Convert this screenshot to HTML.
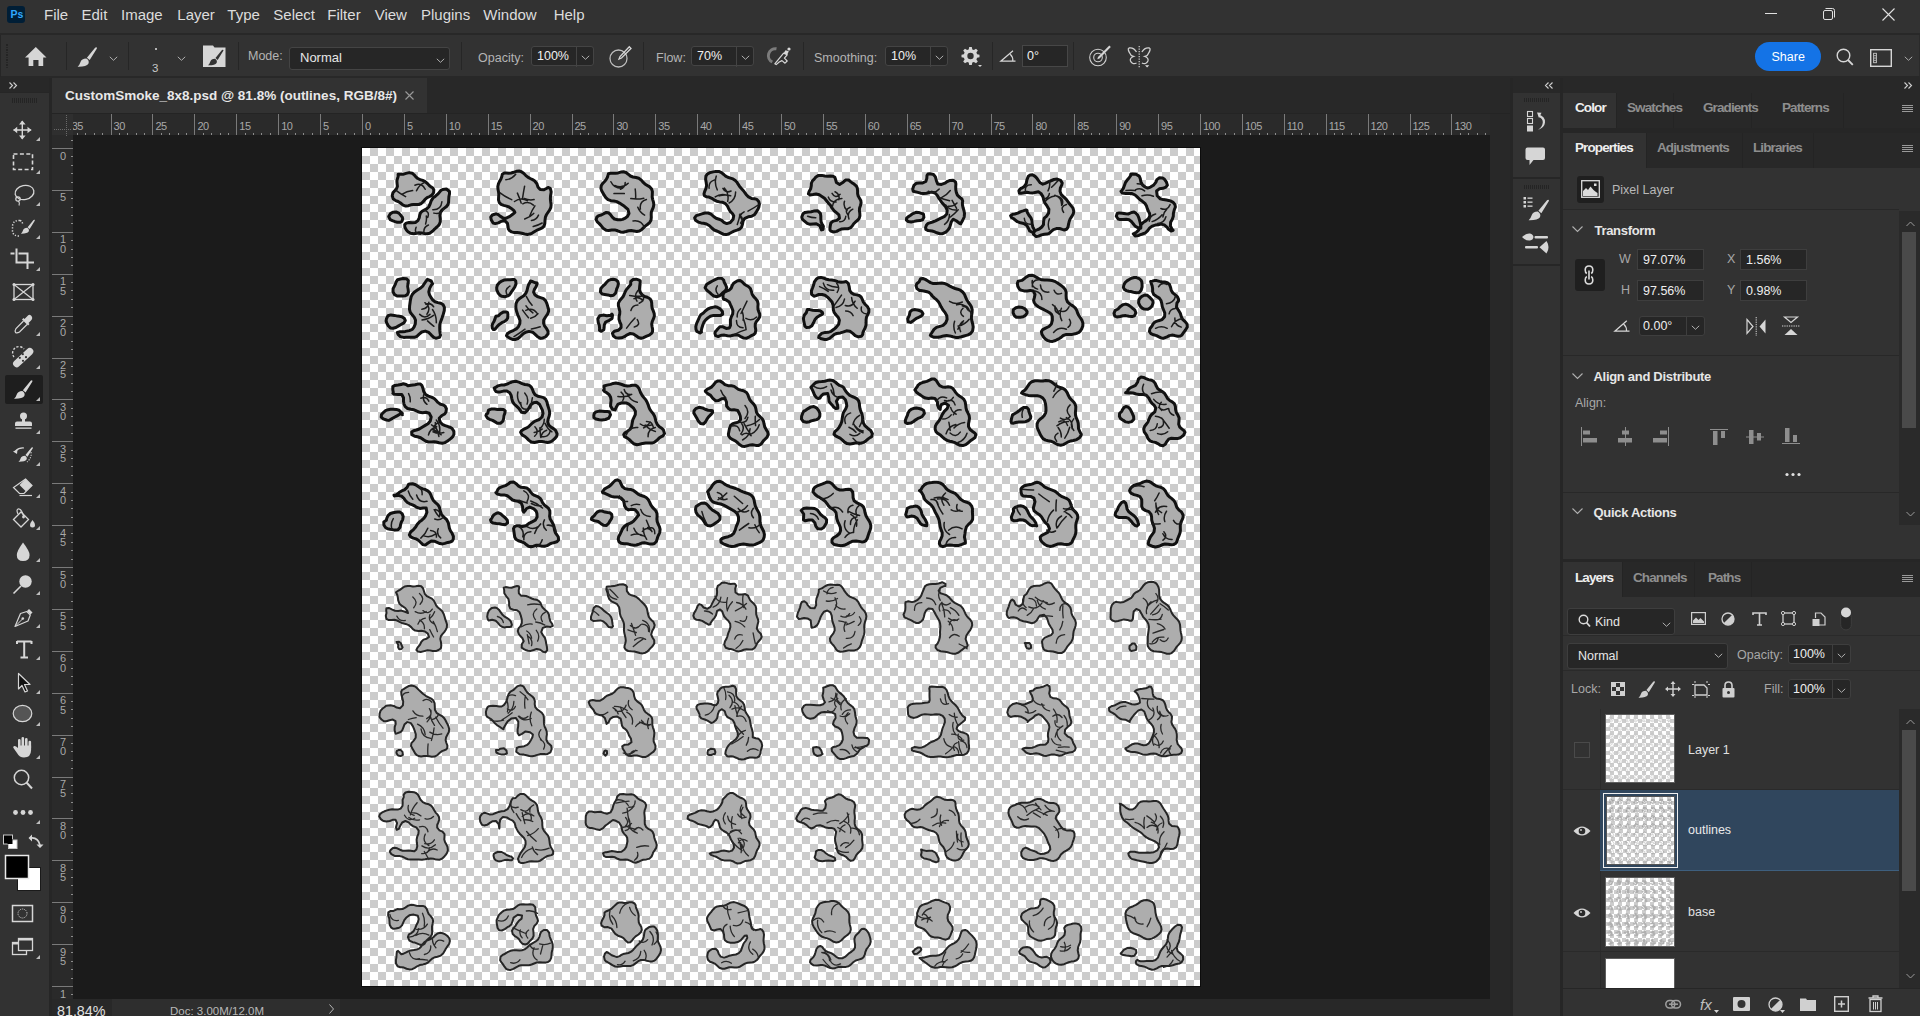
<!DOCTYPE html>
<html><head><meta charset="utf-8">
<style>
*{box-sizing:border-box;margin:0;padding:0}
html,body{width:1920px;height:1016px;overflow:hidden;background:#323232;font-family:"Liberation Sans",sans-serif;color:#d6d6d6}
.a{position:absolute}
.t{position:absolute;white-space:nowrap;line-height:1}
.s{position:absolute;overflow:visible}
.inp{position:absolute;background:#262626;border:1px solid #444444;border-radius:3px}
</style></head><body>
<div class="a" style="left:0px;top:0px;width:1920px;height:33px;background:#323232;"></div>
<div class="a" style="left:7px;top:6px;width:18px;height:17px;background:#001e36;border-radius:3px"></div>
<div class="t" style="left:10.6px;top:9.41px;font-size:10.5px;color:#31a8ff;font-weight:bold;letter-spacing:-0.1px">Ps</div>
<div class="t" style="left:44px;top:6.9px;font-size:15px;color:#dcdcdc;font-weight:normal;">File</div>
<div class="t" style="left:81.5px;top:6.9px;font-size:15px;color:#dcdcdc;font-weight:normal;">Edit</div>
<div class="t" style="left:121px;top:6.9px;font-size:15px;color:#dcdcdc;font-weight:normal;">Image</div>
<div class="t" style="left:177.3px;top:6.9px;font-size:15px;color:#dcdcdc;font-weight:normal;">Layer</div>
<div class="t" style="left:227.3px;top:6.9px;font-size:15px;color:#dcdcdc;font-weight:normal;">Type</div>
<div class="t" style="left:273.3px;top:6.9px;font-size:15px;color:#dcdcdc;font-weight:normal;">Select</div>
<div class="t" style="left:327.3px;top:6.9px;font-size:15px;color:#dcdcdc;font-weight:normal;">Filter</div>
<div class="t" style="left:374.7px;top:6.9px;font-size:15px;color:#dcdcdc;font-weight:normal;">View</div>
<div class="t" style="left:421px;top:6.9px;font-size:15px;color:#dcdcdc;font-weight:normal;">Plugins</div>
<div class="t" style="left:483.3px;top:6.9px;font-size:15px;color:#dcdcdc;font-weight:normal;">Window</div>
<div class="t" style="left:553.7px;top:6.9px;font-size:15px;color:#dcdcdc;font-weight:normal;">Help</div>
<div class="a" style="left:1765px;top:13px;width:12px;height:1px;background:#e0e0e0;"></div>
<svg class="s" style="left:1822px;top:7px" width="14" height="14" viewBox="0 0 14 14"><rect x="1.5" y="3.5" width="9" height="9" rx="1.5" fill="none" stroke="#e0e0e0" stroke-width="1"/><path d="M3.5 1.5H10.5Q12.5 1.5 12.5 3.5V10.5" fill="none" stroke="#e0e0e0" stroke-width="1"/></svg>
<svg class="s" style="left:1882px;top:8px" width="13" height="13" viewBox="0 0 13 13"><path d="M0.5 0.5L12.5 12.5M12.5 0.5L0.5 12.5" stroke="#e0e0e0" stroke-width="1.1"/></svg>
<div class="a" style="left:0px;top:33px;width:1920px;height:2px;background:#282828;"></div>
<div class="a" style="left:0px;top:35px;width:1920px;height:42px;background:#323232;"></div>
<div class="a" style="left:1919px;top:35px;width:1px;height:42px;background:#2a2a2a;"></div>
<div class="a" style="left:0px;top:76px;width:1920px;height:2px;background:#282828;"></div>
<div class="a" style="left:0px;top:35px;width:1px;height:42px;background:#262626;"></div>
<div class="a" style="left:6px;top:44px;width:2px;height:2px;background:#242424;"></div>
<div class="a" style="left:6px;top:46.5px;width:2px;height:1px;background:#262626;"></div>
<div class="a" style="left:6px;top:49px;width:2px;height:2px;background:#242424;"></div>
<div class="a" style="left:6px;top:51.5px;width:2px;height:1px;background:#262626;"></div>
<div class="a" style="left:6px;top:54px;width:2px;height:2px;background:#242424;"></div>
<div class="a" style="left:6px;top:56.5px;width:2px;height:1px;background:#262626;"></div>
<div class="a" style="left:6px;top:59px;width:2px;height:2px;background:#242424;"></div>
<div class="a" style="left:6px;top:61.5px;width:2px;height:1px;background:#262626;"></div>
<div class="a" style="left:6px;top:64px;width:2px;height:2px;background:#242424;"></div>
<div class="a" style="left:6px;top:66.5px;width:2px;height:1px;background:#262626;"></div>
<svg class="s" style="left:25px;top:47px" width="22" height="20" viewBox="0 0 22 20"><path d="M10.8 0L21.5 10.5H18.2V19H13.5V13H8.3V19H3.6V10.5H0Z" fill="#d6d6d6"/></svg>
<div class="a" style="left:66px;top:42px;width:1px;height:28px;background:#262626;"></div>
<svg class="s" style="left:77px;top:47px" width="20" height="20" viewBox="0 0 20 20"><path d="M19.8 0.5Q20.2 1.1 19.6 2L12.7 13.1 9.9 10.7 18.1 0.7Q19.1 -0.1 19.8 0.5Z M9.3 11.5Q12.7 13.5 11.4 16.8Q9.4 19.9 0.6 19.7Q2.6 18 3.4 15.2Q4.6 11.5 9.3 11.5Z" fill="#d6d6d6"/></svg>
<svg class="s" style="left:109px;top:55.5px" width="9" height="6" viewBox="0 0 9 6"><path d="M0.8 0.8L4.5 4.3 8.2 0.8" fill="none" stroke="#b0b0b0" stroke-width="1"/></svg>
<div class="a" style="left:128px;top:42px;width:1px;height:28px;background:#262626;"></div>
<div class="a" style="left:155px;top:48px;width:2px;height:2px;background:#e0e0e0;border-radius:1px"></div>
<div class="t" style="left:152px;top:63.27px;font-size:11.5px;color:#c8c8c8;font-weight:normal;">3</div>
<svg class="s" style="left:177px;top:55.5px" width="9" height="6" viewBox="0 0 9 6"><path d="M0.8 0.8L4.5 4.3 8.2 0.8" fill="none" stroke="#b0b0b0" stroke-width="1"/></svg>
<svg class="s" style="left:203px;top:45px" width="23" height="22" viewBox="0 0 23 22"><path d="M0 0.5H10L11.5 2.5H22.5V22H0Z" fill="#d6d6d6"/><g transform="translate(4.5,4.5) scale(0.8)"><path d="M19.8 0.5Q20.2 1.1 19.6 2L12.7 13.1 9.9 10.7 18.1 0.7Q19.1 -0.1 19.8 0.5Z M9.3 11.5Q12.7 13.5 11.4 16.8Q9.4 19.9 0.6 19.7Q2.6 18 3.4 15.2Q4.6 11.5 9.3 11.5Z" fill="#323232"/></g></svg>
<div class="a" style="left:238px;top:42px;width:1px;height:28px;background:#262626;"></div>
<div class="t" style="left:248px;top:49.72px;font-size:12.5px;color:#b4b4b4;font-weight:normal;">Mode:</div>
<div class="inp" style="left:289px;top:47px;width:161px;height:23px"></div>
<div class="t" style="left:300px;top:51.3px;font-size:13px;color:#e6e6e6;font-weight:normal;">Normal</div>
<svg class="s" style="left:436px;top:57.5px" width="9" height="6" viewBox="0 0 9 6"><path d="M0.8 0.8L4.5 4.3 8.2 0.8" fill="none" stroke="#b0b0b0" stroke-width="1"/></svg>
<div class="a" style="left:461px;top:42px;width:1px;height:28px;background:#262626;"></div>
<div class="t" style="left:478px;top:51.72px;font-size:12.5px;color:#b4b4b4;font-weight:normal;">Opacity:</div>
<div class="inp" style="left:531px;top:46px;width:63px;height:20px"></div>
<div class="a" style="left:576px;top:46px;width:1px;height:21px;background:#444444;"></div>
<div class="t" style="left:537px;top:50.02px;font-size:12.5px;color:#f0f0f0;font-weight:normal;">100%</div>
<svg class="s" style="left:581px;top:54.5px" width="9" height="6" viewBox="0 0 9 6"><path d="M0.8 0.8L4.5 4.3 8.2 0.8" fill="none" stroke="#b0b0b0" stroke-width="1"/></svg>
<svg class="s" style="left:609px;top:46px" width="23" height="22" viewBox="0 0 23 22"><circle cx="9.5" cy="12.5" r="8.5" fill="none" stroke="#bdbdbd" stroke-width="1.3"/><circle cx="9.5" cy="12.5" r="7" fill="#3a3a3a"/><path d="M20.3 0.8L22 2.5 12.5 12 10 13 11 10.5Z" fill="none" stroke="#d6d6d6" stroke-width="1.3"/></svg>
<div class="a" style="left:643px;top:42px;width:1px;height:28px;background:#262626;"></div>
<div class="t" style="left:656px;top:51.72px;font-size:12.5px;color:#b4b4b4;font-weight:normal;">Flow:</div>
<div class="inp" style="left:691px;top:46px;width:63px;height:20px"></div>
<div class="a" style="left:736px;top:46px;width:1px;height:21px;background:#444444;"></div>
<div class="t" style="left:697px;top:50.02px;font-size:12.5px;color:#f0f0f0;font-weight:normal;">70%</div>
<svg class="s" style="left:741px;top:54.5px" width="9" height="6" viewBox="0 0 9 6"><path d="M0.8 0.8L4.5 4.3 8.2 0.8" fill="none" stroke="#b0b0b0" stroke-width="1"/></svg>
<svg class="s" style="left:764px;top:42px" width="30" height="28" viewBox="0 0 30 28"><path d="M12.5 6.8A7 7 0 0 0 8.3 20" fill="none" stroke="#7c7c7c" stroke-width="3"/><path d="M10.8 21.8L19.6 11.2 23.2 12.8 20.4 16.2 23.2 19 21 21.2 18 18.6 15.2 20 12.2 22.6Z" fill="none" stroke="#d8d8d8" stroke-width="1.2" stroke-linejoin="round"/><path d="M19.6 11.2L21.5 8.2 24.8 9.2 23.2 12.8Z" fill="#d8d8d8"/><circle cx="25" cy="7" r="1.6" fill="#d8d8d8"/></svg>
<div class="a" style="left:803px;top:42px;width:1px;height:28px;background:#262626;"></div>
<div class="t" style="left:814px;top:51.72px;font-size:12.5px;color:#b4b4b4;font-weight:normal;">Smoothing:</div>
<div class="inp" style="left:885px;top:46px;width:63px;height:20px"></div>
<div class="a" style="left:930px;top:46px;width:1px;height:21px;background:#444444;"></div>
<div class="t" style="left:891px;top:50.02px;font-size:12.5px;color:#f0f0f0;font-weight:normal;">10%</div>
<svg class="s" style="left:935px;top:54.5px" width="9" height="6" viewBox="0 0 9 6"><path d="M0.8 0.8L4.5 4.3 8.2 0.8" fill="none" stroke="#b0b0b0" stroke-width="1"/></svg>
<svg class="s" style="left:962px;top:47px" width="20" height="20" viewBox="0 0 20 20"><path d="M7.2 0H9.8L10.3 2.4 11.9 3.1 14 1.7 15.8 3.5 14.4 5.6 15.1 7.2 17.5 7.7V10.3L15.1 10.8 14.4 12.4 15.8 14.5 14 16.3 11.9 14.9 10.3 15.6 9.8 18H7.2L6.7 15.6 5.1 14.9 3 16.3 1.2 14.5 2.6 12.4 1.9 10.8-0.5 10.3V7.7L1.9 7.2 2.6 5.6 1.2 3.5 3 1.7 5.1 3.1 6.7 2.4Z" fill="#d6d6d6"/><circle cx="8.5" cy="9" r="3.2" fill="#323232"/><path d="M16 18L20 18 18 20Z" fill="#d6d6d6"/></svg>
<div class="a" style="left:992px;top:42px;width:1px;height:28px;background:#262626;"></div>
<svg class="s" style="left:1000px;top:50px" width="17" height="12" viewBox="0 0 17 12"><path d="M15.5 11.2H0.8L13 0.8M10.2 4.2Q13.2 7 12.8 11" fill="none" stroke="#d6d6d6" stroke-width="1.2"/></svg>
<div class="inp" style="left:1022px;top:45px;width:46px;height:22px;border-radius:0;border-color:#474747"></div>
<div class="t" style="left:1027px;top:50.02px;font-size:12.5px;color:#f0f0f0;font-weight:normal;">0&deg;</div>
<div class="a" style="left:1073px;top:42px;width:1px;height:28px;background:#262626;"></div>
<svg class="s" style="left:1089px;top:45px" width="22" height="22" viewBox="0 0 22 22"><circle cx="9" cy="12.5" r="8.3" fill="none" stroke="#d0d0d0" stroke-width="1.1"/><circle cx="9" cy="12.5" r="4.3" fill="none" stroke="#d0d0d0" stroke-width="1.1"/><path d="M20.3 0.6L21.8 2.1 10.5 13.4 8.3 14.3 9 12Z" fill="#d6d6d6"/></svg>
<svg class="s" style="left:1124px;top:42px" width="30" height="30" viewBox="0 0 30 30"><path d="M12.5 10C11 7.5 8 5.5 5 6C3.5 6.5 4.5 9 6 11.5C6.5 13 7 14 9.5 14.5C7 15.5 6 17.5 6.5 19C7.5 21.5 10 22.5 12.5 21" fill="none" stroke="#d0d0d0" stroke-width="1.3"/><g transform="translate(30.4,0) scale(-1,1)"><path d="M12.5 10C11 7.5 8 5.5 5 6C3.5 6.5 4.5 9 6 11.5C6.5 13 7 14 9.5 14.5C7 15.5 6 17.5 6.5 19C7.5 21.5 10 22.5 12.5 21" fill="none" stroke="#d0d0d0" stroke-width="1.3"/></g><path d="M15.2 4V26" stroke="#d0d0d0" stroke-width="1.2" stroke-dasharray="1.2 1.3"/><path d="M21 23.3H25.2L23.1 25.6Z" fill="#e0e0e0"/></svg>
<div class="a" style="left:1755px;top:42px;width:66px;height:29px;background:#1473e6;border-radius:14.5px"></div>
<div class="t" style="left:1771.5px;top:50.72px;font-size:12.5px;color:#ffffff;font-weight:normal;">Share</div>
<svg class="s" style="left:1836px;top:48px" width="18" height="19" viewBox="0 0 18 19"><circle cx="7.5" cy="7.5" r="6.3" fill="none" stroke="#d6d6d6" stroke-width="1.4"/><path d="M12 12L16.8 16.8" stroke="#d6d6d6" stroke-width="1.8"/></svg>
<svg class="s" style="left:1870px;top:49px" width="22" height="18" viewBox="0 0 22 18"><rect x="0.7" y="0.7" width="20.6" height="16.6" fill="none" stroke="#d6d6d6" stroke-width="1.4"/><rect x="3.6" y="4.3" width="2.8" height="9.4" fill="none" stroke="#c8c8c8" stroke-width="0.9"/><rect x="4.3" y="6" width="1.4" height="1.3" fill="#c8c8c8"/><rect x="4.3" y="8.4" width="1.4" height="1.3" fill="#c8c8c8"/><rect x="4.3" y="10.8" width="1.4" height="1.3" fill="#c8c8c8"/></svg>
<svg class="s" style="left:1904px;top:55.5px" width="9" height="6" viewBox="0 0 9 6"><path d="M0.8 0.8L4.5 4.3 8.2 0.8" fill="none" stroke="#a8a8a8" stroke-width="1"/></svg>
<div class="a" style="left:0px;top:78px;width:49px;height:15px;background:#282828;"></div>
<svg class="s" style="left:9px;top:82px" width="9" height="7" viewBox="0 0 9 7"><path d="M0.5 0.5L3.5 3.5 0.5 6.5M4.5 0.5L7.5 3.5 4.5 6.5" fill="none" stroke="#cfcfcf" stroke-width="1.1"/></svg>
<div class="a" style="left:49px;top:78px;width:3px;height:938px;background:#262626;"></div>
<div class="a" style="left:0px;top:93px;width:49px;height:923px;background:#323232;"></div>
<div class="a" style="left:0px;top:92px;width:49px;height:1px;background:#262626;"></div>
<div class="a" style="left:52px;top:78px;width:1458px;height:35px;background:#282828;"></div>
<div class="a" style="left:52px;top:78px;width:375px;height:35px;background:#323232;"></div>
<div class="t" style="left:64.9px;top:88.87px;font-size:13.5px;color:#e8e8e8;font-weight:bold;">CustomSmoke_8x8.psd @ 81.8% (outlines, RGB/8#)</div>
<svg class="s" style="left:405px;top:91px" width="9" height="9" viewBox="0 0 9 9"><path d="M0.5 0.5L8.5 8.5M8.5 0.5L0.5 8.5" stroke="#9a9a9a" stroke-width="1.1"/></svg>
<div class="a" style="left:52px;top:113px;width:1458px;height:1px;background:#242424;"></div>
<div class="a" style="left:52px;top:114px;width:21px;height:21px;background:#2f2f2f;"></div>
<div class="a" style="left:73px;top:114px;width:1417px;height:21px;background:#2a2a2a;"></div>
<div class="a" style="left:52px;top:135px;width:21px;height:864px;background:#2a2a2a;"></div>
<div class="a" style="left:73px;top:135px;width:1417px;height:864px;background:#1b1b1b;"></div>
<div class="a" style="left:1490px;top:114px;width:20px;height:885px;background:#282828;"></div>
<div class="a" style="left:54px;top:129px;width:1px;height:1px;background:#6a6a6a;"></div>
<div class="a" style="left:56px;top:129px;width:1px;height:1px;background:#6a6a6a;"></div>
<div class="a" style="left:58px;top:129px;width:1px;height:1px;background:#6a6a6a;"></div>
<div class="a" style="left:60px;top:129px;width:1px;height:1px;background:#6a6a6a;"></div>
<div class="a" style="left:62px;top:129px;width:1px;height:1px;background:#6a6a6a;"></div>
<div class="a" style="left:64px;top:129px;width:1px;height:1px;background:#6a6a6a;"></div>
<div class="a" style="left:66px;top:129px;width:1px;height:1px;background:#6a6a6a;"></div>
<div class="a" style="left:68px;top:129px;width:1px;height:1px;background:#6a6a6a;"></div>
<div class="a" style="left:70px;top:129px;width:1px;height:1px;background:#6a6a6a;"></div>
<div class="a" style="left:66px;top:115px;width:1px;height:1px;background:#6a6a6a;"></div>
<div class="a" style="left:66px;top:117px;width:1px;height:1px;background:#6a6a6a;"></div>
<div class="a" style="left:66px;top:119px;width:1px;height:1px;background:#6a6a6a;"></div>
<div class="a" style="left:66px;top:121px;width:1px;height:1px;background:#6a6a6a;"></div>
<div class="a" style="left:66px;top:123px;width:1px;height:1px;background:#6a6a6a;"></div>
<div class="a" style="left:66px;top:125px;width:1px;height:1px;background:#6a6a6a;"></div>
<div class="a" style="left:66px;top:127px;width:1px;height:1px;background:#6a6a6a;"></div>
<div class="a" style="left:66px;top:129px;width:1px;height:1px;background:#6a6a6a;"></div>
<div class="a" style="left:66px;top:131px;width:1px;height:1px;background:#6a6a6a;"></div>
<div class="a" style="left:66px;top:133px;width:1px;height:1px;background:#6a6a6a;"></div>
<div class="a" style="left:66px;top:135px;width:1px;height:1px;background:#6a6a6a;"></div>
<div class="a" style="left:77px;top:133px;width:1px;height:2px;background:#8c8c8c"></div><div class="a" style="left:85px;top:133px;width:1px;height:2px;background:#8c8c8c"></div><div class="a" style="left:94px;top:133px;width:1px;height:2px;background:#8c8c8c"></div><div class="a" style="left:102px;top:133px;width:1px;height:2px;background:#8c8c8c"></div><div class="a" style="left:111px;top:114px;width:1px;height:21px;background:#7a7a7a"></div><div class="a" style="left:119px;top:133px;width:1px;height:2px;background:#8c8c8c"></div><div class="a" style="left:127px;top:133px;width:1px;height:2px;background:#8c8c8c"></div><div class="a" style="left:136px;top:133px;width:1px;height:2px;background:#8c8c8c"></div><div class="a" style="left:144px;top:133px;width:1px;height:2px;background:#8c8c8c"></div><div class="a" style="left:152px;top:114px;width:1px;height:21px;background:#7a7a7a"></div><div class="a" style="left:161px;top:133px;width:1px;height:2px;background:#8c8c8c"></div><div class="a" style="left:169px;top:133px;width:1px;height:2px;background:#8c8c8c"></div><div class="a" style="left:178px;top:133px;width:1px;height:2px;background:#8c8c8c"></div><div class="a" style="left:186px;top:133px;width:1px;height:2px;background:#8c8c8c"></div><div class="a" style="left:194px;top:114px;width:1px;height:21px;background:#7a7a7a"></div><div class="a" style="left:203px;top:133px;width:1px;height:2px;background:#8c8c8c"></div><div class="a" style="left:211px;top:133px;width:1px;height:2px;background:#8c8c8c"></div><div class="a" style="left:220px;top:133px;width:1px;height:2px;background:#8c8c8c"></div><div class="a" style="left:228px;top:133px;width:1px;height:2px;background:#8c8c8c"></div><div class="a" style="left:236px;top:114px;width:1px;height:21px;background:#7a7a7a"></div><div class="a" style="left:245px;top:133px;width:1px;height:2px;background:#8c8c8c"></div><div class="a" style="left:253px;top:133px;width:1px;height:2px;background:#8c8c8c"></div><div class="a" style="left:261px;top:133px;width:1px;height:2px;background:#8c8c8c"></div><div class="a" style="left:270px;top:133px;width:1px;height:2px;background:#8c8c8c"></div><div class="a" style="left:278px;top:114px;width:1px;height:21px;background:#7a7a7a"></div><div class="a" style="left:287px;top:133px;width:1px;height:2px;background:#8c8c8c"></div><div class="a" style="left:295px;top:133px;width:1px;height:2px;background:#8c8c8c"></div><div class="a" style="left:303px;top:133px;width:1px;height:2px;background:#8c8c8c"></div><div class="a" style="left:312px;top:133px;width:1px;height:2px;background:#8c8c8c"></div><div class="a" style="left:320px;top:114px;width:1px;height:21px;background:#7a7a7a"></div><div class="a" style="left:328px;top:133px;width:1px;height:2px;background:#8c8c8c"></div><div class="a" style="left:337px;top:133px;width:1px;height:2px;background:#8c8c8c"></div><div class="a" style="left:345px;top:133px;width:1px;height:2px;background:#8c8c8c"></div><div class="a" style="left:354px;top:133px;width:1px;height:2px;background:#8c8c8c"></div><div class="a" style="left:362px;top:114px;width:1px;height:21px;background:#7a7a7a"></div><div class="a" style="left:370px;top:133px;width:1px;height:2px;background:#8c8c8c"></div><div class="a" style="left:379px;top:133px;width:1px;height:2px;background:#8c8c8c"></div><div class="a" style="left:387px;top:133px;width:1px;height:2px;background:#8c8c8c"></div><div class="a" style="left:396px;top:133px;width:1px;height:2px;background:#8c8c8c"></div><div class="a" style="left:404px;top:114px;width:1px;height:21px;background:#7a7a7a"></div><div class="a" style="left:412px;top:133px;width:1px;height:2px;background:#8c8c8c"></div><div class="a" style="left:421px;top:133px;width:1px;height:2px;background:#8c8c8c"></div><div class="a" style="left:429px;top:133px;width:1px;height:2px;background:#8c8c8c"></div><div class="a" style="left:437px;top:133px;width:1px;height:2px;background:#8c8c8c"></div><div class="a" style="left:446px;top:114px;width:1px;height:21px;background:#7a7a7a"></div><div class="a" style="left:454px;top:133px;width:1px;height:2px;background:#8c8c8c"></div><div class="a" style="left:463px;top:133px;width:1px;height:2px;background:#8c8c8c"></div><div class="a" style="left:471px;top:133px;width:1px;height:2px;background:#8c8c8c"></div><div class="a" style="left:479px;top:133px;width:1px;height:2px;background:#8c8c8c"></div><div class="a" style="left:488px;top:114px;width:1px;height:21px;background:#7a7a7a"></div><div class="a" style="left:496px;top:133px;width:1px;height:2px;background:#8c8c8c"></div><div class="a" style="left:504px;top:133px;width:1px;height:2px;background:#8c8c8c"></div><div class="a" style="left:513px;top:133px;width:1px;height:2px;background:#8c8c8c"></div><div class="a" style="left:521px;top:133px;width:1px;height:2px;background:#8c8c8c"></div><div class="a" style="left:530px;top:114px;width:1px;height:21px;background:#7a7a7a"></div><div class="a" style="left:538px;top:133px;width:1px;height:2px;background:#8c8c8c"></div><div class="a" style="left:546px;top:133px;width:1px;height:2px;background:#8c8c8c"></div><div class="a" style="left:555px;top:133px;width:1px;height:2px;background:#8c8c8c"></div><div class="a" style="left:563px;top:133px;width:1px;height:2px;background:#8c8c8c"></div><div class="a" style="left:572px;top:114px;width:1px;height:21px;background:#7a7a7a"></div><div class="a" style="left:580px;top:133px;width:1px;height:2px;background:#8c8c8c"></div><div class="a" style="left:588px;top:133px;width:1px;height:2px;background:#8c8c8c"></div><div class="a" style="left:597px;top:133px;width:1px;height:2px;background:#8c8c8c"></div><div class="a" style="left:605px;top:133px;width:1px;height:2px;background:#8c8c8c"></div><div class="a" style="left:613px;top:114px;width:1px;height:21px;background:#7a7a7a"></div><div class="a" style="left:622px;top:133px;width:1px;height:2px;background:#8c8c8c"></div><div class="a" style="left:630px;top:133px;width:1px;height:2px;background:#8c8c8c"></div><div class="a" style="left:639px;top:133px;width:1px;height:2px;background:#8c8c8c"></div><div class="a" style="left:647px;top:133px;width:1px;height:2px;background:#8c8c8c"></div><div class="a" style="left:655px;top:114px;width:1px;height:21px;background:#7a7a7a"></div><div class="a" style="left:664px;top:133px;width:1px;height:2px;background:#8c8c8c"></div><div class="a" style="left:672px;top:133px;width:1px;height:2px;background:#8c8c8c"></div><div class="a" style="left:680px;top:133px;width:1px;height:2px;background:#8c8c8c"></div><div class="a" style="left:689px;top:133px;width:1px;height:2px;background:#8c8c8c"></div><div class="a" style="left:697px;top:114px;width:1px;height:21px;background:#7a7a7a"></div><div class="a" style="left:706px;top:133px;width:1px;height:2px;background:#8c8c8c"></div><div class="a" style="left:714px;top:133px;width:1px;height:2px;background:#8c8c8c"></div><div class="a" style="left:722px;top:133px;width:1px;height:2px;background:#8c8c8c"></div><div class="a" style="left:731px;top:133px;width:1px;height:2px;background:#8c8c8c"></div><div class="a" style="left:739px;top:114px;width:1px;height:21px;background:#7a7a7a"></div><div class="a" style="left:747px;top:133px;width:1px;height:2px;background:#8c8c8c"></div><div class="a" style="left:756px;top:133px;width:1px;height:2px;background:#8c8c8c"></div><div class="a" style="left:764px;top:133px;width:1px;height:2px;background:#8c8c8c"></div><div class="a" style="left:773px;top:133px;width:1px;height:2px;background:#8c8c8c"></div><div class="a" style="left:781px;top:114px;width:1px;height:21px;background:#7a7a7a"></div><div class="a" style="left:789px;top:133px;width:1px;height:2px;background:#8c8c8c"></div><div class="a" style="left:798px;top:133px;width:1px;height:2px;background:#8c8c8c"></div><div class="a" style="left:806px;top:133px;width:1px;height:2px;background:#8c8c8c"></div><div class="a" style="left:815px;top:133px;width:1px;height:2px;background:#8c8c8c"></div><div class="a" style="left:823px;top:114px;width:1px;height:21px;background:#7a7a7a"></div><div class="a" style="left:831px;top:133px;width:1px;height:2px;background:#8c8c8c"></div><div class="a" style="left:840px;top:133px;width:1px;height:2px;background:#8c8c8c"></div><div class="a" style="left:848px;top:133px;width:1px;height:2px;background:#8c8c8c"></div><div class="a" style="left:856px;top:133px;width:1px;height:2px;background:#8c8c8c"></div><div class="a" style="left:865px;top:114px;width:1px;height:21px;background:#7a7a7a"></div><div class="a" style="left:873px;top:133px;width:1px;height:2px;background:#8c8c8c"></div><div class="a" style="left:882px;top:133px;width:1px;height:2px;background:#8c8c8c"></div><div class="a" style="left:890px;top:133px;width:1px;height:2px;background:#8c8c8c"></div><div class="a" style="left:898px;top:133px;width:1px;height:2px;background:#8c8c8c"></div><div class="a" style="left:907px;top:114px;width:1px;height:21px;background:#7a7a7a"></div><div class="a" style="left:915px;top:133px;width:1px;height:2px;background:#8c8c8c"></div><div class="a" style="left:923px;top:133px;width:1px;height:2px;background:#8c8c8c"></div><div class="a" style="left:932px;top:133px;width:1px;height:2px;background:#8c8c8c"></div><div class="a" style="left:940px;top:133px;width:1px;height:2px;background:#8c8c8c"></div><div class="a" style="left:949px;top:114px;width:1px;height:21px;background:#7a7a7a"></div><div class="a" style="left:957px;top:133px;width:1px;height:2px;background:#8c8c8c"></div><div class="a" style="left:965px;top:133px;width:1px;height:2px;background:#8c8c8c"></div><div class="a" style="left:974px;top:133px;width:1px;height:2px;background:#8c8c8c"></div><div class="a" style="left:982px;top:133px;width:1px;height:2px;background:#8c8c8c"></div><div class="a" style="left:991px;top:114px;width:1px;height:21px;background:#7a7a7a"></div><div class="a" style="left:999px;top:133px;width:1px;height:2px;background:#8c8c8c"></div><div class="a" style="left:1007px;top:133px;width:1px;height:2px;background:#8c8c8c"></div><div class="a" style="left:1016px;top:133px;width:1px;height:2px;background:#8c8c8c"></div><div class="a" style="left:1024px;top:133px;width:1px;height:2px;background:#8c8c8c"></div><div class="a" style="left:1032px;top:114px;width:1px;height:21px;background:#7a7a7a"></div><div class="a" style="left:1041px;top:133px;width:1px;height:2px;background:#8c8c8c"></div><div class="a" style="left:1049px;top:133px;width:1px;height:2px;background:#8c8c8c"></div><div class="a" style="left:1058px;top:133px;width:1px;height:2px;background:#8c8c8c"></div><div class="a" style="left:1066px;top:133px;width:1px;height:2px;background:#8c8c8c"></div><div class="a" style="left:1074px;top:114px;width:1px;height:21px;background:#7a7a7a"></div><div class="a" style="left:1083px;top:133px;width:1px;height:2px;background:#8c8c8c"></div><div class="a" style="left:1091px;top:133px;width:1px;height:2px;background:#8c8c8c"></div><div class="a" style="left:1099px;top:133px;width:1px;height:2px;background:#8c8c8c"></div><div class="a" style="left:1108px;top:133px;width:1px;height:2px;background:#8c8c8c"></div><div class="a" style="left:1116px;top:114px;width:1px;height:21px;background:#7a7a7a"></div><div class="a" style="left:1125px;top:133px;width:1px;height:2px;background:#8c8c8c"></div><div class="a" style="left:1133px;top:133px;width:1px;height:2px;background:#8c8c8c"></div><div class="a" style="left:1141px;top:133px;width:1px;height:2px;background:#8c8c8c"></div><div class="a" style="left:1150px;top:133px;width:1px;height:2px;background:#8c8c8c"></div><div class="a" style="left:1158px;top:114px;width:1px;height:21px;background:#7a7a7a"></div><div class="a" style="left:1166px;top:133px;width:1px;height:2px;background:#8c8c8c"></div><div class="a" style="left:1175px;top:133px;width:1px;height:2px;background:#8c8c8c"></div><div class="a" style="left:1183px;top:133px;width:1px;height:2px;background:#8c8c8c"></div><div class="a" style="left:1192px;top:133px;width:1px;height:2px;background:#8c8c8c"></div><div class="a" style="left:1200px;top:114px;width:1px;height:21px;background:#7a7a7a"></div><div class="a" style="left:1208px;top:133px;width:1px;height:2px;background:#8c8c8c"></div><div class="a" style="left:1217px;top:133px;width:1px;height:2px;background:#8c8c8c"></div><div class="a" style="left:1225px;top:133px;width:1px;height:2px;background:#8c8c8c"></div><div class="a" style="left:1234px;top:133px;width:1px;height:2px;background:#8c8c8c"></div><div class="a" style="left:1242px;top:114px;width:1px;height:21px;background:#7a7a7a"></div><div class="a" style="left:1250px;top:133px;width:1px;height:2px;background:#8c8c8c"></div><div class="a" style="left:1259px;top:133px;width:1px;height:2px;background:#8c8c8c"></div><div class="a" style="left:1267px;top:133px;width:1px;height:2px;background:#8c8c8c"></div><div class="a" style="left:1275px;top:133px;width:1px;height:2px;background:#8c8c8c"></div><div class="a" style="left:1284px;top:114px;width:1px;height:21px;background:#7a7a7a"></div><div class="a" style="left:1292px;top:133px;width:1px;height:2px;background:#8c8c8c"></div><div class="a" style="left:1301px;top:133px;width:1px;height:2px;background:#8c8c8c"></div><div class="a" style="left:1309px;top:133px;width:1px;height:2px;background:#8c8c8c"></div><div class="a" style="left:1317px;top:133px;width:1px;height:2px;background:#8c8c8c"></div><div class="a" style="left:1326px;top:114px;width:1px;height:21px;background:#7a7a7a"></div><div class="a" style="left:1334px;top:133px;width:1px;height:2px;background:#8c8c8c"></div><div class="a" style="left:1342px;top:133px;width:1px;height:2px;background:#8c8c8c"></div><div class="a" style="left:1351px;top:133px;width:1px;height:2px;background:#8c8c8c"></div><div class="a" style="left:1359px;top:133px;width:1px;height:2px;background:#8c8c8c"></div><div class="a" style="left:1368px;top:114px;width:1px;height:21px;background:#7a7a7a"></div><div class="a" style="left:1376px;top:133px;width:1px;height:2px;background:#8c8c8c"></div><div class="a" style="left:1384px;top:133px;width:1px;height:2px;background:#8c8c8c"></div><div class="a" style="left:1393px;top:133px;width:1px;height:2px;background:#8c8c8c"></div><div class="a" style="left:1401px;top:133px;width:1px;height:2px;background:#8c8c8c"></div><div class="a" style="left:1410px;top:114px;width:1px;height:21px;background:#7a7a7a"></div><div class="a" style="left:1418px;top:133px;width:1px;height:2px;background:#8c8c8c"></div><div class="a" style="left:1426px;top:133px;width:1px;height:2px;background:#8c8c8c"></div><div class="a" style="left:1435px;top:133px;width:1px;height:2px;background:#8c8c8c"></div><div class="a" style="left:1443px;top:133px;width:1px;height:2px;background:#8c8c8c"></div><div class="a" style="left:1451px;top:114px;width:1px;height:21px;background:#7a7a7a"></div><div class="a" style="left:1460px;top:133px;width:1px;height:2px;background:#8c8c8c"></div><div class="a" style="left:1468px;top:133px;width:1px;height:2px;background:#8c8c8c"></div><div class="a" style="left:1477px;top:133px;width:1px;height:2px;background:#8c8c8c"></div><div class="a" style="left:1485px;top:133px;width:1px;height:2px;background:#8c8c8c"></div>
<div class="a" style="left:73px;top:114px;width:1417px;height:21px;overflow:hidden">
<div class="t" style="left:-1.3px;top:121px;font-size:11px;color:#a8a8a8;top:6.9px;letter-spacing:-0.5px">35</div>
<div class="t" style="left:40.6px;top:121px;font-size:11px;color:#a8a8a8;top:6.9px;letter-spacing:-0.5px">30</div>
<div class="t" style="left:82.5px;top:121px;font-size:11px;color:#a8a8a8;top:6.9px;letter-spacing:-0.5px">25</div>
<div class="t" style="left:124.4px;top:121px;font-size:11px;color:#a8a8a8;top:6.9px;letter-spacing:-0.5px">20</div>
<div class="t" style="left:166.3px;top:121px;font-size:11px;color:#a8a8a8;top:6.9px;letter-spacing:-0.5px">15</div>
<div class="t" style="left:208.2px;top:121px;font-size:11px;color:#a8a8a8;top:6.9px;letter-spacing:-0.5px">10</div>
<div class="t" style="left:250.1px;top:121px;font-size:11px;color:#a8a8a8;top:6.9px;letter-spacing:-0.5px">5</div>
<div class="t" style="left:292.0px;top:121px;font-size:11px;color:#a8a8a8;top:6.9px;letter-spacing:-0.5px">0</div>
<div class="t" style="left:333.9px;top:121px;font-size:11px;color:#a8a8a8;top:6.9px;letter-spacing:-0.5px">5</div>
<div class="t" style="left:375.8px;top:121px;font-size:11px;color:#a8a8a8;top:6.9px;letter-spacing:-0.5px">10</div>
<div class="t" style="left:417.7px;top:121px;font-size:11px;color:#a8a8a8;top:6.9px;letter-spacing:-0.5px">15</div>
<div class="t" style="left:459.6px;top:121px;font-size:11px;color:#a8a8a8;top:6.9px;letter-spacing:-0.5px">20</div>
<div class="t" style="left:501.5px;top:121px;font-size:11px;color:#a8a8a8;top:6.9px;letter-spacing:-0.5px">25</div>
<div class="t" style="left:543.4px;top:121px;font-size:11px;color:#a8a8a8;top:6.9px;letter-spacing:-0.5px">30</div>
<div class="t" style="left:585.3px;top:121px;font-size:11px;color:#a8a8a8;top:6.9px;letter-spacing:-0.5px">35</div>
<div class="t" style="left:627.2px;top:121px;font-size:11px;color:#a8a8a8;top:6.9px;letter-spacing:-0.5px">40</div>
<div class="t" style="left:669.1px;top:121px;font-size:11px;color:#a8a8a8;top:6.9px;letter-spacing:-0.5px">45</div>
<div class="t" style="left:711.0px;top:121px;font-size:11px;color:#a8a8a8;top:6.9px;letter-spacing:-0.5px">50</div>
<div class="t" style="left:752.9px;top:121px;font-size:11px;color:#a8a8a8;top:6.9px;letter-spacing:-0.5px">55</div>
<div class="t" style="left:794.8px;top:121px;font-size:11px;color:#a8a8a8;top:6.9px;letter-spacing:-0.5px">60</div>
<div class="t" style="left:836.7px;top:121px;font-size:11px;color:#a8a8a8;top:6.9px;letter-spacing:-0.5px">65</div>
<div class="t" style="left:878.6px;top:121px;font-size:11px;color:#a8a8a8;top:6.9px;letter-spacing:-0.5px">70</div>
<div class="t" style="left:920.5px;top:121px;font-size:11px;color:#a8a8a8;top:6.9px;letter-spacing:-0.5px">75</div>
<div class="t" style="left:962.4px;top:121px;font-size:11px;color:#a8a8a8;top:6.9px;letter-spacing:-0.5px">80</div>
<div class="t" style="left:1004.3px;top:121px;font-size:11px;color:#a8a8a8;top:6.9px;letter-spacing:-0.5px">85</div>
<div class="t" style="left:1046.2px;top:121px;font-size:11px;color:#a8a8a8;top:6.9px;letter-spacing:-0.5px">90</div>
<div class="t" style="left:1088.1px;top:121px;font-size:11px;color:#a8a8a8;top:6.9px;letter-spacing:-0.5px">95</div>
<div class="t" style="left:1130.0px;top:121px;font-size:11px;color:#a8a8a8;top:6.9px;letter-spacing:-0.5px">100</div>
<div class="t" style="left:1171.9px;top:121px;font-size:11px;color:#a8a8a8;top:6.9px;letter-spacing:-0.5px">105</div>
<div class="t" style="left:1213.8px;top:121px;font-size:11px;color:#a8a8a8;top:6.9px;letter-spacing:-0.5px">110</div>
<div class="t" style="left:1255.7px;top:121px;font-size:11px;color:#a8a8a8;top:6.9px;letter-spacing:-0.5px">115</div>
<div class="t" style="left:1297.6px;top:121px;font-size:11px;color:#a8a8a8;top:6.9px;letter-spacing:-0.5px">120</div>
<div class="t" style="left:1339.5px;top:121px;font-size:11px;color:#a8a8a8;top:6.9px;letter-spacing:-0.5px">125</div>
<div class="t" style="left:1381.4px;top:121px;font-size:11px;color:#a8a8a8;top:6.9px;letter-spacing:-0.5px">130</div>
<div class="t" style="left:1423.3px;top:121px;font-size:11px;color:#a8a8a8;top:6.9px;letter-spacing:-0.5px">135</div>
</div>
<div class="a" style="left:71px;top:140px;width:2px;height:1px;background:#8c8c8c"></div><div class="a" style="left:52px;top:148px;width:21px;height:1px;background:#7a7a7a"></div><div class="a" style="left:71px;top:156px;width:2px;height:1px;background:#8c8c8c"></div><div class="a" style="left:71px;top:165px;width:2px;height:1px;background:#8c8c8c"></div><div class="a" style="left:71px;top:173px;width:2px;height:1px;background:#8c8c8c"></div><div class="a" style="left:71px;top:182px;width:2px;height:1px;background:#8c8c8c"></div><div class="a" style="left:52px;top:190px;width:21px;height:1px;background:#7a7a7a"></div><div class="a" style="left:71px;top:198px;width:2px;height:1px;background:#8c8c8c"></div><div class="a" style="left:71px;top:207px;width:2px;height:1px;background:#8c8c8c"></div><div class="a" style="left:71px;top:215px;width:2px;height:1px;background:#8c8c8c"></div><div class="a" style="left:71px;top:223px;width:2px;height:1px;background:#8c8c8c"></div><div class="a" style="left:52px;top:232px;width:21px;height:1px;background:#7a7a7a"></div><div class="a" style="left:71px;top:240px;width:2px;height:1px;background:#8c8c8c"></div><div class="a" style="left:71px;top:249px;width:2px;height:1px;background:#8c8c8c"></div><div class="a" style="left:71px;top:257px;width:2px;height:1px;background:#8c8c8c"></div><div class="a" style="left:71px;top:265px;width:2px;height:1px;background:#8c8c8c"></div><div class="a" style="left:52px;top:274px;width:21px;height:1px;background:#7a7a7a"></div><div class="a" style="left:71px;top:282px;width:2px;height:1px;background:#8c8c8c"></div><div class="a" style="left:71px;top:290px;width:2px;height:1px;background:#8c8c8c"></div><div class="a" style="left:71px;top:299px;width:2px;height:1px;background:#8c8c8c"></div><div class="a" style="left:71px;top:307px;width:2px;height:1px;background:#8c8c8c"></div><div class="a" style="left:52px;top:316px;width:21px;height:1px;background:#7a7a7a"></div><div class="a" style="left:71px;top:324px;width:2px;height:1px;background:#8c8c8c"></div><div class="a" style="left:71px;top:332px;width:2px;height:1px;background:#8c8c8c"></div><div class="a" style="left:71px;top:341px;width:2px;height:1px;background:#8c8c8c"></div><div class="a" style="left:71px;top:349px;width:2px;height:1px;background:#8c8c8c"></div><div class="a" style="left:52px;top:358px;width:21px;height:1px;background:#7a7a7a"></div><div class="a" style="left:71px;top:366px;width:2px;height:1px;background:#8c8c8c"></div><div class="a" style="left:71px;top:374px;width:2px;height:1px;background:#8c8c8c"></div><div class="a" style="left:71px;top:383px;width:2px;height:1px;background:#8c8c8c"></div><div class="a" style="left:71px;top:391px;width:2px;height:1px;background:#8c8c8c"></div><div class="a" style="left:52px;top:399px;width:21px;height:1px;background:#7a7a7a"></div><div class="a" style="left:71px;top:408px;width:2px;height:1px;background:#8c8c8c"></div><div class="a" style="left:71px;top:416px;width:2px;height:1px;background:#8c8c8c"></div><div class="a" style="left:71px;top:425px;width:2px;height:1px;background:#8c8c8c"></div><div class="a" style="left:71px;top:433px;width:2px;height:1px;background:#8c8c8c"></div><div class="a" style="left:52px;top:441px;width:21px;height:1px;background:#7a7a7a"></div><div class="a" style="left:71px;top:450px;width:2px;height:1px;background:#8c8c8c"></div><div class="a" style="left:71px;top:458px;width:2px;height:1px;background:#8c8c8c"></div><div class="a" style="left:71px;top:466px;width:2px;height:1px;background:#8c8c8c"></div><div class="a" style="left:71px;top:475px;width:2px;height:1px;background:#8c8c8c"></div><div class="a" style="left:52px;top:483px;width:21px;height:1px;background:#7a7a7a"></div><div class="a" style="left:71px;top:492px;width:2px;height:1px;background:#8c8c8c"></div><div class="a" style="left:71px;top:500px;width:2px;height:1px;background:#8c8c8c"></div><div class="a" style="left:71px;top:508px;width:2px;height:1px;background:#8c8c8c"></div><div class="a" style="left:71px;top:517px;width:2px;height:1px;background:#8c8c8c"></div><div class="a" style="left:52px;top:525px;width:21px;height:1px;background:#7a7a7a"></div><div class="a" style="left:71px;top:533px;width:2px;height:1px;background:#8c8c8c"></div><div class="a" style="left:71px;top:542px;width:2px;height:1px;background:#8c8c8c"></div><div class="a" style="left:71px;top:550px;width:2px;height:1px;background:#8c8c8c"></div><div class="a" style="left:71px;top:559px;width:2px;height:1px;background:#8c8c8c"></div><div class="a" style="left:52px;top:567px;width:21px;height:1px;background:#7a7a7a"></div><div class="a" style="left:71px;top:575px;width:2px;height:1px;background:#8c8c8c"></div><div class="a" style="left:71px;top:584px;width:2px;height:1px;background:#8c8c8c"></div><div class="a" style="left:71px;top:592px;width:2px;height:1px;background:#8c8c8c"></div><div class="a" style="left:71px;top:601px;width:2px;height:1px;background:#8c8c8c"></div><div class="a" style="left:52px;top:609px;width:21px;height:1px;background:#7a7a7a"></div><div class="a" style="left:71px;top:617px;width:2px;height:1px;background:#8c8c8c"></div><div class="a" style="left:71px;top:626px;width:2px;height:1px;background:#8c8c8c"></div><div class="a" style="left:71px;top:634px;width:2px;height:1px;background:#8c8c8c"></div><div class="a" style="left:71px;top:642px;width:2px;height:1px;background:#8c8c8c"></div><div class="a" style="left:52px;top:651px;width:21px;height:1px;background:#7a7a7a"></div><div class="a" style="left:71px;top:659px;width:2px;height:1px;background:#8c8c8c"></div><div class="a" style="left:71px;top:668px;width:2px;height:1px;background:#8c8c8c"></div><div class="a" style="left:71px;top:676px;width:2px;height:1px;background:#8c8c8c"></div><div class="a" style="left:71px;top:684px;width:2px;height:1px;background:#8c8c8c"></div><div class="a" style="left:52px;top:693px;width:21px;height:1px;background:#7a7a7a"></div><div class="a" style="left:71px;top:701px;width:2px;height:1px;background:#8c8c8c"></div><div class="a" style="left:71px;top:709px;width:2px;height:1px;background:#8c8c8c"></div><div class="a" style="left:71px;top:718px;width:2px;height:1px;background:#8c8c8c"></div><div class="a" style="left:71px;top:726px;width:2px;height:1px;background:#8c8c8c"></div><div class="a" style="left:52px;top:735px;width:21px;height:1px;background:#7a7a7a"></div><div class="a" style="left:71px;top:743px;width:2px;height:1px;background:#8c8c8c"></div><div class="a" style="left:71px;top:751px;width:2px;height:1px;background:#8c8c8c"></div><div class="a" style="left:71px;top:760px;width:2px;height:1px;background:#8c8c8c"></div><div class="a" style="left:71px;top:768px;width:2px;height:1px;background:#8c8c8c"></div><div class="a" style="left:52px;top:777px;width:21px;height:1px;background:#7a7a7a"></div><div class="a" style="left:71px;top:785px;width:2px;height:1px;background:#8c8c8c"></div><div class="a" style="left:71px;top:793px;width:2px;height:1px;background:#8c8c8c"></div><div class="a" style="left:71px;top:802px;width:2px;height:1px;background:#8c8c8c"></div><div class="a" style="left:71px;top:810px;width:2px;height:1px;background:#8c8c8c"></div><div class="a" style="left:52px;top:818px;width:21px;height:1px;background:#7a7a7a"></div><div class="a" style="left:71px;top:827px;width:2px;height:1px;background:#8c8c8c"></div><div class="a" style="left:71px;top:835px;width:2px;height:1px;background:#8c8c8c"></div><div class="a" style="left:71px;top:844px;width:2px;height:1px;background:#8c8c8c"></div><div class="a" style="left:71px;top:852px;width:2px;height:1px;background:#8c8c8c"></div><div class="a" style="left:52px;top:860px;width:21px;height:1px;background:#7a7a7a"></div><div class="a" style="left:71px;top:869px;width:2px;height:1px;background:#8c8c8c"></div><div class="a" style="left:71px;top:877px;width:2px;height:1px;background:#8c8c8c"></div><div class="a" style="left:71px;top:885px;width:2px;height:1px;background:#8c8c8c"></div><div class="a" style="left:71px;top:894px;width:2px;height:1px;background:#8c8c8c"></div><div class="a" style="left:52px;top:902px;width:21px;height:1px;background:#7a7a7a"></div><div class="a" style="left:71px;top:911px;width:2px;height:1px;background:#8c8c8c"></div><div class="a" style="left:71px;top:919px;width:2px;height:1px;background:#8c8c8c"></div><div class="a" style="left:71px;top:927px;width:2px;height:1px;background:#8c8c8c"></div><div class="a" style="left:71px;top:936px;width:2px;height:1px;background:#8c8c8c"></div><div class="a" style="left:52px;top:944px;width:21px;height:1px;background:#7a7a7a"></div><div class="a" style="left:71px;top:952px;width:2px;height:1px;background:#8c8c8c"></div><div class="a" style="left:71px;top:961px;width:2px;height:1px;background:#8c8c8c"></div><div class="a" style="left:71px;top:969px;width:2px;height:1px;background:#8c8c8c"></div><div class="a" style="left:71px;top:978px;width:2px;height:1px;background:#8c8c8c"></div><div class="a" style="left:52px;top:986px;width:21px;height:1px;background:#7a7a7a"></div><div class="a" style="left:71px;top:994px;width:2px;height:1px;background:#8c8c8c"></div>
<div class="a" style="left:52px;top:135px;width:21px;height:864px;overflow:hidden">
<div class="t" style="left:8px;top:15.5px;font-size:11px;color:#a8a8a8">0</div>
<div class="t" style="left:8px;top:57.4px;font-size:11px;color:#a8a8a8">5</div>
<div class="t" style="left:8px;top:99.3px;font-size:11px;color:#a8a8a8">1</div>
<div class="t" style="left:8px;top:108.6px;font-size:11px;color:#a8a8a8">0</div>
<div class="t" style="left:8px;top:141.2px;font-size:11px;color:#a8a8a8">1</div>
<div class="t" style="left:8px;top:150.5px;font-size:11px;color:#a8a8a8">5</div>
<div class="t" style="left:8px;top:183.1px;font-size:11px;color:#a8a8a8">2</div>
<div class="t" style="left:8px;top:192.4px;font-size:11px;color:#a8a8a8">0</div>
<div class="t" style="left:8px;top:225.0px;font-size:11px;color:#a8a8a8">2</div>
<div class="t" style="left:8px;top:234.3px;font-size:11px;color:#a8a8a8">5</div>
<div class="t" style="left:8px;top:266.9px;font-size:11px;color:#a8a8a8">3</div>
<div class="t" style="left:8px;top:276.2px;font-size:11px;color:#a8a8a8">0</div>
<div class="t" style="left:8px;top:308.8px;font-size:11px;color:#a8a8a8">3</div>
<div class="t" style="left:8px;top:318.1px;font-size:11px;color:#a8a8a8">5</div>
<div class="t" style="left:8px;top:350.7px;font-size:11px;color:#a8a8a8">4</div>
<div class="t" style="left:8px;top:360.0px;font-size:11px;color:#a8a8a8">0</div>
<div class="t" style="left:8px;top:392.6px;font-size:11px;color:#a8a8a8">4</div>
<div class="t" style="left:8px;top:401.9px;font-size:11px;color:#a8a8a8">5</div>
<div class="t" style="left:8px;top:434.5px;font-size:11px;color:#a8a8a8">5</div>
<div class="t" style="left:8px;top:443.8px;font-size:11px;color:#a8a8a8">0</div>
<div class="t" style="left:8px;top:476.4px;font-size:11px;color:#a8a8a8">5</div>
<div class="t" style="left:8px;top:485.7px;font-size:11px;color:#a8a8a8">5</div>
<div class="t" style="left:8px;top:518.3px;font-size:11px;color:#a8a8a8">6</div>
<div class="t" style="left:8px;top:527.6px;font-size:11px;color:#a8a8a8">0</div>
<div class="t" style="left:8px;top:560.2px;font-size:11px;color:#a8a8a8">6</div>
<div class="t" style="left:8px;top:569.5px;font-size:11px;color:#a8a8a8">5</div>
<div class="t" style="left:8px;top:602.1px;font-size:11px;color:#a8a8a8">7</div>
<div class="t" style="left:8px;top:611.4px;font-size:11px;color:#a8a8a8">0</div>
<div class="t" style="left:8px;top:644.0px;font-size:11px;color:#a8a8a8">7</div>
<div class="t" style="left:8px;top:653.3px;font-size:11px;color:#a8a8a8">5</div>
<div class="t" style="left:8px;top:685.9px;font-size:11px;color:#a8a8a8">8</div>
<div class="t" style="left:8px;top:695.2px;font-size:11px;color:#a8a8a8">0</div>
<div class="t" style="left:8px;top:727.8px;font-size:11px;color:#a8a8a8">8</div>
<div class="t" style="left:8px;top:737.1px;font-size:11px;color:#a8a8a8">5</div>
<div class="t" style="left:8px;top:769.7px;font-size:11px;color:#a8a8a8">9</div>
<div class="t" style="left:8px;top:779.0px;font-size:11px;color:#a8a8a8">0</div>
<div class="t" style="left:8px;top:811.6px;font-size:11px;color:#a8a8a8">9</div>
<div class="t" style="left:8px;top:820.9px;font-size:11px;color:#a8a8a8">5</div>
<div class="t" style="left:8px;top:853.5px;font-size:11px;color:#a8a8a8">1</div>
<div class="t" style="left:8px;top:862.8px;font-size:11px;color:#a8a8a8">0</div>
<div class="t" style="left:8px;top:872.1px;font-size:11px;color:#a8a8a8">0</div>
</div>
<div class="a" style="left:52px;top:999px;width:1458px;height:17px;background:#282828;"></div>
<div class="a" style="left:112px;top:999px;width:228px;height:17px;background:#2e2e2e;"></div>
<div class="t" style="left:57px;top:1004.4px;font-size:14.3px;color:#e0e0e0;font-weight:normal;">81.84%</div>
<div class="t" style="left:170px;top:1005.57px;font-size:11.5px;color:#b8b8b8;font-weight:normal;">Doc: 3.00M/12.0M</div>
<svg class="s" style="left:329px;top:1004px" width="5" height="10" viewBox="0 0 5 10"><path d="M0.5 0.5L4.5 5 0.5 9.5" fill="none" stroke="#b8b8b8" stroke-width="1"/></svg>
<div class="a" style="left:1510px;top:78px;width:3px;height:938px;background:#262626;"></div>
<div class="a" style="left:1513px;top:78px;width:47px;height:15px;background:#282828;"></div>
<svg class="s" style="left:1545px;top:82px" width="9" height="7" viewBox="0 0 9 7"><path d="M3.5 0.5L0.5 3.5 3.5 6.5M7.5 0.5L4.5 3.5 7.5 6.5" fill="none" stroke="#cfcfcf" stroke-width="1.1"/></svg>
<div class="a" style="left:1560px;top:78px;width:3px;height:938px;background:#262626;"></div>
<div class="a" style="left:1563px;top:78px;width:357px;height:15px;background:#282828;"></div>
<svg class="s" style="left:1904px;top:82px" width="9" height="7" viewBox="0 0 9 7"><path d="M0.5 0.5L3.5 3.5 0.5 6.5M4.5 0.5L7.5 3.5 4.5 6.5" fill="none" stroke="#cfcfcf" stroke-width="1.1"/></svg>
<div class="a" style="left:12px;top:98px;width:1px;height:5px;background:#242424;"></div>
<div class="a" style="left:14px;top:98px;width:1px;height:5px;background:#242424;"></div>
<div class="a" style="left:16px;top:98px;width:1px;height:5px;background:#242424;"></div>
<div class="a" style="left:18px;top:98px;width:1px;height:5px;background:#242424;"></div>
<div class="a" style="left:20px;top:98px;width:1px;height:5px;background:#242424;"></div>
<div class="a" style="left:22px;top:98px;width:1px;height:5px;background:#242424;"></div>
<div class="a" style="left:24px;top:98px;width:1px;height:5px;background:#242424;"></div>
<div class="a" style="left:26px;top:98px;width:1px;height:5px;background:#242424;"></div>
<div class="a" style="left:28px;top:98px;width:1px;height:5px;background:#242424;"></div>
<div class="a" style="left:30px;top:98px;width:1px;height:5px;background:#242424;"></div>
<div class="a" style="left:32px;top:98px;width:1px;height:5px;background:#242424;"></div>
<div class="a" style="left:34px;top:98px;width:1px;height:5px;background:#242424;"></div>
<div class="a" style="left:36px;top:98px;width:1px;height:5px;background:#242424;"></div>
<div class="a" style="left:5px;top:375px;width:38px;height:29px;background:#1e1e1e;border-radius:2px"></div>
<svg class="s" style="left:0;top:0" width="49" height="1016" viewBox="0 0 49 1016"><path d="M22.3 121V139M13.5 130H31.2" stroke="#d6d6d6" stroke-width="1.4"/><path d="M22.3 120.6L19 124.5H25.6ZM22.3 139.4L19 135.5H25.6ZM13.3 130L17.2 126.7V133.3ZM31.4 130L27.5 126.7V133.3Z" fill="#d6d6d6"/><path d="M40 137V141H36Z" fill="#bdbdbd"/><rect x="13.5" y="154" width="19" height="15.5" fill="none" stroke="#d6d6d6" stroke-width="1.6" stroke-dasharray="4 2.4"/><path d="M40 170V174H36Z" fill="#bdbdbd"/><ellipse cx="24.5" cy="192.5" rx="9.5" ry="7" transform="rotate(-12 24.5 192.5)" fill="none" stroke="#d6d6d6" stroke-width="1.3"/><circle cx="18" cy="199" r="2.2" fill="none" stroke="#d6d6d6" stroke-width="1.2"/><path d="M18.5 201C20 203 19.5 204.5 19 205.5" fill="none" stroke="#d6d6d6" stroke-width="1.2"/><path d="M40 202V206H36Z" fill="#bdbdbd"/><path d="M20 220.5Q13 220 12.5 226V231Q13 236 19 236" fill="none" stroke="#d6d6d6" stroke-width="1.5" stroke-dasharray="1.3 1.6"/><path d="M20 220.5Q22.5 221 22.5 224" fill="none" stroke="#d6d6d6" stroke-width="1.5" stroke-dasharray="1.3 1.6"/><g transform="translate(20.5,219.5) scale(0.72)"><path d="M19.8 0.5Q20.2 1.1 19.6 2L12.7 13.1 9.9 10.7 18.1 0.7Q19.1 -0.1 19.8 0.5Z M9.3 11.5Q12.7 13.5 11.4 16.8Q9.4 19.9 0.6 19.7Q2.6 18 3.4 15.2Q4.6 11.5 9.3 11.5Z" fill="#d6d6d6"/></g><path d="M40 235V239H36Z" fill="#bdbdbd"/><path d="M16.5 248.5V262.5H30.5M10.5 253.5H14.5M18.5 253.5H27.5V269M30 262.5H34" fill="none" stroke="#d6d6d6" stroke-width="2"/><path d="M40 267V271H36Z" fill="#bdbdbd"/><rect x="14" y="284.5" width="19" height="15" fill="none" stroke="#d6d6d6" stroke-width="1.3"/><path d="M14 284.5L33 299.5M33 284.5L14 299.5" stroke="#d6d6d6" stroke-width="1.2"/><circle cx="14" cy="284.5" r="1.5" fill="#d6d6d6"/><circle cx="33" cy="284.5" r="1.5" fill="#d6d6d6"/><circle cx="14" cy="299.5" r="1.5" fill="#d6d6d6"/><circle cx="33" cy="299.5" r="1.5" fill="#d6d6d6"/><path d="M31 315.5Q33.5 318 31 320.5L28.5 323 29.5 324 28 325.5 22 319.5 23.5 318 24.5 319 27 316.5Q29 313.5 31 315.5Z" fill="#d6d6d6"/><path d="M23.5 321L16 328.5Q14.5 331 15.5 332.5Q17 333.5 19.5 332L27 324.5" fill="none" stroke="#d6d6d6" stroke-width="1.2"/><path d="M40 332V336H36Z" fill="#bdbdbd"/><path d="M14 357A5.8 5.8 0 1 1 24 349" fill="none" stroke="#d6d6d6" stroke-width="1.4" stroke-dasharray="2.2 1.6"/><rect x="10.7" y="354" width="25" height="7.2" rx="3.6" transform="rotate(-43 23.2 357.6)" fill="#d6d6d6"/><circle cx="22.8" cy="354.2" r="1.1" fill="#323232"/><circle cx="26" cy="357.2" r="1.1" fill="#323232"/><circle cx="19.8" cy="357.8" r="1.1" fill="#323232"/><circle cx="23" cy="360.8" r="1.1" fill="#323232"/><path d="M40 365V369H36Z" fill="#bdbdbd"/><g transform="translate(13.5,380) scale(0.95)"><path d="M19.8 0.5Q20.2 1.1 19.6 2L12.7 13.1 9.9 10.7 18.1 0.7Q19.1 -0.1 19.8 0.5Z M9.3 11.5Q12.7 13.5 11.4 16.8Q9.4 19.9 0.6 19.7Q2.6 18 3.4 15.2Q4.6 11.5 9.3 11.5Z" fill="#d6d6d6"/></g><path d="M40 397V401H36Z" fill="#bdbdbd"/><circle cx="23.5" cy="416" r="3.5" fill="#d6d6d6"/><path d="M22 418.5H25V421.5H30Q32 421.5 32 423.5V426H15V423.5Q15 421.5 17 421.5H22Z" fill="#d6d6d6"/><rect x="15.5" y="427.5" width="16" height="1.3" fill="#d6d6d6"/><path d="M40 430V434H36Z" fill="#bdbdbd"/><g transform="translate(18,447) scale(0.75)"><path d="M19.8 0.5Q20.2 1.1 19.6 2L12.7 13.1 9.9 10.7 18.1 0.7Q19.1 -0.1 19.8 0.5Z M9.3 11.5Q12.7 13.5 11.4 16.8Q9.4 19.9 0.6 19.7Q2.6 18 3.4 15.2Q4.6 11.5 9.3 11.5Z" fill="#d6d6d6"/></g><path d="M15.5 451Q19 447.5 24 448" fill="none" stroke="#d6d6d6" stroke-width="1.2"/><path d="M13 451.5L17.5 449.5 17 454Z" fill="#d6d6d6"/><path d="M31 452Q32 458 27 462" fill="none" stroke="#d6d6d6" stroke-width="1.1" stroke-dasharray="1.3 1.3"/><path d="M40 462V466H36Z" fill="#bdbdbd"/><path d="M25.5 479L32 485.5 24 493.5H19.5L13.5 487.5Z" fill="none" stroke="#d6d6d6" stroke-width="1.2"/><path d="M25.5 479L32 485.5 26 491.5 19.5 485Z" fill="#d6d6d6"/><path d="M19.5 495.5H32" stroke="#d6d6d6" stroke-width="1.2"/><path d="M40 494V498H36Z" fill="#bdbdbd"/><path d="M13.5 519.5L21 512 28.5 519.5 21 527Z" fill="none" stroke="#d6d6d6" stroke-width="1.3"/><path d="M18 514Q16 510 18 509Q20.5 508.5 22.5 513L24 517" fill="none" stroke="#d6d6d6" stroke-width="1.2"/><circle cx="23.5" cy="517" r="1.4" fill="#d6d6d6"/><path d="M32.5 520Q35 523 35 525Q35 527.5 32.5 527.5Q30 527.5 30 525Q30 523 32.5 520Z" fill="#d6d6d6"/><path d="M40 526V530H36Z" fill="#bdbdbd"/><path d="M23 542.5Q29.6 551 29.6 555Q29.6 561 23 561Q16.8 561 16.8 555Q16.8 551 23 542.5Z" fill="#d6d6d6"/><path d="M40 558V562H36Z" fill="#bdbdbd"/><circle cx="25.5" cy="581.5" r="6.2" fill="#d6d6d6"/><path d="M21 586L13.5 593.5" stroke="#d6d6d6" stroke-width="1.6"/><path d="M40 591V595H36Z" fill="#bdbdbd"/><path d="M29 609L32.5 612.5 30.5 614.5 27 611Z" fill="#d6d6d6"/><path d="M26.8 611.5L30.3 615 28 621 15 626.5 20.5 613.5Z" fill="none" stroke="#d6d6d6" stroke-width="1.2" stroke-linejoin="round"/><path d="M15.5 626L22.5 619" stroke="#d6d6d6" stroke-width="1"/><circle cx="22.8" cy="618.5" r="1.3" fill="#d6d6d6"/><path d="M40 624V628H36Z" fill="#bdbdbd"/><path d="M17 641V644M31.5 641V644M17 641.5H31.5M24.2 641.5V657.5M20.5 657.5H28" fill="none" stroke="#d6d6d6" stroke-width="2"/><path d="M40 656V660H36Z" fill="#bdbdbd"/><path d="M18.5 673.5V689L22 685.5 25 692 27.5 691 24.5 684.5H30Z" fill="#111" stroke="#d6d6d6" stroke-width="1.2" stroke-linejoin="round"/><path d="M40 690V694H36Z" fill="#bdbdbd"/><ellipse cx="22.5" cy="713.5" rx="9.3" ry="8.2" fill="#555" stroke="#d6d6d6" stroke-width="1.2"/><path d="M40 722V726H36Z" fill="#bdbdbd"/><path d="M19.3 748V740.2M22.8 747V738.2M26.3 747V739.2M29.8 748V742" stroke="#d6d6d6" stroke-width="2.6" stroke-linecap="round"/><path d="M18 745.5H31.1V750Q31 757.5 24 757.5Q19.5 757.5 17 753L13.3 747.8Q12.7 746.2 14.3 745.9Q15.8 745.7 18 748Z" fill="#d6d6d6"/><path d="M40 755V759H36Z" fill="#bdbdbd"/><circle cx="21.5" cy="777.5" r="7.2" fill="none" stroke="#d6d6d6" stroke-width="1.5"/><path d="M26.5 782.5L32 788.5" stroke="#d6d6d6" stroke-width="2"/><circle cx="15.5" cy="812.5" r="2.4" fill="#d6d6d6"/><circle cx="23" cy="812.5" r="2.4" fill="#d6d6d6"/><circle cx="30.5" cy="812.5" r="2.4" fill="#d6d6d6"/><path d="M40 820V824H36Z" fill="#bdbdbd"/><rect x="3.5" y="835" width="9" height="9" fill="#000" stroke="#c8c8c8" stroke-width="1"/><rect x="8.5" y="840" width="8.5" height="8.5" fill="#fff" stroke="#c8c8c8" stroke-width="1"/><rect x="7.5" y="839" width="5" height="5" fill="#000"/><path d="M30.5 838Q38 837 40 845" fill="none" stroke="#d6d6d6" stroke-width="1.6"/><path d="M28.5 838L32 834.5V841.5ZM40 848L36.5 844.5H43.5Z" fill="#d6d6d6"/><rect x="17.5" y="867.5" width="23" height="23" fill="#fff" stroke="#1a1a1a" stroke-width="1"/><rect x="5.5" y="855.5" width="23" height="23" fill="#000" stroke="#e8e8e8" stroke-width="1.5"/><rect x="12.5" y="905.5" width="20" height="16" fill="none" stroke="#d6d6d6" stroke-width="1.5"/><circle cx="22.5" cy="913.5" r="4.5" fill="none" stroke="#d6d6d6" stroke-width="1" stroke-dasharray="1 1"/><rect x="12.5" y="942.5" width="14" height="12" fill="#323232" stroke="#d6d6d6" stroke-width="1.3"/><rect x="18.5" y="938.5" width="14" height="12" fill="#323232" stroke="#d6d6d6" stroke-width="1.3"/><rect x="18.5" y="938.5" width="14" height="2" fill="#d6d6d6"/><rect x="12.5" y="942.5" width="6" height="2" fill="#d6d6d6"/><path d="M40 955V959H36Z" fill="#bdbdbd"/></svg>
<div class="a" style="left:1513px;top:93px;width:47px;height:85px;background:#323232;"></div>
<div class="a" style="left:1513px;top:177px;width:47px;height:2px;background:#262626;"></div>
<div class="a" style="left:1513px;top:179px;width:47px;height:85px;background:#323232;"></div>
<div class="a" style="left:1513px;top:264px;width:47px;height:2px;background:#262626;"></div>
<div class="a" style="left:1524px;top:98px;width:1px;height:4px;background:#242424;"></div>
<div class="a" style="left:1526px;top:98px;width:1px;height:4px;background:#242424;"></div>
<div class="a" style="left:1528px;top:98px;width:1px;height:4px;background:#242424;"></div>
<div class="a" style="left:1530px;top:98px;width:1px;height:4px;background:#242424;"></div>
<div class="a" style="left:1532px;top:98px;width:1px;height:4px;background:#242424;"></div>
<div class="a" style="left:1534px;top:98px;width:1px;height:4px;background:#242424;"></div>
<div class="a" style="left:1536px;top:98px;width:1px;height:4px;background:#242424;"></div>
<div class="a" style="left:1538px;top:98px;width:1px;height:4px;background:#242424;"></div>
<div class="a" style="left:1540px;top:98px;width:1px;height:4px;background:#242424;"></div>
<div class="a" style="left:1542px;top:98px;width:1px;height:4px;background:#242424;"></div>
<div class="a" style="left:1544px;top:98px;width:1px;height:4px;background:#242424;"></div>
<div class="a" style="left:1546px;top:98px;width:1px;height:4px;background:#242424;"></div>
<div class="a" style="left:1548px;top:98px;width:1px;height:4px;background:#242424;"></div>
<div class="a" style="left:1524px;top:185px;width:1px;height:4px;background:#242424;"></div>
<div class="a" style="left:1526px;top:185px;width:1px;height:4px;background:#242424;"></div>
<div class="a" style="left:1528px;top:185px;width:1px;height:4px;background:#242424;"></div>
<div class="a" style="left:1530px;top:185px;width:1px;height:4px;background:#242424;"></div>
<div class="a" style="left:1532px;top:185px;width:1px;height:4px;background:#242424;"></div>
<div class="a" style="left:1534px;top:185px;width:1px;height:4px;background:#242424;"></div>
<div class="a" style="left:1536px;top:185px;width:1px;height:4px;background:#242424;"></div>
<div class="a" style="left:1538px;top:185px;width:1px;height:4px;background:#242424;"></div>
<div class="a" style="left:1540px;top:185px;width:1px;height:4px;background:#242424;"></div>
<div class="a" style="left:1542px;top:185px;width:1px;height:4px;background:#242424;"></div>
<div class="a" style="left:1544px;top:185px;width:1px;height:4px;background:#242424;"></div>
<div class="a" style="left:1546px;top:185px;width:1px;height:4px;background:#242424;"></div>
<div class="a" style="left:1548px;top:185px;width:1px;height:4px;background:#242424;"></div>
<svg class="s" style="left:0;top:0" width="1920" height="1016" viewBox="0 0 1920 1016"><rect x="1527.5" y="111.5" width="5" height="5" fill="none" stroke="#d6d6d6" stroke-width="1.1"/><rect x="1527.5" y="118.5" width="5" height="5" fill="none" stroke="#d6d6d6" stroke-width="1.1"/><rect x="1527" y="125.5" width="6" height="6" fill="#d6d6d6"/><path d="M1538.5 114.5Q1545.5 116.5 1545 122.5Q1544.5 127.5 1538 130Q1542.5 126.5 1542.8 122.5Q1543 118.5 1539 117Z" fill="#d6d6d6"/><path d="M1537 112.5L1541.5 112.8 1539 118Z" fill="#d6d6d6"/><path d="M1527.5 147.5H1543Q1545 147.5 1545 149.5V158Q1545 160 1543 160H1533.5L1529.5 165V160H1527.5Q1525.5 160 1525.5 158V149.5Q1525.5 147.5 1527.5 147.5Z" fill="#d6d6d6"/><rect x="1523.5" y="197" width="2.5" height="2.5" fill="#d6d6d6"/><rect x="1523.5" y="201" width="2.5" height="2.5" fill="#d6d6d6"/><rect x="1523.5" y="205" width="2.5" height="2.5" fill="#d6d6d6"/><rect x="1527.5" y="197.5" width="5" height="1.3" fill="#d6d6d6"/><rect x="1527.5" y="201.5" width="5" height="1.3" fill="#d6d6d6"/><rect x="1527.5" y="205.5" width="5" height="1.3" fill="#d6d6d6"/><g transform="translate(1528,199.5) scale(1.05)"><path d="M19.8 0.5Q20.2 1.1 19.6 2L12.7 13.1 9.9 10.7 18.1 0.7Q19.1 -0.1 19.8 0.5Z M9.3 11.5Q12.7 13.5 11.4 16.8Q9.4 19.9 0.6 19.7Q2.6 18 3.4 15.2Q4.6 11.5 9.3 11.5Z" fill="#d6d6d6"/></g><path d="M1522 237Q1526 233 1530 233.5Q1533 234 1533.5 237Q1533 240 1530 240.5Q1526 241 1522 237Z" fill="#d6d6d6"/><rect x="1534.5" y="236" width="13.5" height="2.5" rx="1" fill="#d6d6d6"/><rect x="1525" y="246" width="13" height="2.5" rx="1" fill="#d6d6d6"/><path d="M1539.5 247.3L1546.5 241Q1548.5 244 1548.5 247.3Q1548.5 250.5 1546.5 253.5Z" fill="#d6d6d6"/></svg>
<div class="a" style="left:1563px;top:93px;width:357px;height:35px;background:#282828;"></div>
<div class="a" style="left:1563px;top:93px;width:53px;height:35px;background:#323232;"></div>
<div class="a" style="left:1616px;top:93px;width:1px;height:35px;background:#242424;"></div>
<div class="a" style="left:1673px;top:93px;width:1px;height:35px;background:#242424;"></div>
<div class="a" style="left:1751px;top:93px;width:1px;height:35px;background:#242424;"></div>
<div class="a" style="left:1843px;top:93px;width:1px;height:35px;background:#242424;"></div>
<div class="t" style="left:1575px;top:101.37px;font-size:13.5px;color:#eeeeee;font-weight:bold;letter-spacing:-0.9px">Color</div>
<div class="t" style="left:1627px;top:101.37px;font-size:13.5px;color:#8e8e8e;font-weight:bold;letter-spacing:-0.9px">Swatches</div>
<div class="t" style="left:1703px;top:101.37px;font-size:13.5px;color:#8e8e8e;font-weight:bold;letter-spacing:-0.9px">Gradients</div>
<div class="t" style="left:1782px;top:101.37px;font-size:13.5px;color:#8e8e8e;font-weight:bold;letter-spacing:-0.9px">Patterns</div>
<div class="a" style="left:1902px;top:105px;width:11px;height:1px;background:#9a9a9a;"></div>
<div class="a" style="left:1902px;top:107px;width:11px;height:1px;background:#9a9a9a;"></div>
<div class="a" style="left:1902px;top:109px;width:11px;height:1px;background:#9a9a9a;"></div>
<div class="a" style="left:1902px;top:111px;width:11px;height:1px;background:#9a9a9a;"></div>
<div class="a" style="left:1563px;top:128px;width:357px;height:5px;background:#262626;"></div>
<div class="a" style="left:1563px;top:133px;width:357px;height:426px;background:#323232;"></div>
<div class="a" style="left:1563px;top:133px;width:357px;height:35px;background:#282828;"></div>
<div class="a" style="left:1563px;top:133px;width:83px;height:35px;background:#323232;"></div>
<div class="a" style="left:1646px;top:133px;width:1px;height:35px;background:#242424;"></div>
<div class="a" style="left:1742px;top:133px;width:1px;height:35px;background:#242424;"></div>
<div class="a" style="left:1813px;top:133px;width:1px;height:35px;background:#242424;"></div>
<div class="t" style="left:1575px;top:141.37px;font-size:13.5px;color:#eeeeee;font-weight:bold;letter-spacing:-0.9px">Properties</div>
<div class="t" style="left:1657px;top:141.37px;font-size:13.5px;color:#8e8e8e;font-weight:bold;letter-spacing:-0.9px">Adjustments</div>
<div class="t" style="left:1753px;top:141.37px;font-size:13.5px;color:#8e8e8e;font-weight:bold;letter-spacing:-0.9px">Libraries</div>
<div class="a" style="left:1902px;top:145px;width:11px;height:1px;background:#9a9a9a;"></div>
<div class="a" style="left:1902px;top:147px;width:11px;height:1px;background:#9a9a9a;"></div>
<div class="a" style="left:1902px;top:149px;width:11px;height:1px;background:#9a9a9a;"></div>
<div class="a" style="left:1902px;top:151px;width:11px;height:1px;background:#9a9a9a;"></div>
<div class="a" style="left:1577px;top:176px;width:27px;height:27px;background:#1f1f1f;border-radius:3px"></div>
<svg class="s" style="left:1581px;top:180px" width="19" height="19" viewBox="0 0 19 19"><rect x="0.7" y="0.7" width="17.6" height="16.6" fill="none" stroke="#dcdcdc" stroke-width="1.3"/><path d="M2 16V11L5 8 7 10 9.5 6.5 12.5 10 15 12 16.5 13V16Z" fill="#dcdcdc"/><rect x="13" y="3.5" width="2.5" height="2.5" fill="#dcdcdc"/></svg>
<div class="t" style="left:1612px;top:183.92px;font-size:12.5px;color:#b8b8b8;font-weight:normal;">Pixel Layer</div>
<div class="a" style="left:1563px;top:209px;width:336px;height:1px;background:#282828;"></div>
<div class="a" style="left:1899px;top:211px;width:21px;height:314px;background:#2a2a2a;"></div>
<div class="a" style="left:1902px;top:232px;width:14px;height:196px;background:#4a4a4a;"></div>
<svg class="s" style="left:1906px;top:221px" width="9" height="6" viewBox="0 0 9 6"><path d="M0.5 5L4.5 1 8.5 5" fill="none" stroke="#9a9a9a" stroke-width="1"/></svg>
<svg class="s" style="left:1906px;top:511px" width="9" height="6" viewBox="0 0 9 6"><path d="M0.5 1L4.5 5 8.5 1" fill="none" stroke="#9a9a9a" stroke-width="1"/></svg>
<svg class="s" style="left:1572px;top:226px" width="11" height="6" viewBox="0 0 11 6"><path d="M0.5 0.5L5.5 5.5 10.5 0.5" fill="none" stroke="#b0b0b0" stroke-width="1.1"/></svg>
<div class="t" style="left:1594.5px;top:224.3px;font-size:13px;color:#e6e6e6;font-weight:bold;letter-spacing:-0.3px">Transform</div>
<div class="a" style="left:1575px;top:259px;width:30px;height:32px;background:#1f1f1f;border-radius:3px"></div>
<svg class="s" style="left:1584px;top:265px" width="10" height="20" viewBox="0 0 10 20"><path d="M2.8 8.5Q1.2 7.5 1.2 5Q1.2 1 5 1Q8.8 1 8.8 5Q8.8 7.5 7.2 8.5" fill="none" stroke="#dcdcdc" stroke-width="1.6"/><path d="M2.8 11.5Q1.2 12.5 1.2 15Q1.2 19 5 19Q8.8 19 8.8 15Q8.8 12.5 7.2 11.5" fill="none" stroke="#dcdcdc" stroke-width="1.6"/><path d="M5 5.5V14.5" stroke="#dcdcdc" stroke-width="1.6"/></svg>
<div class="t" style="left:1619px;top:252.92px;font-size:12.5px;color:#a8a8a8;font-weight:normal;">W</div>
<div class="t" style="left:1621px;top:283.92px;font-size:12.5px;color:#a8a8a8;font-weight:normal;">H</div>
<div class="t" style="left:1727px;top:252.92px;font-size:12.5px;color:#a8a8a8;font-weight:normal;">X</div>
<div class="t" style="left:1727px;top:283.92px;font-size:12.5px;color:#a8a8a8;font-weight:normal;">Y</div>
<div class="inp" style="left:1637px;top:249px;width:67px;height:21px;border-radius:0;background:#262626;border-color:#3e3e3e"></div>
<div class="t" style="left:1643px;top:253.92px;font-size:12.5px;color:#eeeeee;font-weight:normal;">97.07%</div>
<div class="inp" style="left:1637px;top:280px;width:67px;height:21px;border-radius:0;background:#262626;border-color:#3e3e3e"></div>
<div class="t" style="left:1643px;top:284.92px;font-size:12.5px;color:#eeeeee;font-weight:normal;">97.56%</div>
<div class="inp" style="left:1740px;top:249px;width:67px;height:21px;border-radius:0;background:#262626;border-color:#3e3e3e"></div>
<div class="t" style="left:1746px;top:253.92px;font-size:12.5px;color:#eeeeee;font-weight:normal;">1.56%</div>
<div class="inp" style="left:1740px;top:280px;width:67px;height:21px;border-radius:0;background:#262626;border-color:#3e3e3e"></div>
<div class="t" style="left:1746px;top:284.92px;font-size:12.5px;color:#eeeeee;font-weight:normal;">0.98%</div>
<svg class="s" style="left:1614px;top:320px" width="17" height="12" viewBox="0 0 17 12"><path d="M15.5 11.2H0.8L12.8 0.8M9.8 4.3Q12.8 7 12.5 11" fill="none" stroke="#d6d6d6" stroke-width="1.2"/></svg>
<div class="inp" style="left:1639px;top:316px;width:66px;height:20px;background:#262626;border-color:#3e3e3e"></div>
<div class="a" style="left:1686px;top:316px;width:1px;height:20px;background:#3e3e3e;"></div>
<div class="t" style="left:1643px;top:320.42px;font-size:12.5px;color:#eeeeee;font-weight:normal;">0.00&deg;</div>
<svg class="s" style="left:1691px;top:324.5px" width="9" height="6" viewBox="0 0 9 6"><path d="M0.8 0.8L4.5 4.3 8.2 0.8" fill="none" stroke="#b0b0b0" stroke-width="1"/></svg>
<svg class="s" style="left:1746px;top:317px" width="21" height="19" viewBox="0 0 21 19"><path d="M1 2.5L7 9.5 1 16.5Z" fill="none" stroke="#d6d6d6" stroke-width="1.2"/><path d="M19.5 2.5L13.5 9.5 19.5 16.5Z" fill="#d6d6d6"/><path d="M10.2 0V19" stroke="#d6d6d6" stroke-width="1" stroke-dasharray="1.3 1"/></svg>
<svg class="s" style="left:1782px;top:316px" width="18" height="20" viewBox="0 0 18 20"><path d="M2.5 1H15.5L9 6.5Z" fill="none" stroke="#d6d6d6" stroke-width="1.2"/><path d="M2.5 19H15.5L9 13Z" fill="#d6d6d6"/><path d="M0 10H18" stroke="#d6d6d6" stroke-width="1" stroke-dasharray="1.3 1"/></svg>
<div class="a" style="left:1563px;top:355px;width:336px;height:1px;background:#282828;"></div>
<svg class="s" style="left:1572px;top:373px" width="11" height="6" viewBox="0 0 11 6"><path d="M0.5 0.5L5.5 5.5 10.5 0.5" fill="none" stroke="#b0b0b0" stroke-width="1.1"/></svg>
<div class="t" style="left:1593.5px;top:370.0px;font-size:13px;color:#e6e6e6;font-weight:bold;letter-spacing:-0.3px">Align and Distribute</div>
<div class="t" style="left:1575px;top:396.92px;font-size:12.5px;color:#a8a8a8;font-weight:normal;">Align:</div>
<svg class="s" style="left:0;top:0" width="1920" height="1016" viewBox="0 0 1920 1016"><rect x="1581" y="427" width="1" height="19" fill="#8e8e8e"/><rect x="1583" y="430.5" width="7" height="4" fill="#8e8e8e"/><rect x="1583" y="438" width="14" height="4.5" fill="#8e8e8e"/><rect x="1625" y="427" width="1" height="19" fill="#8e8e8e"/><rect x="1622" y="430.5" width="7" height="4" fill="#8e8e8e"/><rect x="1618" y="438" width="14" height="4.5" fill="#8e8e8e"/><rect x="1668" y="427" width="1" height="19" fill="#8e8e8e"/><rect x="1660" y="430.5" width="7" height="4" fill="#8e8e8e"/><rect x="1653" y="438" width="14" height="4.5" fill="#8e8e8e"/><rect x="1710" y="429" width="18" height="1" fill="#8e8e8e"/><rect x="1713" y="431" width="4.5" height="14" fill="#8e8e8e"/><rect x="1721" y="431" width="4" height="7" fill="#8e8e8e"/><rect x="1746" y="436.5" width="18" height="1" fill="#8e8e8e"/><rect x="1749" y="430" width="4.5" height="14" fill="#8e8e8e"/><rect x="1757" y="433" width="4" height="7.5" fill="#8e8e8e"/><rect x="1782" y="443" width="18" height="1" fill="#8e8e8e"/><rect x="1785" y="428" width="4.5" height="14" fill="#8e8e8e"/><rect x="1793" y="435" width="4" height="7" fill="#8e8e8e"/><circle cx="1787" cy="474.5" r="1.6" fill="#e0e0e0"/><circle cx="1793" cy="474.5" r="1.6" fill="#e0e0e0"/><circle cx="1799" cy="474.5" r="1.6" fill="#e0e0e0"/></svg>
<div class="a" style="left:1563px;top:492px;width:336px;height:1px;background:#282828;"></div>
<svg class="s" style="left:1572px;top:508px" width="11" height="6" viewBox="0 0 11 6"><path d="M0.5 0.5L5.5 5.5 10.5 0.5" fill="none" stroke="#b0b0b0" stroke-width="1.1"/></svg>
<div class="t" style="left:1593.5px;top:505.5px;font-size:13px;color:#e6e6e6;font-weight:bold;letter-spacing:-0.3px">Quick Actions</div>
<div class="a" style="left:1563px;top:559px;width:357px;height:3px;background:#262626;"></div>
<div class="a" style="left:1563px;top:562px;width:357px;height:454px;background:#323232;"></div>
<div class="a" style="left:1563px;top:562px;width:357px;height:35px;background:#282828;"></div>
<div class="a" style="left:1563px;top:562px;width:59px;height:35px;background:#323232;"></div>
<div class="a" style="left:1622px;top:562px;width:1px;height:35px;background:#242424;"></div>
<div class="a" style="left:1694px;top:562px;width:1px;height:35px;background:#242424;"></div>
<div class="a" style="left:1751px;top:562px;width:1px;height:35px;background:#242424;"></div>
<div class="t" style="left:1575px;top:570.57px;font-size:13.5px;color:#eeeeee;font-weight:bold;letter-spacing:-0.9px">Layers</div>
<div class="t" style="left:1633px;top:570.57px;font-size:13.5px;color:#8e8e8e;font-weight:bold;letter-spacing:-0.9px">Channels</div>
<div class="t" style="left:1708px;top:570.57px;font-size:13.5px;color:#8e8e8e;font-weight:bold;letter-spacing:-0.9px">Paths</div>
<div class="a" style="left:1902px;top:575px;width:11px;height:1px;background:#9a9a9a;"></div>
<div class="a" style="left:1902px;top:577px;width:11px;height:1px;background:#9a9a9a;"></div>
<div class="a" style="left:1902px;top:579px;width:11px;height:1px;background:#9a9a9a;"></div>
<div class="a" style="left:1902px;top:581px;width:11px;height:1px;background:#9a9a9a;"></div>
<div class="inp" style="left:1567px;top:608px;width:108px;height:27px;background:#262626;border-color:#3e3e3e"></div>
<svg class="s" style="left:1578px;top:614px" width="13" height="14" viewBox="0 0 13 14"><circle cx="5.5" cy="5.5" r="4.3" fill="none" stroke="#dcdcdc" stroke-width="1.4"/><path d="M8.5 8.5L12 12.5" stroke="#dcdcdc" stroke-width="1.8"/></svg>
<div class="t" style="left:1595px;top:615.92px;font-size:12.5px;color:#e6e6e6;font-weight:normal;">Kind</div>
<svg class="s" style="left:1662px;top:621.5px" width="9" height="6" viewBox="0 0 9 6"><path d="M0.8 0.8L4.5 4.3 8.2 0.8" fill="none" stroke="#b0b0b0" stroke-width="1"/></svg>
<svg class="s" style="left:1691px;top:612px" width="15" height="13" viewBox="0 0 15 13"><rect x="0.6" y="0.6" width="13.8" height="11.8" fill="none" stroke="#d0d0d0" stroke-width="1.2"/><path d="M2 11V8.5L5 5.5 7.5 8 9.5 6 13 9.5V11Z" fill="#d0d0d0"/></svg>
<svg class="s" style="left:1721px;top:612px" width="14" height="14" viewBox="0 0 14 14"><circle cx="7" cy="7" r="6" fill="none" stroke="#d0d0d0" stroke-width="1.3"/><path d="M11.3 2.7A6 6 0 0 1 2.7 11.3Z" fill="#d0d0d0"/></svg>
<svg class="s" style="left:1752px;top:612px" width="15" height="14" viewBox="0 0 15 14"><path d="M1 3V1H14V3M7.5 1V13M5 13H10" fill="none" stroke="#d0d0d0" stroke-width="1.6"/></svg>
<svg class="s" style="left:1781px;top:611px" width="15" height="15" viewBox="0 0 15 15"><rect x="2" y="2" width="11" height="11" fill="none" stroke="#d0d0d0" stroke-width="1.3"/><circle cx="2" cy="2" r="1.6" fill="#323232" stroke="#d0d0d0"/><circle cx="13" cy="2" r="1.6" fill="#323232" stroke="#d0d0d0"/><circle cx="2" cy="13" r="1.6" fill="#323232" stroke="#d0d0d0"/><circle cx="13" cy="13" r="1.6" fill="#323232" stroke="#d0d0d0"/></svg>
<svg class="s" style="left:1812px;top:612px" width="14" height="15" viewBox="0 0 14 15"><path d="M3.5 6V1H9L13 5V13H7" fill="none" stroke="#d0d0d0" stroke-width="1.2"/><rect x="0.5" y="7" width="7" height="7" fill="#d0d0d0"/></svg>
<svg class="s" style="left:1840px;top:607px" width="12" height="24" viewBox="0 0 12 24"><rect x="0.7" y="5" width="10.6" height="18" rx="5.3" fill="#262626" stroke="#3e3e3e"/><circle cx="6" cy="5.5" r="5" fill="#d6d6d6"/></svg>
<div class="a" style="left:1563px;top:635px;width:357px;height:1px;background:#2a2a2a;"></div>
<div class="inp" style="left:1567px;top:643px;width:161px;height:26px;background:#262626;border-color:#3e3e3e"></div>
<div class="t" style="left:1578px;top:649.92px;font-size:12.5px;color:#e6e6e6;font-weight:normal;">Normal</div>
<svg class="s" style="left:1714px;top:652.5px" width="9" height="6" viewBox="0 0 9 6"><path d="M0.8 0.8L4.5 4.3 8.2 0.8" fill="none" stroke="#b0b0b0" stroke-width="1"/></svg>
<div class="t" style="left:1737px;top:649.22px;font-size:12.5px;color:#a8a8a8;font-weight:normal;">Opacity:</div>
<div class="inp" style="left:1788px;top:644px;width:63px;height:20px;background:#262626;border-color:#3e3e3e"></div>
<div class="a" style="left:1832px;top:644px;width:1px;height:20px;background:#3e3e3e;"></div>
<div class="t" style="left:1793px;top:648.22px;font-size:12.5px;color:#eeeeee;font-weight:normal;">100%</div>
<svg class="s" style="left:1837px;top:652.5px" width="9" height="6" viewBox="0 0 9 6"><path d="M0.8 0.8L4.5 4.3 8.2 0.8" fill="none" stroke="#b0b0b0" stroke-width="1"/></svg>
<div class="a" style="left:1563px;top:670px;width:357px;height:1px;background:#2a2a2a;"></div>
<div class="t" style="left:1571px;top:683.42px;font-size:12.5px;color:#a8a8a8;font-weight:normal;">Lock:</div>
<svg class="s" style="left:1611px;top:682px" width="14" height="14" viewBox="0 0 14 14"><rect x="0.5" y="0.5" width="13" height="13" fill="none" stroke="#d0d0d0"/><rect x="1" y="1" width="4" height="4" fill="#d0d0d0"/><rect x="9" y="1" width="4" height="4" fill="#d0d0d0"/><rect x="5" y="5" width="4" height="4" fill="#d0d0d0"/><rect x="1" y="9" width="4" height="4" fill="#d0d0d0"/><rect x="9" y="9" width="4" height="4" fill="#d0d0d0"/></svg>
<svg class="s" style="left:1638px;top:681px" width="17" height="17" viewBox="0 0 17 17"><g transform="scale(0.85)"><path d="M19.8 0.5Q20.2 1.1 19.6 2L12.7 13.1 9.9 10.7 18.1 0.7Q19.1 -0.1 19.8 0.5Z M9.3 11.5Q12.7 13.5 11.4 16.8Q9.4 19.9 0.6 19.7Q2.6 18 3.4 15.2Q4.6 11.5 9.3 11.5Z" fill="#d0d0d0"/></g></svg>
<svg class="s" style="left:1665px;top:681px" width="16" height="16" viewBox="0 0 16 16"><path d="M8 1V15M1 8H15" stroke="#d0d0d0" stroke-width="1.4"/><path d="M8 0L5.5 3H10.5ZM8 16L5.5 13H10.5ZM0 8L3 5.5V10.5ZM16 8L13 5.5V10.5Z" fill="#d0d0d0"/></svg>
<svg class="s" style="left:1692px;top:681px" width="18" height="17" viewBox="0 0 18 17"><path d="M3 4H12L15 7V14H3Z" fill="none" stroke="#d0d0d0" stroke-width="1.3"/><path d="M0 3.5H2M3 0V2M16 14.5H18M15 15V17M0 14.5H2M3 15V17M15 0V2M16 3.5H18" stroke="#d0d0d0"/></svg>
<svg class="s" style="left:1722px;top:681px" width="13" height="17" viewBox="0 0 13 17"><path d="M3 7.5V4.5Q3 1 6.5 1Q10 1 10 4.5V7.5" fill="none" stroke="#d0d0d0" stroke-width="1.6"/><rect x="0.5" y="7" width="12" height="9.5" rx="1" fill="#d0d0d0"/><circle cx="6.5" cy="11.5" r="1.5" fill="#323232"/></svg>
<div class="t" style="left:1764px;top:683.42px;font-size:12.5px;color:#a8a8a8;font-weight:normal;">Fill:</div>
<div class="inp" style="left:1788px;top:679px;width:63px;height:20px;background:#262626;border-color:#3e3e3e"></div>
<div class="a" style="left:1832px;top:679px;width:1px;height:20px;background:#3e3e3e;"></div>
<div class="t" style="left:1793px;top:683.22px;font-size:12.5px;color:#eeeeee;font-weight:normal;">100%</div>
<svg class="s" style="left:1837px;top:687.5px" width="9" height="6" viewBox="0 0 9 6"><path d="M0.8 0.8L4.5 4.3 8.2 0.8" fill="none" stroke="#b0b0b0" stroke-width="1"/></svg>
<div class="a" style="left:1563px;top:709px;width:336px;height:280px;overflow:hidden">
</div>
<div class="a" style="left:1600px;top:709px;width:1px;height:280px;background:#2b2b2b;"></div>
<div class="a" style="left:1574px;top:742px;width:16px;height:16px;background:transparent;border:1px solid #4a4a4a"></div>
<div class="a" style="left:1605px;top:714px;width:70px;height:69px;border:1px solid #5e5e5e;background-color:#fff;background-image:linear-gradient(45deg,#cdcdcd 25%,transparent 25%,transparent 75%,#cdcdcd 75%),linear-gradient(45deg,#cdcdcd 25%,transparent 25%,transparent 75%,#cdcdcd 75%);background-size:8px 8px;background-position:0 0,4px 4px"></div>
<svg class="s" style="left:1606px;top:715px" width="68" height="67" viewBox="0 0 838 838"><use href="#bt" fill="none" stroke="#c4c4c4" stroke-width="8"/><use href="#bn" fill="none" stroke="#c4c4c4" stroke-width="8"/></svg>
<div class="t" style="left:1688px;top:743.92px;font-size:12.5px;color:#e0e0e0;font-weight:normal;">Layer 1</div>
<div class="a" style="left:1563px;top:789px;width:336px;height:1px;background:#2a2a2a;"></div>
<div class="a" style="left:1600px;top:790px;width:299px;height:80px;background:#30465d;"></div>
<div class="a" style="left:1603px;top:793px;width:75px;height:75px;background:#30465d;border:1px solid #f0f0f0"></div>
<div class="a" style="left:1606px;top:796px;width:69px;height:69px;border:1px solid #555555;background-color:#fff;background-image:linear-gradient(45deg,#cdcdcd 25%,transparent 25%,transparent 75%,#cdcdcd 75%),linear-gradient(45deg,#cdcdcd 25%,transparent 25%,transparent 75%,#cdcdcd 75%);background-size:8px 8px;background-position:0 0,4px 4px"></div>
<svg class="s" style="left:1607px;top:797px" width="67" height="67" viewBox="0 0 838 838"><use href="#bt" fill="none" stroke="#8c8c8c" stroke-width="7"/><use href="#bn" fill="none" stroke="#999" stroke-width="6"/><use href="#st" fill="none" stroke="#a0a0a0" stroke-width="5"/></svg>
<svg class="s" style="left:1572.5px;top:824.5px" width="18" height="12" viewBox="0 0 18 12"><path d="M0.5 6Q9 -3 17.5 6Q9 15 0.5 6Z" fill="#d6d6d6"/><circle cx="9" cy="6" r="3.3" fill="#2a2a2a"/><circle cx="8" cy="5" r="0.9" fill="#d6d6d6"/></svg>
<div class="t" style="left:1688px;top:824.42px;font-size:12.5px;color:#eaeaea;font-weight:normal;">outlines</div>
<div class="a" style="left:1600px;top:870px;width:299px;height:1px;background:#3e5f7e;"></div>
<div class="a" style="left:1605px;top:877px;width:70px;height:70px;border:1px solid #5e5e5e;background-color:#fff;background-image:linear-gradient(45deg,#cdcdcd 25%,transparent 25%,transparent 75%,#cdcdcd 75%),linear-gradient(45deg,#cdcdcd 25%,transparent 25%,transparent 75%,#cdcdcd 75%);background-size:8px 8px;background-position:0 0,4px 4px"></div>
<svg class="s" style="left:1606px;top:878px" width="68" height="68" viewBox="0 0 838 838"><use href="#bt" fill="#b0b0b0" stroke="#b0b0b0" stroke-width="6"/><use href="#bn" fill="#b0b0b0" stroke="#b0b0b0" stroke-width="6"/></svg>
<svg class="s" style="left:1572.5px;top:906.5px" width="18" height="12" viewBox="0 0 18 12"><path d="M0.5 6Q9 -3 17.5 6Q9 15 0.5 6Z" fill="#d6d6d6"/><circle cx="9" cy="6" r="3.3" fill="#2a2a2a"/><circle cx="8" cy="5" r="0.9" fill="#d6d6d6"/></svg>
<div class="t" style="left:1688px;top:906.42px;font-size:12.5px;color:#e0e0e0;font-weight:normal;">base</div>
<div class="a" style="left:1563px;top:951px;width:336px;height:1px;background:#2a2a2a;"></div>
<div class="a" style="left:1605px;top:958px;width:70px;height:31px;background:#ffffff;border:1px solid #5e5e5e;border-bottom:none"></div>
<div class="a" style="left:1899px;top:709px;width:21px;height:280px;background:#2a2a2a;"></div>
<div class="a" style="left:1902px;top:730px;width:14px;height:161px;background:#4a4a4a;"></div>
<svg class="s" style="left:1906px;top:719px" width="9" height="6" viewBox="0 0 9 6"><path d="M0.5 5L4.5 1 8.5 5" fill="none" stroke="#9a9a9a" stroke-width="1"/></svg>
<svg class="s" style="left:1906px;top:973px" width="9" height="6" viewBox="0 0 9 6"><path d="M0.5 1L4.5 5 8.5 1" fill="none" stroke="#9a9a9a" stroke-width="1"/></svg>
<div class="a" style="left:1563px;top:989px;width:357px;height:27px;background:#323232;"></div>
<div class="a" style="left:1563px;top:988px;width:357px;height:1px;background:#262626;"></div>
<svg class="s" style="left:1665px;top:999px" width="17" height="11" viewBox="0 0 17 11"><rect x="0.8" y="1.5" width="9" height="7.5" rx="3.7" fill="none" stroke="#a0a0a0" stroke-width="1.5"/><rect x="6.5" y="1.5" width="9" height="7.5" rx="3.7" fill="none" stroke="#a0a0a0" stroke-width="1.5"/><path d="M4 5.2H13" stroke="#a0a0a0" stroke-width="1.5"/></svg>
<div class="t" style="left:1700px;top:997.3px;font-size:15px;color:#c0c0c0;font-weight:normal;"><i>fx</i></div>
<svg class="s" style="left:1714px;top:1010px" width="5" height="3" viewBox="0 0 5 3"><path d="M0 0H5L2.5 3Z" fill="#d6d6d6"/></svg>
<svg class="s" style="left:1733px;top:997px" width="17" height="14" viewBox="0 0 17 14"><rect x="0" y="0" width="17" height="14" rx="1" fill="#d0d0d0"/><circle cx="8.5" cy="7" r="4" fill="#323232"/></svg>
<svg class="s" style="left:1768px;top:997px" width="15" height="15" viewBox="0 0 15 15"><circle cx="7.5" cy="7.5" r="6.5" fill="none" stroke="#d0d0d0" stroke-width="1.3"/><path d="M12.1 2.9A6.5 6.5 0 0 1 2.9 12.1Z" fill="#d0d0d0"/></svg>
<svg class="s" style="left:1780px;top:1010px" width="5" height="3" viewBox="0 0 5 3"><path d="M0 0H5L2.5 3Z" fill="#d6d6d6"/></svg>
<svg class="s" style="left:1800px;top:997px" width="16" height="14" viewBox="0 0 16 14"><path d="M0 1.5H6L7 3H16V14H0Z" fill="#d0d0d0"/></svg>
<svg class="s" style="left:1834px;top:996px" width="15" height="16" viewBox="0 0 15 16"><rect x="0.7" y="0.7" width="13.6" height="14.6" fill="none" stroke="#d0d0d0" stroke-width="1.4"/><path d="M7.5 4.5V11.5M4 8H11" stroke="#d0d0d0" stroke-width="1.5"/></svg>
<svg class="s" style="left:1868px;top:995px" width="15" height="17" viewBox="0 0 15 17"><path d="M0.5 3H14.5M5 3V1H10V3" fill="none" stroke="#d0d0d0" stroke-width="1.3"/><rect x="2" y="4.5" width="11" height="12" fill="none" stroke="#d0d0d0" stroke-width="1.3"/><path d="M5.5 7V14.5M7.5 7V14.5M9.5 7V14.5" stroke="#d0d0d0" stroke-width="1"/></svg>
<div class="a" style="left:361px;top:147px;width:840px;height:840px;background:#0c0c0c;"></div>
<div class="a" style="left:362px;top:148px;width:838px;height:838px;background-color:#fff;background-image:linear-gradient(45deg,#cccccc 25%,transparent 25%,transparent 75%,#cccccc 75%),linear-gradient(45deg,#cccccc 25%,transparent 25%,transparent 75%,#cccccc 75%);background-size:16px 16px;background-position:0 0,8px 8px"></div>
<svg class="s" style="left:362px;top:148px" width="838" height="838" viewBox="0 0 838 838"><defs><path id="bt" d="M36.1 26.3L38.2 26.3L41.0 26.3L44.0 25.4L47.2 24.6L50.2 25.2L52.1 26.8L53.8 28.8L55.8 30.5L58.2 31.6L60.7 32.4L62.8 33.4L65.4 35.5L67.5 37.7L69.3 39.1L70.6 39.8L71.8 41.8L71.6 44.7L70.0 47.0L67.7 48.5L65.1 49.7L62.8 51.7L61.2 53.7L59.3 55.5L56.8 56.5L54.1 56.5L51.5 56.4L49.0 56.8L46.5 57.7L43.8 58.1L41.1 57.1L38.5 55.0L36.1 53.5L33.7 52.6L31.1 50.7L30.2 47.6L30.9 44.8L32.5 43.0L34.4 41.0L35.4 38.4L35.1 35.6L34.9 32.9L35.5 30.5L36.2 28.4ZM80.7 41.5L84.4 41.0L87.5 43.5L87.5 45.9L86.9 48.6L86.7 51.5L86.6 54.4L86.0 56.5L84.5 58.5L82.4 60.1L80.1 61.9L78.4 64.4L77.9 67.5L78.3 70.7L78.3 73.7L77.4 76.3L75.9 78.2L73.8 80.0L72.0 81.7L70.1 83.6L67.7 85.2L65.2 85.8L62.4 85.5L59.6 84.9L57.0 84.8L54.8 85.2L51.7 85.8L48.5 85.3L46.0 83.7L44.6 82.2L42.9 79.4L42.7 76.5L44.2 75.1L47.0 74.5L50.2 74.8L53.4 74.5L55.9 72.6L57.2 69.9L57.7 67.3L58.5 64.9L60.1 63.3L62.3 62.1L64.6 60.9L66.7 59.0L68.1 56.0L69.3 52.6L71.1 49.9L73.4 48.2L76.3 45.6L77.8 43.8L79.0 42.3ZM28.5 65.6L30.8 64.2L34.1 64.0L36.9 65.1L39.2 67.8L40.4 69.4L40.7 71.1L39.8 73.5L38.0 74.3L35.3 74.2L33.1 73.6L30.4 72.6L28.2 71.6L26.7 68.6ZM142.3 24.9L144.2 25.0L146.6 25.2L149.1 25.0L151.7 24.3L154.4 23.3L157.1 23.0L159.4 23.7L161.6 25.3L163.6 27.3L165.8 29.1L168.2 30.5L170.6 31.6L172.5 32.7L174.9 35.7L175.9 38.9L178.2 41.5L182.0 41.8L184.8 40.3L186.1 39.4L188.3 40.3L189.2 43.8L188.9 45.8L188.5 48.2L188.4 51.0L188.7 53.9L189.1 56.8L188.8 59.5L187.6 62.1L185.9 64.5L184.4 66.8L183.4 69.2L183.0 72.4L182.8 75.5L182.0 78.1L180.2 79.9L178.1 80.8L175.7 81.8L173.1 83.2L170.2 85.1L168.0 86.1L165.3 86.4L162.5 86.0L159.8 85.2L157.3 84.7L155.2 84.6L152.3 84.6L149.6 83.9L147.5 82.5L146.3 80.9L146.0 78.5L145.5 75.4L142.7 72.7L139.4 73.2L136.4 74.9L133.3 75.6L131.1 75.1L129.2 71.8L128.7 69.1L130.3 67.0L134.3 65.8L136.3 66.7L138.4 68.4L141.0 69.9L144.2 70.2L147.9 68.4L151.0 66.0L152.9 64.4L152.0 62.7L148.9 60.2L147.1 59.0L144.6 58.1L141.7 57.4L139.1 56.4L137.3 54.7L136.5 51.9L136.6 49.0L136.8 46.3L136.5 43.7L136.0 41.3L135.8 38.5L136.5 35.6L137.7 33.2L138.9 31.1L139.9 28.3L140.3 26.2ZM246.4 25.8L248.5 25.3L250.9 25.3L253.5 25.3L256.1 24.9L258.8 24.1L261.5 23.7L264.0 24.5L266.2 26.2L268.4 28.0L271.0 29.0L274.0 29.5L276.8 30.3L279.1 31.9L280.7 33.8L282.9 35.9L285.3 37.4L287.8 38.9L289.6 41.0L290.4 43.6L290.3 46.4L290.2 49.0L290.7 51.6L291.5 54.1L291.8 56.7L291.3 59.3L290.2 61.9L289.3 64.3L289.2 66.7L289.3 69.4L289.0 72.2L287.6 74.6L285.4 76.5L283.2 78.1L281.1 80.1L279.5 81.7L277.4 83.0L274.8 83.5L271.9 83.0L269.2 82.5L266.6 82.7L264.0 83.5L261.3 84.2L258.4 83.9L255.6 82.8L252.7 81.9L249.7 82.1L246.8 82.5L244.2 82.3L241.1 80.2L238.9 77.4L237.0 75.4L235.3 73.9L234.1 71.5L234.9 69.0L236.9 67.6L239.3 67.0L241.8 65.7L244.3 64.4L246.4 64.7L248.5 66.7L250.3 69.2L252.4 71.0L255.7 71.8L258.6 71.8L260.6 71.4L262.7 70.4L265.4 68.5L267.0 65.5L265.9 61.4L262.4 58.3L260.1 56.8L257.5 55.1L254.8 53.6L251.8 53.0L248.9 52.7L246.0 51.7L243.8 49.6L242.2 47.2L241.1 45.3L239.8 43.1L238.9 40.4L239.3 37.5L240.9 35.2L242.8 33.2L244.3 31.4L245.4 29.3ZM347.6 24.8L349.2 24.4L351.3 23.9L353.9 23.4L356.8 23.4L359.5 24.6L361.8 26.5L363.6 28.1L365.8 29.3L368.4 30.1L371.0 30.9L373.3 32.4L375.0 34.3L376.1 36.2L377.6 38.4L379.4 40.5L381.4 42.7L383.0 44.8L384.3 46.7L386.5 48.9L389.5 50.4L392.4 50.8L394.9 51.4L396.7 53.4L397.4 56.2L396.9 58.9L396.2 60.7L395.3 62.3L394.0 64.5L392.3 66.8L389.7 68.3L386.2 68.8L382.8 70.3L381.1 73.0L380.5 76.0L379.7 78.9L377.8 81.0L375.0 82.1L372.0 83.1L369.3 84.5L366.6 86.0L364.1 86.6L361.3 86.2L358.6 84.8L356.3 83.6L354.7 83.0L352.2 82.0L349.8 80.0L347.5 77.7L344.5 76.0L341.5 75.2L339.1 74.9L336.2 74.1L333.5 72.2L332.6 69.8L334.3 67.6L337.6 66.6L339.8 65.9L342.9 65.0L346.2 65.0L349.0 66.2L351.6 68.5L354.1 70.3L357.0 71.2L359.7 72.4L361.9 74.4L364.7 75.6L368.3 74.5L371.1 71.3L371.7 67.8L370.4 65.5L368.4 63.6L366.8 61.0L365.5 58.1L363.4 55.6L360.3 54.2L357.6 53.9L354.7 53.2L352.0 51.8L349.8 50.3L347.0 49.1L344.3 48.7L342.4 47.6L342.0 45.8L342.7 43.3L343.9 40.6L344.6 37.5L344.2 34.6L343.6 31.3L343.9 28.2L345.5 25.8ZM38.4 131.0L41.1 130.5L44.4 130.7L46.3 132.5L46.1 135.3L45.7 138.5L46.2 141.5L46.4 144.2L45.3 146.6L43.3 147.8L40.7 147.9L37.8 148.0L35.1 148.0L32.6 146.7L31.0 143.8L31.1 140.7L32.3 138.3L33.4 136.1L34.0 134.1L35.5 131.7ZM65.4 131.4L69.2 133.0L70.6 135.8L69.4 137.0L67.6 140.4L66.8 143.9L67.5 146.8L68.9 149.4L70.8 152.0L73.0 153.7L75.9 154.6L78.8 155.3L81.2 156.8L82.4 159.4L82.3 162.5L81.5 165.4L80.9 167.6L80.0 170.1L78.8 173.2L77.8 176.6L77.7 179.7L77.8 182.9L78.2 185.7L78.5 187.1L77.5 189.4L74.1 190.3L71.7 189.4L69.3 187.1L66.8 184.4L63.3 183.1L59.8 184.0L57.2 186.2L54.9 188.3L52.2 189.3L49.4 189.3L46.6 189.2L44.0 189.3L41.7 189.4L38.4 188.6L36.0 186.4L35.4 184.5L37.4 183.8L40.8 183.7L43.4 183.4L47.3 182.6L50.3 181.4L52.0 179.1L53.3 175.9L53.5 172.2L52.3 169.4L50.1 166.8L48.2 164.1L47.5 161.3L47.6 158.0L47.9 155.7L48.2 153.5L48.5 151.6L49.2 148.6L50.7 145.8L52.9 143.7L55.0 142.3L58.2 140.3L60.7 138.2L62.2 135.8L63.8 133.5ZM26.0 167.7L28.8 166.9L32.4 167.4L35.6 168.1L37.4 168.2L39.8 168.7L42.2 170.3L43.3 172.4L41.9 174.9L38.6 176.8L36.6 177.9L33.9 179.5L31.0 180.3L28.4 179.9L26.2 177.7L24.9 175.2L24.4 174.1L24.1 173.1L24.5 170.6ZM139.7 133.1L142.0 132.1L145.2 131.8L148.2 131.7L150.8 131.4L152.4 131.4L153.7 132.9L154.0 135.9L152.8 139.0L151.2 141.4L149.6 143.6L148.7 145.2L147.6 146.7L145.8 147.9L142.9 148.7L139.9 148.3L138.1 147.4L136.1 145.0L134.8 141.9L134.7 139.7L135.4 136.9L137.3 134.7ZM168.5 133.0L171.0 133.8L173.6 134.8L175.0 135.0L175.2 135.6L174.2 138.5L172.4 141.4L171.6 144.2L172.8 146.7L175.3 148.5L178.5 149.6L181.5 150.7L183.5 152.6L184.8 155.4L185.6 158.0L186.1 160.0L186.6 161.4L186.6 163.3L185.5 166.2L183.5 169.0L181.7 172.1L181.6 175.3L182.7 178.2L184.6 180.7L186.0 183.2L186.1 185.7L183.9 188.5L180.9 190.0L178.9 190.4L177.8 190.0L175.3 188.4L172.9 186.2L170.6 184.2L167.0 183.4L163.7 184.2L160.8 186.1L158.6 188.3L156.0 190.5L153.1 191.5L150.6 191.4L148.1 190.3L145.8 189.0L144.5 187.7L145.3 185.8L148.2 183.8L151.7 182.3L154.3 180.9L156.4 178.7L157.8 175.6L158.0 172.5L157.0 169.7L155.7 166.8L154.7 163.8L154.1 161.4L153.8 158.9L154.0 155.8L155.2 152.9L157.3 150.7L159.8 149.1L162.0 147.5L163.8 145.3L165.0 142.6L165.7 139.5L166.6 136.6L168.0 134.4ZM136.5 167.8L138.4 165.7L141.2 164.1L144.2 164.0L145.5 164.4L145.9 166.5L145.7 169.9L144.5 171.9L142.3 173.6L139.8 174.7L137.3 176.4L135.3 178.4L134.2 179.9L132.7 181.4L131.4 181.6L130.3 180.1L130.0 177.3L131.0 175.0L132.0 173.5L132.9 171.1L133.9 168.3ZM251.1 131.2L253.6 131.7L255.8 133.5L256.4 135.6L255.8 138.5L254.6 141.2L254.3 142.8L253.6 145.1L251.5 147.2L248.7 147.7L245.8 146.9L242.8 146.5L240.2 146.1L238.4 143.9L238.8 140.5L241.0 138.0L242.6 136.7L244.4 134.5L246.6 132.3L249.3 131.4ZM268.7 133.5L270.9 131.6L274.2 131.2L277.2 132.2L278.2 132.8L278.2 134.3L277.7 138.2L277.4 142.1L278.5 144.7L280.3 147.0L282.6 148.5L285.3 149.3L287.9 150.7L289.2 152.6L289.7 155.0L289.8 157.7L290.2 160.3L291.3 162.9L292.2 165.5L292.4 168.1L291.5 170.7L290.3 173.3L289.7 176.0L290.1 178.7L290.6 181.3L290.5 183.6L289.8 185.2L287.3 187.2L284.7 188.2L281.5 189.7L279.1 190.2L276.5 189.5L274.1 187.7L271.4 185.9L268.2 185.5L265.2 186.8L262.4 188.7L259.5 189.8L256.9 190.1L255.8 190.1L253.8 189.7L251.4 188.1L250.4 185.3L252.4 183.3L256.2 182.3L259.1 179.6L259.0 176.6L257.9 174.0L257.0 171.2L257.1 168.3L257.7 165.8L257.8 163.4L257.2 160.7L256.4 157.9L256.4 155.2L257.6 152.8L259.3 150.8L261.0 148.8L262.1 146.5L263.1 144.0L264.2 141.9L266.6 139.0L268.7 136.6ZM244.9 167.8L248.6 167.3L249.9 166.1L250.5 167.0L250.1 170.4L247.3 172.3L243.7 174.0L242.3 176.8L242.1 179.8L241.8 181.8L239.4 183.3L237.5 182.3L237.6 180.4L237.3 177.3L236.3 174.8L235.8 170.9L237.7 167.8L241.1 167.1ZM353.6 131.4L356.5 130.2L359.7 130.3L361.6 132.0L362.2 134.2L363.6 136.8L364.7 139.6L364.0 141.8L362.1 143.7L360.3 145.2L359.2 146.4L357.5 147.8L354.7 148.7L351.7 148.0L349.7 146.4L347.5 144.4L344.8 142.3L343.1 139.7L344.8 136.2L348.0 134.4L350.4 133.0ZM375.6 132.7L378.1 132.4L380.3 134.0L382.5 136.3L384.0 137.2L386.3 138.5L388.4 140.5L389.4 143.4L390.2 146.4L391.9 148.9L393.8 150.8L395.5 153.1L396.1 155.8L395.9 158.8L396.0 161.5L396.8 163.8L397.7 165.9L397.8 168.8L396.3 171.3L394.4 173.4L393.3 175.8L393.2 178.6L393.8 182.3L393.2 185.2L391.7 186.6L389.9 187.4L387.5 188.8L384.1 190.3L381.7 190.1L379.3 188.9L376.9 187.4L374.0 186.8L371.0 187.3L368.5 187.9L365.5 187.7L362.4 187.1L359.7 187.2L357.6 187.9L356.2 188.6L353.6 187.7L352.9 185.2L353.3 183.8L354.0 183.1L355.7 181.0L357.9 178.8L361.0 178.8L364.2 180.4L367.4 179.9L368.5 177.5L368.4 174.6L368.4 171.6L369.4 168.6L370.7 165.8L370.9 162.6L369.7 159.5L368.4 156.7L367.3 154.1L363.8 151.7L361.8 151.3L361.2 150.4L360.9 146.9L362.4 144.1L364.6 143.1L367.1 142.2L369.2 140.1L370.2 137.6L371.6 135.2L373.9 133.7ZM341.4 165.0L343.3 163.0L345.9 161.0L349.0 159.7L351.7 159.1L353.2 158.8L355.3 159.3L358.2 160.9L360.4 163.5L360.7 166.1L358.6 167.4L355.2 167.5L351.5 167.4L348.4 168.3L345.8 170.0L343.7 171.8L341.9 174.2L340.8 177.0L339.8 180.3L339.2 183.2L339.5 184.0L338.0 185.0L334.8 183.4L334.0 181.4L333.8 178.6L334.6 175.5L335.8 172.8L336.7 170.8L337.7 168.5L338.8 166.7ZM452.2 31.1L453.9 29.0L456.6 27.4L459.9 27.4L462.8 28.0L465.4 28.2L468.2 27.9L471.0 28.2L472.8 29.3L473.6 31.6L474.4 34.5L477.6 36.5L480.7 34.5L483.5 32.1L486.7 32.0L488.2 33.3L489.9 34.7L492.1 36.1L494.4 38.2L495.3 40.2L495.6 42.8L495.6 45.6L496.2 48.1L497.5 50.3L498.8 52.5L499.1 54.9L498.5 57.4L497.6 59.9L497.4 62.5L497.8 65.2L497.9 67.8L497.2 70.4L495.4 72.5L493.3 74.2L491.7 75.8L490.4 77.8L488.6 79.7L485.8 80.8L482.7 80.8L479.8 80.9L477.6 81.8L474.7 83.4L471.5 84.0L469.0 83.1L468.0 82.2L467.9 81.0L468.2 78.2L468.8 75.0L471.2 73.1L474.8 72.4L477.5 70.3L476.9 66.8L474.4 64.6L472.0 62.7L470.1 60.2L468.4 57.3L466.9 55.7L464.7 53.0L462.5 50.3L460.2 48.7L457.3 46.8L454.1 46.0L451.0 46.5L448.1 46.9L446.4 45.8L447.1 43.4L448.7 40.7L449.3 37.8L449.4 35.2L450.3 33.0ZM441.0 65.7L443.1 64.4L446.2 64.0L449.3 63.7L451.7 63.1L455.5 62.7L458.4 65.4L458.8 67.9L458.8 71.1L459.2 74.2L460.4 76.8L461.4 78.4L461.0 81.5L459.5 81.9L459.0 80.5L457.4 77.5L454.3 75.7L451.1 75.9L448.0 76.3L445.2 75.3L441.9 72.6L440.3 71.2L439.8 69.1ZM565.9 26.1L568.2 25.8L571.5 26.5L573.4 28.9L574.4 32.7L575.7 35.9L579.5 36.4L582.9 35.2L585.2 33.6L588.0 32.4L591.1 32.2L593.5 33.9L593.9 36.0L593.7 38.7L593.8 41.8L594.4 44.7L595.4 47.1L597.7 49.3L599.9 51.0L600.7 53.3L600.4 54.8L600.5 57.2L601.1 59.8L602.0 62.7L602.5 65.5L602.2 69.0L600.6 72.5L599.0 75.2L598.8 75.9L597.5 75.3L594.2 72.8L591.3 71.2L589.3 73.8L588.3 77.3L587.6 79.6L586.2 81.7L583.8 84.2L580.6 85.7L577.8 85.7L574.9 84.8L572.2 83.7L570.1 83.0L566.2 82.6L563.8 81.4L563.6 79.5L564.5 77.0L566.1 75.4L567.8 74.9L570.5 74.0L573.5 72.8L576.0 71.6L578.9 70.2L582.2 68.7L584.8 66.0L585.2 62.2L583.6 58.9L581.4 56.3L579.6 54.2L578.1 52.0L576.6 49.8L575.2 47.3L573.0 45.0L569.7 44.1L567.3 44.6L564.5 45.3L561.4 45.5L558.5 45.2L556.8 44.6L553.2 43.8L551.2 43.2L550.7 41.0L551.9 37.4L554.5 35.2L557.4 34.9L560.7 34.9L563.8 33.5L564.8 30.4L565.0 27.3ZM546.4 68.6L548.2 67.5L550.9 65.6L554.0 64.3L556.6 64.4L560.2 65.6L561.1 65.8L561.5 66.4L561.9 69.4L560.6 71.8L558.1 72.6L555.0 72.7L552.1 73.4L549.2 74.0L546.2 73.5L544.4 72.1L544.6 70.2ZM668.2 26.9L670.5 26.8L673.1 28.4L674.8 30.1L676.0 31.9L678.2 34.8L680.8 36.2L683.2 35.3L686.3 33.9L689.6 32.5L691.9 31.5L695.2 31.1L698.6 32.3L700.2 35.1L699.7 37.2L698.4 39.8L698.0 43.1L699.1 46.4L701.6 48.8L704.1 51.1L706.1 53.8L707.5 55.8L709.2 57.9L711.0 60.1L711.8 63.3L711.3 65.8L709.8 68.4L708.1 71.0L707.1 73.7L706.6 76.2L705.9 79.3L704.5 81.3L702.3 82.0L700.3 81.4L697.6 80.5L694.4 80.6L691.4 81.6L689.0 83.6L687.2 85.3L684.8 86.1L682.3 86.3L679.4 86.9L676.6 88.1L674.2 88.6L671.5 86.4L672.3 83.0L674.3 82.1L677.2 81.0L679.8 79.0L681.5 76.7L681.6 73.2L682.2 70.1L684.4 68.3L686.6 65.2L686.9 61.2L685.0 57.9L683.0 55.1L681.8 51.9L680.9 48.6L678.9 45.4L676.4 43.8L674.2 44.2L671.1 44.9L667.6 44.7L664.8 44.3L661.7 44.7L659.0 45.3L657.5 45.3L656.9 42.8L658.8 40.4L660.0 40.0L662.3 38.4L664.2 35.6L664.9 31.9L666.2 28.5ZM650.8 66.2L652.9 66.0L655.8 65.1L658.8 63.6L661.1 62.9L664.1 61.9L665.0 62.3L665.2 64.2L666.8 67.0L669.1 70.2L670.0 72.7L670.2 75.9L670.8 78.9L672.1 81.2L673.1 82.8L671.1 84.7L667.7 83.0L666.5 80.4L664.8 77.4L661.8 75.5L658.5 74.8L655.4 73.7L653.5 72.2L651.3 70.5L649.4 69.5L648.6 67.7ZM768.7 26.2L770.6 25.9L773.9 26.2L777.2 28.1L778.3 30.7L778.9 34.1L780.6 37.0L783.1 39.0L785.6 40.1L788.5 39.1L791.8 36.9L794.0 34.1L794.9 31.6L797.5 29.7L800.6 30.0L802.5 31.3L804.3 33.8L805.4 37.1L803.9 39.1L800.9 40.3L797.3 40.8L794.6 43.0L795.2 47.8L798.3 50.9L801.3 51.6L804.5 52.1L806.6 52.4L808.4 52.9L811.2 54.3L813.0 56.7L813.4 59.0L812.3 61.8L811.4 65.3L811.3 68.3L810.3 71.3L808.6 74.3L808.4 78.0L810.1 81.1L811.1 82.3L809.1 83.0L806.2 81.1L805.2 79.3L802.3 76.9L798.8 76.1L796.3 76.7L793.3 77.1L790.1 78.1L787.5 80.2L785.7 82.6L783.5 84.8L780.4 86.0L777.8 86.9L776.8 87.4L773.0 87.9L771.3 85.9L772.3 85.4L774.5 84.2L776.6 82.2L777.9 79.5L779.3 76.4L781.5 74.2L784.1 72.6L786.4 70.7L787.8 68.1L787.6 65.5L786.6 63.6L785.4 60.9L784.4 57.8L782.9 55.4L780.4 53.3L777.8 51.5L775.4 49.2L773.1 47.0L770.0 45.5L766.7 45.5L763.9 45.6L760.1 44.9L759.0 43.4L759.9 42.5L761.3 40.4L762.4 37.4L763.4 34.7L765.0 32.3L767.2 29.7L768.7 27.7ZM755.2 65.5L757.2 64.9L760.3 65.2L763.6 65.8L766.5 65.9L769.6 64.5L772.1 64.1L773.7 65.0L775.6 67.0L776.8 69.7L777.6 72.4L778.1 74.5L778.9 78.3L778.8 80.3L776.3 80.1L772.9 77.9L771.4 76.0L769.7 73.8L767.1 71.8L764.2 71.2L761.1 71.4L758.2 71.6L756.1 71.0L754.3 68.2ZM454.2 131.3L456.2 129.8L459.0 129.4L462.0 130.2L464.5 131.3L466.8 131.8L469.8 132.0L473.0 132.6L475.7 133.7L479.1 134.3L482.0 133.9L484.2 133.6L486.3 135.3L487.2 138.7L487.8 142.7L489.6 145.0L492.0 146.4L494.7 146.9L497.2 147.5L499.1 149.0L500.3 151.4L501.4 154.1L503.3 156.5L505.6 158.8L506.9 161.4L506.8 164.1L505.7 166.7L504.5 169.1L504.1 171.7L504.1 174.4L504.0 177.3L503.0 180.2L501.6 182.9L500.8 185.0L500.8 186.3L499.3 188.3L496.2 188.9L493.2 187.7L490.8 185.4L487.9 183.3L484.5 182.8L481.6 183.9L478.4 184.9L474.7 185.5L472.4 186.3L470.0 188.3L467.5 190.4L464.9 191.4L462.6 191.5L458.5 190.5L456.7 189.7L457.1 187.9L459.6 185.4L463.3 184.4L466.1 184.3L469.1 183.3L471.8 181.3L474.0 179.5L476.6 176.4L477.4 172.3L476.3 169.5L474.1 167.0L472.1 164.4L471.3 161.5L471.2 157.7L470.2 154.3L468.3 152.0L465.8 149.4L463.0 147.3L460.1 146.5L456.8 146.5L454.1 147.6L451.9 148.2L449.6 146.3L449.4 142.9L450.6 139.8L451.6 137.0L452.4 133.8ZM445.3 161.6L447.9 161.6L450.7 162.2L453.5 162.5L455.5 162.4L458.1 162.7L460.3 164.2L460.7 165.8L459.7 166.6L457.5 167.7L455.0 169.3L453.0 171.5L451.5 174.8L449.9 177.7L447.6 179.3L444.3 179.4L442.8 178.1L442.5 176.3L441.8 173.4L441.4 170.3L442.2 167.3L444.3 164.7ZM558.6 130.7L560.8 130.5L563.3 131.4L565.9 133.0L568.5 134.6L571.3 135.6L574.2 135.6L577.0 135.3L579.8 135.1L582.4 135.4L584.6 136.3L587.4 137.9L589.9 139.2L593.1 140.5L595.6 141.2L598.3 142.2L600.7 144.0L602.5 146.4L603.6 149.1L604.7 151.7L606.2 154.0L607.9 156.3L609.4 158.8L610.2 161.7L610.1 164.4L609.6 167.4L609.4 170.5L610.0 173.5L610.8 176.4L611.2 179.0L610.6 182.9L608.7 185.4L606.1 186.9L604.3 187.4L602.1 188.0L599.5 188.8L596.6 189.4L593.6 189.4L590.8 188.8L587.7 187.9L584.6 187.5L581.5 187.9L578.7 188.7L576.2 189.3L572.1 189.3L569.2 188.2L568.3 187.3L568.8 186.3L570.3 184.0L572.0 181.4L574.5 179.4L577.9 178.4L581.1 177.4L583.7 174.9L585.1 171.4L584.8 167.7L583.1 164.6L580.8 161.8L579.1 158.8L577.9 156.3L576.4 153.8L574.5 151.7L572.5 150.1L570.3 148.0L568.8 146.0L567.2 144.5L565.0 143.7L561.8 143.0L558.8 142.6L557.5 142.5L554.9 140.6L554.0 137.5L555.0 135.5L557.1 133.8ZM548.0 163.9L550.0 162.1L553.2 161.6L556.5 162.3L557.8 162.7L559.7 163.6L561.0 165.7L560.3 167.1L558.2 168.7L555.6 169.8L553.6 170.9L551.2 172.7L548.6 174.4L546.2 173.9L545.7 170.8L547.4 167.1ZM659.9 132.4L661.8 131.1L664.0 129.2L666.7 127.6L670.0 127.2L672.3 127.9L674.7 129.4L677.1 130.8L679.8 131.8L682.5 132.1L685.0 132.1L688.3 132.2L691.1 132.8L693.4 133.7L695.2 134.7L697.0 136.0L699.1 137.4L701.4 139.3L703.3 141.6L704.2 144.4L704.1 147.5L704.3 150.8L705.5 153.9L708.0 156.2L710.8 157.9L713.2 159.9L714.7 162.3L715.6 165.0L716.8 167.5L718.4 169.8L720.0 172.4L720.9 175.1L720.8 178.0L719.7 180.9L718.2 183.1L716.9 184.3L715.5 185.0L713.1 185.8L710.2 186.4L707.2 186.4L704.4 186.4L701.3 187.5L699.6 188.9L697.7 190.2L696.0 191.2L693.5 192.5L690.6 193.4L687.7 193.2L685.2 192.3L683.6 191.2L681.5 188.9L679.9 186.3L679.4 183.5L680.7 181.6L683.6 180.1L687.0 178.5L689.4 176.0L690.4 172.1L690.3 168.5L689.3 166.1L687.6 164.8L685.0 163.3L682.0 161.7L679.3 160.4L676.7 159.0L674.0 157.1L672.2 154.5L671.6 152.3L672.3 149.9L673.0 146.5L671.3 143.0L668.2 142.4L665.2 142.9L662.0 142.9L659.1 142.1L657.5 141.2L655.8 138.4L655.3 135.5L656.2 133.1ZM653.9 159.7L656.7 159.0L660.4 159.6L662.4 160.5L663.9 161.8L665.1 163.6L665.0 165.1L663.4 167.4L661.1 168.8L658.4 169.2L655.8 169.2L654.3 169.2L652.4 167.7L651.1 164.8L651.3 161.6ZM765.3 132.6L766.8 131.7L769.3 130.3L772.2 129.5L774.6 129.6L777.2 130.7L778.9 132.1L779.7 133.5L780.0 135.4L780.1 138.8L779.2 142.2L777.2 144.4L774.4 144.8L771.4 144.2L768.7 143.5L766.7 143.2L764.4 142.6L762.4 141.4L761.4 139.6L761.8 137.0L763.3 134.3ZM778.4 149.7L779.9 148.3L782.7 147.0L785.4 147.3L787.5 149.1L789.5 151.2L790.9 152.9L791.1 154.8L790.1 157.9L787.9 160.2L785.6 161.3L782.2 161.1L780.1 160.1L778.1 158.1L776.6 154.8L776.9 151.6ZM756.1 161.0L757.0 159.9L758.8 158.2L761.2 156.6L763.8 156.1L766.4 157.0L769.0 158.9L771.2 160.8L772.8 161.9L773.9 164.9L772.4 167.9L770.1 168.6L766.9 168.2L763.8 167.6L761.1 167.7L758.0 168.5L754.9 168.9L752.8 168.2L752.0 165.4L753.2 162.3ZM790.4 133.2L792.1 132.6L794.7 132.6L797.5 133.4L800.2 133.9L802.7 133.9L805.3 134.6L807.5 136.5L808.6 139.5L809.3 142.5L810.8 144.9L813.3 146.9L815.5 148.9L816.6 151.3L816.5 152.8L814.9 155.2L814.5 159.2L816.5 162.3L818.3 165.2L819.3 168.7L820.6 171.3L823.1 173.6L825.1 176.2L825.3 179.0L823.5 182.0L821.7 184.4L820.0 186.9L818.3 188.0L815.7 188.3L812.8 187.6L809.9 187.1L807.3 187.6L804.4 189.2L801.7 190.2L799.1 189.9L796.9 188.8L794.6 187.6L791.6 186.8L788.9 185.6L787.4 183.5L788.0 180.5L790.0 178.0L791.2 175.8L793.1 173.9L796.5 172.7L800.1 171.6L802.6 168.7L802.8 165.0L801.4 161.5L800.3 158.8L799.8 155.7L799.0 152.5L797.3 150.1L794.3 148.3L791.7 146.5L790.6 143.7L790.6 140.5L790.1 137.6L789.2 135.3L788.7 133.5ZM30.8 238.6L32.9 237.4L36.1 237.1L39.2 236.6L41.3 235.7L44.1 236.5L45.9 237.8L49.1 237.2L53.0 236.7L55.7 236.1L58.4 236.0L59.8 237.3L60.9 240.1L61.7 243.5L63.6 246.5L66.3 248.1L69.4 249.1L72.2 250.5L74.2 252.5L75.9 254.4L78.5 256.3L81.0 256.9L83.0 258.0L84.4 260.7L84.0 264.0L82.7 266.0L79.9 267.5L77.2 270.3L77.9 273.9L80.3 276.3L83.2 277.6L86.3 278.7L88.1 279.2L90.1 280.5L91.9 283.4L91.9 286.4L90.7 288.7L89.0 290.4L86.8 292.1L85.2 293.3L82.9 294.6L80.1 295.2L77.0 294.8L74.2 294.0L72.1 293.8L69.3 294.0L66.5 294.0L63.9 293.2L61.6 291.8L58.6 289.7L55.5 288.7L52.7 288.2L49.9 286.6L49.7 284.0L51.6 282.7L54.5 282.0L57.3 281.0L60.1 279.2L63.2 277.4L66.0 275.8L68.3 273.0L69.2 268.9L67.2 265.3L63.9 264.3L60.6 264.7L57.5 264.3L55.0 263.2L52.0 261.8L48.8 261.3L45.6 260.5L43.2 258.6L41.9 255.8L41.5 253.3L41.5 249.7L39.8 246.5L36.2 246.5L32.2 246.2L30.9 245.3L31.3 244.5L30.8 241.7ZM21.6 264.3L23.5 262.7L26.2 261.7L28.5 261.3L31.1 261.3L34.3 261.4L37.1 262.3L40.3 265.4L40.4 266.8L40.2 265.3L37.8 266.2L35.0 267.9L32.4 269.3L29.6 270.9L27.3 272.2L26.3 272.4L24.5 272.0L21.3 270.9L19.2 269.1L19.5 266.5ZM133.5 239.4L135.7 237.9L138.9 237.1L142.1 237.0L145.0 236.1L148.5 234.5L150.8 233.7L153.7 233.3L157.0 234.1L160.1 235.6L162.9 236.5L165.1 236.8L167.4 237.4L169.3 239.1L170.5 241.5L171.5 244.2L173.0 246.6L175.8 248.2L178.8 248.9L181.5 249.6L183.6 251.2L185.0 254.2L185.7 257.3L186.7 260.4L187.4 262.6L187.7 265.3L187.2 268.1L186.2 270.9L185.7 273.9L186.8 277.2L189.3 279.4L191.8 280.9L193.6 282.4L195.1 285.9L194.7 288.3L194.1 289.0L192.7 290.7L189.9 293.1L188.0 294.0L185.6 294.4L182.8 294.0L179.9 293.5L177.1 293.5L174.6 294.0L172.5 294.5L169.2 294.0L166.7 292.1L164.8 290.1L163.3 288.8L160.1 286.9L158.6 284.3L159.5 282.7L161.5 281.4L164.1 280.2L166.6 278.7L168.3 277.0L170.4 275.0L172.6 273.4L175.0 272.4L177.3 271.5L180.1 268.9L181.0 265.4L180.4 262.2L178.9 259.2L177.4 256.2L174.7 254.2L171.5 254.8L168.8 256.8L167.1 259.7L165.7 262.1L162.7 264.8L159.4 264.2L158.4 262.5L156.8 260.3L154.5 258.2L152.1 256.0L150.6 253.6L149.8 250.6L149.2 247.5L147.7 244.8L144.9 243.0L141.5 243.1L138.2 243.9L135.3 243.9L133.9 243.5L132.9 242.0L132.5 240.6L132.2 240.1ZM126.5 262.2L129.1 261.1L132.6 261.1L135.4 261.4L138.2 261.3L141.4 261.5L143.2 262.9L142.9 265.1L142.0 267.7L141.7 270.3L140.9 273.1L138.4 275.3L135.3 275.2L133.2 273.9L130.6 272.4L127.6 271.3L125.4 270.1L123.9 267.5L124.6 265.9L125.7 265.4ZM242.0 238.0L245.0 237.1L248.6 236.4L251.2 235.4L253.8 235.0L257.4 235.8L259.8 236.5L262.5 237.5L265.4 238.0L268.1 237.7L270.3 237.2L273.3 237.2L275.4 238.3L277.1 240.6L277.9 242.7L278.8 245.1L280.2 247.5L281.9 249.6L283.6 251.6L285.0 254.0L286.1 256.6L286.9 259.1L287.9 261.4L289.3 263.3L291.1 265.6L292.6 268.2L293.4 271.0L294.0 273.6L295.3 276.5L297.4 278.7L299.7 280.2L301.4 281.9L302.5 285.5L300.9 288.0L299.2 288.7L297.1 290.1L295.0 292.3L292.2 294.4L289.8 295.1L286.8 295.0L283.7 294.9L280.6 295.4L277.6 296.3L274.9 296.7L271.6 295.7L269.1 293.4L267.1 291.4L265.4 290.1L262.5 288.6L261.7 286.5L262.7 285.1L265.2 283.4L267.9 281.4L269.6 278.5L270.2 275.1L270.8 271.9L272.1 269.2L273.3 266.7L273.4 263.2L271.6 260.2L269.4 258.3L266.9 256.2L264.1 254.9L260.2 254.8L256.1 256.1L254.1 259.5L253.1 261.9L250.6 261.4L248.6 258.1L248.7 255.5L249.1 252.4L248.6 249.3L247.2 246.7L244.7 244.8L242.2 243.2L241.5 242.1L242.2 241.6ZM232.3 265.3L234.0 263.9L237.3 263.1L240.2 263.2L242.7 263.5L245.3 263.5L247.3 263.7L248.5 266.8L246.8 270.2L243.5 271.5L240.0 271.9L237.3 271.7L233.9 271.1L231.9 269.6L231.8 267.3ZM345.3 241.2L347.1 240.4L349.4 239.1L351.4 237.0L353.3 234.6L355.6 233.1L357.9 232.9L360.7 234.6L362.9 236.6L366.1 237.7L369.4 237.7L372.2 238.4L374.6 240.1L376.4 241.4L378.7 242.1L381.5 242.8L384.5 244.5L385.8 246.5L386.7 249.1L387.8 251.8L389.6 254.0L391.7 256.1L393.2 258.4L393.9 260.9L394.5 264.2L395.9 266.7L398.1 268.7L400.2 270.8L401.5 273.3L402.1 276.2L402.8 279.1L404.2 281.6L405.7 284.0L406.2 286.4L405.1 289.1L403.0 291.2L401.3 292.9L400.3 294.5L398.9 296.2L396.7 297.4L393.8 297.4L390.6 296.8L388.4 296.9L385.8 297.6L383.0 298.4L380.2 298.2L377.8 296.8L375.9 295.0L373.7 293.1L370.8 291.7L368.1 290.0L366.6 287.7L366.4 286.0L366.8 284.0L367.4 281.0L368.6 277.4L370.8 275.6L373.9 274.8L376.8 273.8L378.6 271.5L378.3 268.3L377.2 265.3L375.7 262.5L371.9 261.7L369.3 262.1L368.5 261.9L366.2 260.2L364.6 258.0L364.5 254.0L363.0 250.5L359.7 250.7L356.6 252.5L353.5 252.7L350.6 250.1L348.6 247.4L345.5 245.5L343.4 243.5L343.3 242.8ZM332.1 262.7L333.8 260.6L337.0 259.3L340.5 259.9L343.1 261.3L346.1 262.2L348.9 262.4L350.5 262.8L350.6 264.5L348.8 266.7L346.6 268.8L345.0 271.1L343.5 273.9L341.6 275.9L338.5 275.6L336.3 273.1L334.7 269.9L333.1 267.2L331.8 265.0ZM32.0 347.1L32.6 347.9L34.6 346.6L37.1 344.6L39.7 342.9L42.4 341.8L45.1 339.3L46.1 337.3L46.5 336.5L47.7 336.0L50.6 335.8L53.6 336.7L56.2 338.5L58.4 340.0L60.9 340.9L62.9 341.4L65.8 342.8L67.5 344.4L68.8 346.8L69.9 349.8L71.4 352.5L73.5 354.6L75.8 356.6L77.2 358.7L78.0 361.3L78.6 364.0L79.5 366.4L81.1 368.4L83.0 370.1L84.7 371.7L86.3 374.7L86.9 377.6L87.4 380.2L88.4 382.7L90.1 385.3L91.4 388.3L91.3 391.1L90.2 393.1L88.1 394.0L85.8 394.4L82.8 395.4L80.6 395.9L77.9 395.6L75.1 394.4L72.3 393.2L69.3 392.9L65.7 395.3L63.3 397.1L60.9 396.6L58.7 394.5L56.4 392.2L54.1 390.9L51.3 390.1L48.7 388.9L47.4 386.9L48.6 384.0L51.5 381.6L53.7 379.1L55.3 376.3L57.4 373.9L59.8 372.2L62.0 370.2L63.4 368.2L64.9 364.3L64.2 360.1L61.2 359.9L57.9 360.4L54.9 359.4L53.1 358.2L50.6 356.9L47.8 355.8L45.4 354.5L43.4 352.5L41.9 350.3L39.8 348.3L36.1 347.4L32.3 347.8ZM24.3 372.3L24.7 370.5L26.0 367.6L28.4 365.5L30.9 364.7L33.5 364.3L35.8 364.1L38.0 364.1L40.1 365.6L41.2 368.5L40.7 371.6L39.3 374.2L38.5 377.0L38.1 379.3L36.0 381.8L32.5 382.1L30.3 381.6L28.0 381.3L25.6 380.8L23.5 379.5L21.9 377.0L21.8 374.0ZM135.8 341.5L137.4 339.8L140.3 338.6L143.5 337.6L146.2 336.0L148.4 334.3L151.6 333.9L154.1 335.7L156.6 338.1L159.1 339.3L161.8 339.5L164.7 339.9L167.3 342.0L168.5 343.9L170.2 345.9L172.6 347.4L175.6 348.6L178.0 350.2L179.5 352.4L180.5 354.6L182.5 357.1L184.6 358.7L186.5 360.3L187.8 362.7L187.9 365.4L187.6 368.3L188.2 371.1L189.7 373.6L191.2 376.2L192.1 379.0L192.5 382.1L193.4 384.9L195.0 387.0L196.3 389.0L196.6 391.9L194.9 393.8L191.6 394.7L189.7 395.1L187.5 396.2L185.1 397.6L182.3 398.3L179.2 397.9L176.5 397.3L174.4 397.3L171.5 398.2L168.9 398.8L166.5 398.2L164.2 396.6L162.3 394.9L159.6 393.8L156.4 392.8L153.9 391.3L152.7 389.0L152.2 385.4L151.8 382.7L151.5 380.6L152.5 378.7L155.0 377.7L157.5 377.8L160.3 378.5L164.0 377.7L166.9 375.4L170.1 373.8L173.3 372.2L175.1 369.1L174.9 365.4L174.1 363.1L171.9 360.9L167.8 359.1L164.6 360.5L162.8 363.1L161.8 364.2L160.8 362.4L160.6 358.5L159.1 354.8L156.1 353.3L153.2 352.8L150.5 352.0L148.1 349.9L145.3 347.7L142.1 346.9L138.5 346.9L135.3 346.0L133.9 344.6L134.6 344.3ZM129.7 370.4L130.3 369.0L132.0 366.7L134.5 365.2L136.4 364.8L138.7 365.9L140.9 367.9L143.2 369.7L145.3 372.2L145.6 374.9L143.1 376.7L139.5 376.2L137.5 375.7L134.4 375.5L131.3 375.1L129.4 374.1L128.5 371.9ZM242.4 341.1L244.2 340.0L246.7 338.7L249.1 336.8L251.1 334.5L253.2 332.5L255.3 331.8L257.7 333.0L258.9 335.6L260.3 338.5L262.9 340.6L266.1 341.3L269.1 341.6L271.8 342.7L274.2 344.5L276.1 346.1L278.6 347.3L281.5 348.2L284.2 349.5L286.2 351.5L287.6 354.1L288.8 356.9L290.3 359.1L292.2 361.1L294.0 363.1L295.0 365.5L295.1 368.3L294.9 371.0L295.2 373.5L296.1 376.0L297.4 378.6L298.1 381.4L297.8 384.2L296.8 386.7L295.8 388.7L295.0 391.4L294.4 393.5L292.4 395.5L290.5 396.1L288.1 396.1L285.3 395.4L282.4 394.8L279.7 395.1L277.1 396.1L274.5 397.0L271.7 397.3L269.0 396.8L266.4 396.1L264.1 395.7L262.2 395.7L259.1 395.3L256.9 393.7L256.2 391.2L256.8 388.4L258.3 385.7L259.4 383.4L260.4 381.0L262.3 378.5L264.7 376.7L267.2 375.7L269.6 374.7L271.6 373.1L273.6 370.7L275.6 368.3L276.6 367.1L275.7 364.8L273.1 361.8L269.5 361.3L266.5 361.9L264.3 360.6L262.6 357.9L262.2 355.5L261.5 352.5L259.1 349.9L255.8 349.1L252.3 349.0L249.2 348.4L246.7 347.1L242.9 345.3L240.7 344.7L240.4 343.8ZM232.1 367.9L233.4 366.1L235.3 364.0L237.9 362.9L240.3 363.1L242.9 364.1L245.6 364.5L248.0 364.8L249.7 366.4L250.0 369.0L249.3 371.0L248.2 372.6L246.7 375.2L244.5 377.4L241.5 377.3L238.7 375.4L236.2 373.5L232.1 372.6L229.4 371.4L229.8 369.7ZM346.6 342.5L347.7 341.4L349.2 339.4L350.8 336.8L352.9 334.6L355.4 333.4L357.9 333.3L360.4 334.4L362.6 336.1L365.1 337.5L368.0 338.7L370.7 339.5L373.7 340.5L376.4 341.7L378.7 342.9L381.0 343.9L383.5 344.7L386.3 345.6L389.0 347.0L391.1 349.3L392.1 352.0L392.6 354.9L393.3 357.9L394.5 360.6L396.0 363.2L397.1 365.4L397.7 367.9L397.9 370.5L397.9 373.2L398.2 375.8L399.0 378.3L400.3 380.8L401.7 383.5L402.4 386.3L402.2 389.0L401.4 391.3L400.4 392.7L398.5 394.1L396.2 395.1L392.7 396.6L390.4 397.1L387.6 397.0L384.6 396.5L381.4 396.1L378.3 396.4L375.4 397.3L372.6 398.2L369.7 398.5L366.8 398.0L364.2 397.0L362.1 396.2L361.4 395.9L359.0 394.2L358.8 391.6L360.1 390.5L362.8 389.5L366.2 388.7L369.4 387.4L371.7 385.3L373.3 381.8L374.2 378.7L375.4 375.9L376.5 372.7L376.5 369.1L375.3 365.9L372.9 363.5L370.0 361.8L367.0 360.1L364.4 358.6L361.6 357.1L358.7 356.0L356.1 355.5L353.2 354.8L350.9 353.8L349.0 352.0L347.5 349.3L346.5 346.3L346.0 344.3L345.6 343.8ZM335.6 357.4L337.0 356.5L339.3 355.2L342.4 354.9L344.3 355.8L346.3 357.8L348.3 360.2L350.5 362.1L352.8 363.4L356.1 365.6L358.1 368.6L357.9 371.5L355.9 373.5L353.2 375.3L351.0 376.9L348.6 377.9L345.7 377.6L343.3 375.8L342.1 373.6L340.4 371.1L338.0 368.9L335.6 366.9L334.0 364.3L333.5 361.2L334.1 358.4ZM451.1 237.2L451.9 236.1L453.9 234.5L456.7 233.7L459.8 233.6L462.7 233.2L465.0 232.6L467.8 232.1L470.6 232.4L473.2 234.0L475.5 236.0L477.5 237.4L478.9 237.9L481.2 239.0L482.4 240.9L483.8 243.3L485.6 245.4L487.7 247.3L490.1 248.5L492.9 249.6L495.1 250.9L496.7 253.0L497.4 255.7L497.6 258.5L498.0 260.8L498.8 263.4L499.9 265.9L500.5 268.7L500.8 271.5L501.4 275.0L503.1 277.9L505.7 280.2L508.7 282.5L510.4 285.7L509.8 288.4L508.3 289.4L506.2 290.9L503.9 292.9L501.6 294.4L498.7 295.2L496.1 295.1L493.3 295.1L491.1 295.5L488.1 296.0L485.1 295.6L482.5 294.1L480.5 292.2L478.1 290.2L475.5 288.9L473.2 287.6L472.0 286.2L472.9 283.6L475.5 281.4L477.1 279.3L478.8 276.2L479.9 273.2L480.2 270.5L480.7 267.4L481.3 264.9L482.4 262.9L483.9 260.4L484.8 258.0L484.4 255.1L483.4 251.7L480.8 249.0L476.6 249.6L474.4 253.2L475.6 257.1L475.8 260.2L473.8 260.6L471.9 259.3L470.8 257.8L468.9 255.7L467.1 253.6L466.7 249.5L465.7 245.5L461.5 245.9L459.0 248.1L458.0 250.0L456.2 250.5L454.0 249.2L452.6 247.2L451.6 244.6L450.6 242.3L448.9 239.3ZM441.8 263.2L443.6 262.3L446.1 260.6L449.0 258.9L451.8 258.5L454.8 260.1L456.7 262.7L457.5 264.3L457.9 265.7L457.8 268.2L456.6 270.5L454.6 271.6L451.8 272.2L449.2 272.9L447.5 273.7L444.5 274.3L441.3 273.5L439.5 271.2L439.6 268.3L440.6 265.4ZM555.1 238.9L556.1 237.1L558.5 235.3L561.6 234.2L564.9 233.4L567.5 232.2L569.6 231.1L572.3 231.0L574.4 232.7L575.8 235.1L577.7 237.6L580.6 239.0L583.4 239.2L586.1 238.8L588.8 239.2L590.6 240.3L592.2 242.2L593.6 244.4L595.3 246.4L597.4 248.0L599.8 249.5L601.9 251.4L603.2 253.9L603.7 256.9L604.0 259.8L604.7 262.5L605.9 264.8L607.1 267.4L607.5 270.2L607.1 272.9L606.5 275.7L606.5 278.6L608.1 281.5L610.6 283.5L612.7 284.9L613.8 286.4L613.1 289.5L610.0 291.7L608.4 292.8L606.3 294.7L603.8 296.6L600.8 297.6L598.0 297.3L595.5 296.1L593.1 294.7L590.5 293.8L587.7 293.2L585.1 292.4L582.8 291.0L580.6 289.1L578.7 287.3L577.1 286.1L575.7 285.4L574.0 283.7L573.1 281.1L573.4 278.2L574.6 275.7L576.2 273.8L577.8 271.7L579.1 269.1L580.2 266.6L582.3 263.4L585.1 260.7L586.6 257.4L583.1 255.0L579.2 256.6L578.3 259.9L578.2 261.5L576.8 260.2L575.6 257.3L575.4 253.9L572.9 250.4L569.7 250.1L566.6 250.5L563.4 250.1L561.0 248.9L558.6 247.1L556.5 245.8L554.8 244.6L552.9 241.9ZM546.1 264.9L547.4 262.7L549.7 261.1L552.3 260.3L554.4 260.1L557.0 260.5L559.7 261.3L561.7 262.5L562.4 265.4L560.2 268.5L558.1 269.6L555.5 270.7L553.2 272.1L551.6 273.5L548.8 275.1L545.5 275.6L543.4 274.4L543.3 272.4L544.2 269.9L545.4 267.4ZM660.8 243.4L662.0 242.8L664.0 240.9L665.8 238.2L667.7 235.4L669.8 233.7L672.9 232.7L675.7 232.8L678.7 233.0L681.0 232.9L683.7 232.5L686.5 232.7L689.1 233.7L691.4 235.3L693.3 237.0L695.2 238.3L697.4 239.2L699.8 239.9L702.2 241.1L703.9 242.7L705.3 244.9L706.3 247.3L707.6 249.7L709.4 251.7L711.4 253.7L713.0 255.9L713.8 258.6L713.7 261.5L713.4 264.4L713.5 267.0L714.1 269.3L715.4 272.3L716.2 275.1L716.4 277.7L716.5 280.6L718.2 284.5L719.3 286.2L719.1 287.3L717.5 289.7L714.7 291.6L711.3 292.5L708.8 292.9L706.3 293.8L703.8 295.2L701.3 296.6L698.7 297.2L696.2 296.8L693.6 295.5L691.2 294.1L688.8 293.2L686.1 292.7L683.6 292.1L681.0 290.6L679.2 288.2L678.0 285.8L677.0 283.7L676.0 281.6L675.1 278.9L675.1 275.9L676.2 273.2L678.0 271.3L680.2 269.6L682.2 267.5L683.5 265.1L684.0 262.6L683.9 259.1L683.5 255.8L682.5 252.4L680.8 250.0L678.3 248.4L675.3 247.8L672.3 247.7L669.4 247.8L666.3 247.4L663.5 246.7L661.7 246.1L659.6 245.0ZM650.5 266.9L652.5 265.7L655.0 264.3L657.4 262.5L659.5 260.7L661.4 259.6L664.9 259.5L666.6 261.4L666.9 263.6L667.9 266.3L668.8 268.6L668.5 270.5L666.5 272.5L663.6 273.7L660.5 273.9L656.8 274.0L653.6 274.5L651.6 275.2L649.6 274.9L649.0 273.2L649.5 270.7ZM765.5 243.5L765.9 242.1L767.9 240.0L770.8 238.7L773.6 237.3L775.5 234.3L776.5 231.0L778.9 229.1L781.5 229.4L784.0 230.6L786.5 231.6L789.7 232.3L791.6 233.4L793.2 235.4L794.3 238.1L795.8 240.7L798.1 242.4L800.7 243.8L802.6 245.4L804.2 248.1L805.7 250.7L807.7 252.5L810.2 253.8L812.3 255.6L813.4 258.6L813.6 261.7L814.3 264.5L815.8 266.9L817.1 269.8L817.0 272.8L816.7 276.2L817.8 279.1L820.0 281.1L822.1 282.7L823.0 284.2L821.6 287.2L819.4 288.9L818.3 289.7L815.5 290.6L812.4 290.6L809.5 290.2L806.7 291.2L804.8 293.6L803.3 296.3L801.0 297.7L798.3 297.2L795.8 295.6L793.4 294.4L790.7 293.9L787.9 292.8L785.8 290.3L784.7 287.4L783.5 285.7L782.2 283.8L781.7 281.0L782.7 278.2L784.5 276.0L786.0 273.8L787.0 271.1L788.2 268.4L789.6 266.5L792.8 263.8L793.8 260.0L792.3 257.4L790.0 255.4L788.2 252.9L786.8 250.0L784.3 247.3L780.8 246.4L777.1 246.4L774.2 246.0L771.1 245.0L768.3 244.7L766.4 245.0L763.6 244.8ZM759.6 263.5L760.4 261.8L761.9 259.6L763.8 258.5L766.0 259.0L768.0 260.9L769.2 263.1L770.3 265.4L771.6 268.4L771.8 271.3L769.8 273.6L766.4 274.4L763.8 273.9L762.2 272.9L760.3 271.8L758.5 270.5L757.4 268.3L757.6 265.3ZM451.6 340.9L452.9 339.3L455.1 337.9L457.9 336.9L460.6 335.9L463.0 334.9L464.8 334.1L467.5 334.2L470.0 335.8L472.2 338.3L474.9 340.8L477.8 342.0L480.9 342.0L483.9 341.5L486.7 341.2L489.0 341.8L490.7 344.0L491.0 346.8L491.1 349.8L492.1 352.7L494.5 354.6L497.2 355.9L499.6 357.1L501.4 358.9L502.5 361.7L503.0 364.5L504.0 367.8L505.1 369.8L506.6 372.1L508.0 374.6L508.8 377.4L508.7 380.0L508.0 382.4L506.8 385.4L505.9 388.2L505.1 390.7L503.7 392.8L501.9 393.7L499.7 393.9L497.0 393.4L494.0 392.9L490.7 393.2L488.2 394.3L485.3 395.9L482.2 397.3L479.0 397.8L475.9 397.3L473.3 396.7L472.1 396.5L470.0 394.5L470.0 391.5L471.5 389.7L474.6 388.0L477.5 385.5L478.6 382.4L478.3 379.2L477.1 376.3L475.8 373.7L474.8 370.5L474.4 367.5L474.0 364.6L472.3 362.2L470.0 360.6L468.1 359.5L466.5 357.9L465.0 355.7L463.2 353.3L460.4 351.2L457.5 349.4L455.4 348.2L453.2 346.5L451.0 343.9ZM439.2 362.5L441.4 360.5L444.7 360.1L447.4 360.2L449.6 360.2L452.6 360.5L455.3 362.0L457.1 364.3L458.6 366.5L460.7 368.2L463.0 369.7L464.6 371.6L464.5 374.7L462.9 377.5L461.9 379.2L459.6 380.9L455.8 380.8L453.9 378.4L452.8 374.8L450.3 372.1L446.6 372.0L443.3 372.8L441.5 371.9L441.6 369.3L441.7 366.0ZM559.0 341.7L559.2 341.2L560.4 339.1L562.3 336.9L564.9 335.4L567.7 334.8L569.8 334.6L572.3 334.3L575.1 334.3L578.0 334.9L580.6 336.4L582.4 338.2L584.0 340.3L585.9 342.1L588.1 343.3L590.6 344.3L593.1 345.4L595.2 347.3L597.1 349.6L599.0 351.6L601.3 353.1L604.7 354.2L607.8 355.7L609.7 358.1L610.5 360.9L610.4 363.4L610.5 366.0L610.7 368.7L610.6 371.4L609.0 374.2L606.5 376.4L604.4 378.9L603.4 382.3L602.9 386.0L602.4 389.0L603.3 392.8L603.4 395.2L602.4 395.3L599.9 396.4L596.8 397.4L593.6 397.6L590.7 397.3L587.6 396.9L584.8 397.2L582.5 398.1L580.9 398.7L578.6 397.9L577.4 395.7L577.6 393.5L578.7 391.4L580.1 388.0L580.2 384.6L579.1 381.9L578.1 378.6L577.6 375.3L577.2 372.6L576.2 369.7L574.7 366.8L573.4 364.5L572.2 361.9L571.0 359.3L569.3 357.1L567.3 355.5L565.0 353.8L563.0 351.8L561.9 349.5L561.2 347.2L559.4 344.2L557.5 342.6ZM545.2 360.4L548.1 359.0L551.1 358.5L553.1 358.1L554.6 358.2L556.8 359.3L558.5 361.5L559.3 363.6L559.9 366.2L561.4 368.9L563.2 371.5L564.9 375.2L564.7 377.8L563.0 377.5L560.4 376.9L558.7 375.8L556.9 373.2L555.1 370.2L552.3 368.5L549.2 368.1L546.7 368.8L545.0 369.0L543.7 366.7L544.6 363.5ZM658.9 340.9L660.2 339.2L662.3 337.8L665.2 337.0L668.2 336.6L670.7 335.9L672.4 335.0L675.0 334.3L677.6 334.9L679.9 336.5L682.0 338.4L684.0 339.7L686.2 340.7L688.9 341.6L692.1 342.8L693.9 343.9L695.8 345.5L697.8 347.3L700.1 348.7L702.5 349.7L704.9 350.6L706.9 352.1L708.1 354.2L708.9 356.8L709.7 359.3L711.0 361.4L712.7 363.3L714.5 365.1L715.6 367.2L715.8 369.7L715.0 372.2L714.2 374.6L713.8 377.2L713.8 379.9L714.0 382.5L713.7 385.4L712.7 388.3L711.4 390.9L710.6 392.7L710.0 394.0L709.1 395.1L707.1 396.2L704.6 396.6L701.7 396.2L698.8 395.7L696.1 395.9L693.5 396.9L690.6 398.0L687.8 398.4L685.1 397.7L682.9 396.5L681.6 395.5L679.8 393.7L678.5 391.7L678.2 389.1L679.7 387.4L682.7 386.0L685.9 384.1L687.5 380.6L685.9 376.9L683.1 374.4L681.0 371.4L679.4 368.8L677.1 366.4L674.4 364.7L672.1 362.8L671.3 360.0L672.2 357.0L673.0 353.7L671.9 350.2L668.5 348.4L664.7 348.3L661.4 348.0L659.8 346.9L659.1 344.4ZM651.3 361.0L653.1 359.4L655.1 358.6L656.7 357.9L658.5 357.8L661.4 358.5L663.9 360.3L665.5 362.9L666.7 365.5L668.1 367.9L669.9 369.9L671.8 371.8L673.7 374.7L674.5 377.9L674.7 377.8L673.9 377.3L670.6 377.7L668.5 377.1L666.3 375.3L663.7 373.0L661.2 372.0L658.1 371.8L655.0 372.5L652.1 372.8L650.0 371.8L649.3 369.2L650.4 366.2L651.6 363.5ZM767.8 342.0L768.3 340.9L769.8 338.9L772.0 337.3L774.7 336.4L777.3 335.8L779.4 334.9L781.5 333.9L784.2 333.1L786.9 333.4L789.4 334.7L791.6 336.4L793.9 337.8L796.3 338.6L798.9 339.3L801.2 340.5L803.1 342.5L804.4 344.9L805.7 347.1L807.3 348.8L809.5 350.4L811.7 352.3L813.2 354.6L814.0 357.0L814.8 359.3L817.0 362.1L819.4 363.9L821.1 367.0L821.1 369.2L820.2 371.7L819.0 374.2L818.3 376.9L818.3 379.7L818.4 382.3L818.1 384.6L816.9 387.9L815.7 390.8L815.1 392.6L814.7 393.9L813.9 395.2L811.8 396.4L809.1 396.7L806.1 396.2L803.0 396.0L800.1 396.8L796.9 398.3L793.4 399.0L790.2 398.2L787.7 397.1L786.7 396.7L786.2 395.6L786.9 392.4L788.3 389.2L790.1 386.7L792.0 384.0L792.5 380.4L791.7 377.7L790.5 374.9L789.7 372.0L789.6 369.1L789.1 366.4L786.9 363.6L783.7 362.6L780.8 360.9L779.7 358.2L779.8 354.8L779.7 351.5L778.0 348.7L775.0 347.4L772.0 346.6L769.4 345.4L768.1 343.9L767.6 342.7ZM756.3 359.3L757.7 357.0L759.5 354.6L761.8 353.5L763.7 355.1L764.5 358.0L765.1 361.2L766.9 363.9L769.3 365.8L772.0 367.7L774.0 369.7L775.5 372.5L776.3 375.2L776.5 375.7L776.5 376.7L774.9 378.0L773.3 377.6L771.0 375.7L769.0 373.0L766.6 370.4L763.8 369.4L760.4 369.5L757.1 369.5L754.5 368.6L753.1 367.0L753.6 364.5L755.3 362.0Z"/><path id="bn" d="M36.6 442.5L37.9 441.9L40.1 440.2L42.7 438.5L45.6 437.9L48.2 438.1L50.9 438.5L53.6 438.2L56.4 437.8L59.2 438.3L61.0 440.2L61.9 443.0L62.8 445.8L64.8 448.1L67.4 449.4L69.9 450.6L71.8 452.6L73.1 455.1L74.2 457.5L75.9 459.5L78.1 461.2L80.1 463.1L81.7 466.0L82.6 468.8L83.4 471.7L84.2 473.8L85.0 476.6L84.8 479.6L83.5 482.2L82.2 484.1L80.4 486.2L78.9 488.2L78.3 491.0L78.9 493.7L79.3 497.1L79.0 499.9L78.6 500.5L78.3 500.7L76.5 502.0L73.9 503.1L70.8 503.1L67.9 502.5L65.5 502.3L62.1 503.1L58.7 504.0L55.9 503.6L54.4 502.0L55.5 499.6L57.9 496.8L59.4 493.7L61.5 491.6L64.6 490.8L67.0 488.9L65.8 485.6L63.0 483.5L59.5 482.8L56.3 482.9L53.2 482.6L50.9 481.2L49.2 479.1L46.7 477.1L43.6 475.9L40.8 475.3L38.1 474.1L35.1 472.5L32.3 471.7L29.2 471.9L26.3 471.9L24.4 471.0L23.8 467.7L24.5 464.9L24.2 462.4L24.4 460.3L26.8 459.9L30.3 461.6L33.0 462.7L36.2 462.9L39.3 462.6L43.8 464.0L46.0 465.0L45.3 462.8L43.2 460.0L40.0 457.9L37.5 455.8L36.2 452.4L35.8 449.2L35.3 447.0L34.0 444.3ZM34.6 493.9L37.0 493.8L38.7 495.0L39.7 497.4L40.6 499.5L39.4 501.0L37.2 501.3L36.2 499.6L36.1 498.0L36.4 496.9ZM141.7 439.6L143.7 439.1L146.6 439.6L149.5 439.7L152.4 438.7L155.0 438.0L156.7 438.2L157.3 439.6L156.7 442.2L156.9 445.4L159.0 447.7L161.4 447.8L164.0 448.0L166.9 449.2L169.7 450.5L171.8 451.2L174.4 451.7L176.7 452.8L178.4 454.7L179.4 457.4L180.6 459.6L182.9 461.7L185.5 463.9L186.9 466.6L187.3 469.4L188.3 473.2L190.1 475.8L190.8 477.9L188.6 478.9L184.8 478.5L180.8 479.9L179.2 484.1L180.9 487.2L182.9 489.8L183.8 493.0L184.2 495.6L184.9 498.8L185.2 502.2L183.5 504.4L181.0 503.8L178.3 501.7L174.7 500.9L171.7 502.0L168.7 502.9L165.9 502.8L164.3 502.3L161.9 501.2L159.7 499.7L159.8 496.3L161.7 493.2L160.5 490.3L158.3 488.0L156.8 486.0L155.8 483.1L156.5 480.4L158.4 478.3L159.8 475.0L159.8 471.5L158.9 467.9L157.6 464.3L155.0 462.3L151.4 461.8L148.3 460.6L147.1 457.7L147.1 454.3L146.4 450.9L144.3 448.3L142.3 445.2L142.2 442.1ZM127.9 461.5L130.0 459.9L132.9 459.5L134.8 460.0L136.9 461.7L138.6 464.1L140.2 466.4L142.2 468.3L144.8 469.9L147.2 471.5L148.8 473.4L149.9 476.8L149.0 478.7L147.3 478.9L144.8 479.1L142.1 479.4L139.9 478.8L137.7 477.2L135.9 474.9L133.7 472.7L130.2 471.8L127.8 472.3L126.8 472.6L125.9 471.5L125.2 468.7L125.7 465.5L126.8 462.8ZM244.7 438.8L246.4 438.4L249.1 438.3L252.1 438.1L255.0 437.3L257.5 436.5L261.0 436.2L263.8 437.3L265.0 438.8L264.7 440.2L264.9 443.1L267.1 446.2L269.6 447.3L272.2 448.0L274.7 449.2L276.8 450.9L278.5 452.6L280.1 454.2L281.9 456.0L283.6 458.0L284.8 460.3L285.4 462.9L285.9 465.8L286.7 468.6L288.2 470.8L289.9 472.5L291.4 473.8L292.7 477.1L291.9 480.0L290.2 482.9L289.2 486.6L290.5 489.5L292.2 492.3L292.3 495.4L290.5 498.2L288.3 500.4L286.7 502.2L285.6 503.3L283.4 504.7L280.6 505.4L277.8 505.0L275.1 504.2L272.4 503.5L269.3 503.3L266.2 503.0L263.6 501.6L262.4 499.4L262.6 497.5L263.3 495.3L263.8 492.9L263.5 490.0L262.8 487.1L262.2 484.5L261.9 481.6L262.1 478.9L262.0 476.1L261.3 473.6L260.2 471.3L258.7 468.4L257.9 465.5L257.7 462.3L257.1 459.2L255.1 456.2L252.2 454.7L249.5 453.4L247.2 451.0L246.0 447.8L245.5 444.8L244.3 441.5ZM230.9 463.3L231.7 460.0L233.9 458.0L236.5 458.5L239.0 460.0L240.2 461.0L242.2 462.9L244.6 464.7L247.1 466.5L249.1 469.1L250.0 471.9L250.3 474.5L250.7 476.9L251.0 478.3L249.8 479.6L246.9 479.1L245.6 477.7L243.8 475.4L241.4 473.4L238.4 472.4L234.6 472.8L231.3 473.0L229.0 471.5L229.0 468.8L230.0 465.8ZM357.9 436.5L359.9 434.8L362.8 434.6L365.9 435.4L368.7 435.9L371.1 435.8L372.9 435.8L374.2 437.5L373.2 440.6L373.5 444.5L376.7 446.6L380.0 446.4L383.3 446.1L386.0 447.7L386.9 449.6L388.0 451.8L389.7 453.8L391.9 455.8L393.6 458.0L394.2 460.6L394.1 463.0L394.2 466.3L395.0 468.9L396.0 471.4L396.4 473.6L395.5 477.0L394.8 480.5L396.3 483.4L398.8 485.8L399.7 488.9L398.7 491.0L396.9 493.0L395.2 495.1L394.1 497.5L392.8 499.8L390.5 501.4L387.5 501.6L384.5 501.3L381.7 501.8L379.5 502.7L376.8 503.4L374.0 502.9L371.4 501.8L369.2 501.1L367.3 501.0L363.8 499.8L362.2 496.6L363.0 493.2L364.3 491.1L365.4 488.3L366.3 485.1L367.4 482.4L368.4 479.0L368.2 475.7L366.3 472.7L364.3 470.9L362.2 468.5L361.0 465.7L360.1 463.2L358.1 461.4L355.1 462.9L354.0 467.2L352.7 469.6L350.3 472.5L348.5 475.1L348.5 476.2L346.5 476.7L343.1 474.7L340.2 472.9L337.2 472.0L334.5 471.8L332.3 470.4L331.3 467.7L332.2 464.9L333.5 462.9L334.7 460.4L335.7 457.7L337.2 456.1L339.4 456.9L341.6 459.5L345.2 460.8L348.5 458.9L350.1 455.6L351.9 452.1L353.4 449.9L354.8 447.2L355.1 444.1L354.9 440.7L355.8 437.9ZM40.1 541.8L41.6 541.1L43.9 539.7L46.6 538.1L49.6 537.6L52.4 538.2L53.8 539.0L54.9 540.0L56.5 541.6L58.8 543.8L60.9 545.8L63.7 547.8L66.6 549.3L69.2 550.6L71.2 552.3L72.6 555.1L72.8 558.4L72.9 561.7L74.6 564.9L77.2 566.6L80.0 568.1L82.0 569.9L83.5 572.3L84.6 574.5L85.7 576.5L86.5 578.4L87.2 581.1L86.9 583.9L85.5 586.5L84.1 589.2L83.6 592.1L84.4 595.0L85.4 597.6L85.3 600.0L84.0 601.6L82.2 602.3L80.0 603.1L77.8 604.8L75.5 607.0L72.7 608.6L69.8 608.8L67.3 608.3L64.7 607.9L61.9 608.1L59.1 608.4L56.5 608.0L54.4 606.8L53.2 605.5L51.7 602.7L50.4 600.6L49.0 598.1L49.4 595.2L51.7 592.6L53.7 589.7L53.8 586.2L52.8 583.1L51.9 580.7L50.8 578.1L48.8 575.1L45.3 574.1L42.6 576.2L41.4 579.4L40.2 582.4L38.6 584.0L35.0 585.4L33.7 585.7L33.5 585.2L32.6 582.3L32.7 578.9L33.7 575.9L33.5 573.2L30.8 571.6L27.5 572.2L24.4 573.3L21.9 573.2L19.5 571.5L18.1 569.9L17.7 569.3L17.5 568.4L17.6 565.6L18.6 562.6L20.6 560.5L22.4 559.2L24.2 557.8L26.1 557.4L28.6 557.2L31.8 557.9L34.7 559.6L38.0 560.2L40.9 557.4L41.2 553.5L40.3 549.9L39.4 546.8L39.2 543.9ZM36.0 602.3L36.7 601.9L38.5 601.9L40.5 603.9L40.9 606.9L38.6 608.1L36.1 607.5L34.7 605.7L34.4 604.3L34.9 602.8ZM151.2 542.2L153.2 540.2L155.7 538.1L158.6 537.3L161.4 538.4L162.6 540.2L163.9 542.5L165.6 544.8L168.0 546.7L170.3 548.5L171.9 550.2L172.9 553.3L172.7 556.1L173.3 559.2L175.1 561.4L177.5 563.0L179.8 564.7L181.5 567.2L181.9 569.9L181.9 572.9L182.0 575.9L182.6 578.5L183.7 580.8L184.7 583.5L184.9 586.3L184.5 589.0L184.4 591.8L185.8 594.7L187.9 596.5L189.3 598.0L189.7 601.0L188.4 604.4L185.1 606.2L183.1 606.1L180.7 605.9L178.1 606.1L175.4 606.9L172.7 607.8L170.2 608.2L167.3 608.0L164.5 607.3L161.8 606.6L159.4 606.4L157.5 606.2L154.2 603.8L154.7 600.0L156.6 599.1L159.3 598.7L162.3 598.2L165.1 596.9L167.1 595.0L169.0 591.9L170.4 589.2L170.9 586.6L168.0 584.2L163.5 583.4L159.9 585.8L157.0 587.3L155.6 585.0L155.6 581.5L156.2 578.1L156.3 573.6L153.8 569.9L149.2 570.6L145.7 573.4L143.7 576.4L141.8 579.8L141.5 581.3L140.4 580.7L137.3 578.5L135.2 577.3L133.2 575.6L131.3 573.3L128.9 571.0L126.5 569.6L125.0 568.7L124.2 567.1L123.9 564.1L124.6 561.2L125.5 559.3L126.7 558.2L128.7 558.0L130.9 557.8L134.3 558.0L137.3 558.4L139.6 558.5L141.8 557.1L143.9 554.3L145.1 551.2L145.7 548.7L146.7 545.8L148.5 543.6ZM136.4 602.0L138.4 600.7L141.9 600.2L144.5 602.6L144.9 605.5L142.6 606.4L139.8 606.6L136.9 605.9L134.3 604.5L134.0 602.1ZM226.7 554.2L228.2 552.5L230.9 552.1L234.2 552.8L237.7 552.8L240.7 551.2L242.7 549.4L244.9 547.8L247.6 546.8L250.2 545.8L252.2 544.3L253.7 542.5L255.9 540.4L258.6 539.2L261.4 539.2L263.8 539.7L265.9 540.0L268.1 540.6L270.3 542.3L271.7 544.9L272.2 548.3L273.2 551.3L275.2 553.4L277.6 555.1L279.7 557.0L281.0 559.5L282.0 562.1L283.5 564.2L285.7 565.8L288.0 567.3L289.7 569.3L290.3 571.7L290.3 574.4L290.3 577.0L291.0 579.6L291.9 582.2L292.4 584.9L292.1 587.8L291.6 590.8L291.7 593.5L292.7 595.8L293.5 597.9L293.3 601.2L291.6 603.6L289.3 605.2L288.0 606.3L285.9 607.9L283.2 609.1L280.3 609.0L277.5 608.1L275.0 607.5L272.1 607.6L269.1 608.1L266.3 607.7L264.2 606.4L263.4 605.1L262.3 603.0L260.8 600.7L260.2 598.3L262.4 596.8L266.5 596.4L269.5 594.3L269.0 590.8L267.2 587.8L266.1 585.0L264.7 582.5L262.6 580.6L261.1 579.6L259.9 577.4L259.4 574.0L258.6 570.6L255.2 568.6L251.3 568.9L248.2 570.9L246.4 574.5L244.5 575.9L244.0 573.6L242.8 569.9L240.1 567.4L237.3 566.9L234.2 565.9L232.4 563.8L231.4 561.7L229.1 559.3L227.6 556.7ZM242.4 603.0L243.2 602.5L244.9 603.0L245.1 605.3L244.6 606.8L244.0 606.8L243.5 607.7L241.5 605.6ZM357.2 542.4L358.3 540.6L360.6 539.2L363.6 538.8L366.5 538.8L368.9 538.3L370.6 537.7L372.8 538.5L374.1 541.2L374.1 544.7L374.4 548.3L376.0 550.7L378.3 552.5L380.6 554.3L382.1 556.7L382.7 559.5L382.9 562.2L384.0 564.8L385.7 567.3L387.2 569.7L387.9 572.0L388.5 575.6L389.1 578.5L389.9 581.0L390.7 584.2L390.8 587.1L390.7 589.2L393.7 590.3L396.6 590.8L397.6 591.9L399.5 594.4L400.2 597.6L399.6 600.2L398.7 602.8L398.5 605.4L397.0 608.5L395.3 609.4L393.0 609.8L390.4 609.6L387.7 609.5L384.9 610.2L382.2 611.2L379.7 611.6L376.9 611.0L374.1 609.7L371.4 608.6L368.9 608.3L366.7 608.4L365.1 608.2L363.3 605.9L363.7 603.1L364.4 601.1L365.0 599.8L366.6 597.4L368.7 595.1L370.9 593.5L373.8 591.3L375.8 588.3L375.8 584.9L374.5 581.9L373.3 578.7L372.4 575.0L370.7 572.0L367.9 570.3L365.3 569.0L363.7 566.5L362.8 563.2L360.0 561.2L357.1 563.0L355.9 566.1L355.3 569.7L354.0 572.1L351.1 574.5L349.1 575.0L347.9 574.1L345.5 572.7L342.8 571.5L339.3 570.4L337.5 568.1L337.5 566.4L336.4 563.8L334.8 561.1L334.4 558.8L335.6 556.9L337.9 556.1L340.6 555.8L342.6 555.6L345.8 555.4L349.0 556.0L351.5 557.1L354.1 557.2L355.8 555.2L356.4 552.3L355.8 549.2L355.1 546.2L355.7 543.6ZM346.0 602.4L349.0 600.7L352.5 601.2L353.4 604.1L352.9 605.9L351.5 606.1L349.2 607.0L347.2 607.0L345.6 606.3L345.5 604.6ZM459.8 440.4L460.9 439.7L462.9 438.3L465.5 437.0L468.4 436.6L471.3 436.8L473.7 436.9L475.3 436.7L477.6 437.0L479.6 438.5L481.1 440.6L482.4 442.9L483.9 444.9L485.7 447.0L487.8 448.6L490.1 449.6L492.4 450.5L494.6 452.0L496.4 454.2L497.7 456.7L499.0 459.1L500.6 461.1L502.4 463.1L503.8 465.5L504.4 468.2L504.0 470.9L503.1 473.6L502.4 476.2L502.2 478.8L502.4 481.4L502.5 484.0L502.1 486.5L501.1 489.4L500.1 492.1L499.5 494.3L498.9 496.8L497.7 499.2L495.5 501.4L492.4 502.4L489.2 502.5L486.3 502.6L483.8 503.0L481.1 503.6L478.3 503.7L476.0 503.0L474.4 501.7L473.2 499.7L471.8 497.7L469.8 495.6L468.2 493.2L468.0 490.4L469.4 487.8L471.4 485.3L472.7 482.4L472.5 479.3L471.5 476.4L470.5 473.6L470.1 471.1L469.7 467.6L468.4 464.4L465.3 462.5L461.9 463.7L459.9 466.6L458.5 469.3L457.5 472.1L456.3 475.2L455.2 477.1L452.5 479.1L449.7 479.8L449.2 477.0L448.7 472.4L445.5 470.4L442.1 470.0L439.0 470.7L436.8 471.0L434.9 468.7L435.8 464.9L437.0 462.4L438.1 459.3L438.8 456.2L439.8 454.0L442.3 453.2L444.6 455.0L445.9 457.4L448.4 460.0L452.6 460.3L454.2 457.1L454.0 453.8L454.5 450.3L455.7 447.5L456.7 444.3L456.9 441.4ZM562.9 438.4L564.7 437.0L567.3 436.2L570.5 436.0L573.7 436.0L576.5 435.5L578.8 434.8L580.1 434.2L583.5 435.8L583.4 438.3L582.0 438.3L578.6 439.6L576.6 442.7L578.5 445.3L581.4 446.1L584.5 447.2L587.2 449.4L588.8 451.3L590.6 453.2L592.8 454.9L595.2 456.1L597.6 457.3L599.6 458.8L601.2 460.9L602.4 463.4L603.5 465.9L604.8 468.1L606.5 470.0L608.2 471.6L609.9 474.3L610.2 477.1L609.4 479.8L608.2 482.1L606.2 484.7L604.4 487.5L603.6 491.0L604.7 494.3L605.7 497.4L604.9 499.0L603.8 499.2L601.7 500.4L599.3 502.4L596.6 504.5L593.7 505.7L591.1 505.8L588.3 505.1L585.6 504.2L583.0 503.7L580.7 503.5L578.7 503.3L575.4 502.0L573.6 499.6L573.7 497.4L574.5 496.8L575.8 495.1L577.0 492.4L577.9 489.3L578.1 486.6L578.0 484.1L578.2 481.4L578.4 478.4L578.1 475.6L577.4 473.1L575.5 469.8L573.8 466.8L572.5 464.2L570.5 461.0L566.5 460.4L564.0 462.6L562.6 465.5L561.9 468.8L561.0 471.5L559.0 473.7L556.6 475.0L554.3 475.0L551.9 473.8L548.9 472.2L545.9 470.9L542.5 469.3L541.5 466.5L542.3 465.0L543.2 462.3L543.4 459.2L543.3 456.2L543.5 454.1L546.3 453.2L550.0 454.1L552.5 453.5L555.2 452.2L557.5 450.1L559.2 447.7L560.3 444.6L561.5 441.8ZM664.5 446.0L665.7 443.7L667.1 441.1L669.2 439.0L672.0 438.0L675.0 437.8L677.5 437.7L680.0 436.9L682.5 435.5L685.1 434.6L687.4 434.6L689.1 435.4L690.2 436.7L691.2 438.4L692.8 440.6L694.8 442.8L696.7 444.8L698.0 446.8L699.2 449.5L700.5 452.1L702.3 454.1L704.4 455.6L706.2 456.8L708.3 459.4L709.1 462.0L709.5 465.4L710.3 467.4L711.7 469.7L713.2 472.3L713.9 475.0L713.6 477.7L712.8 480.1L711.7 483.0L711.3 485.6L711.1 488.2L710.7 490.8L709.3 493.8L707.4 496.1L705.5 498.3L704.2 500.5L702.3 503.3L699.5 505.1L696.2 505.0L693.8 504.2L691.1 503.5L688.2 503.2L685.4 503.0L683.0 502.2L681.6 501.1L680.6 498.4L680.4 496.3L680.0 493.8L680.6 491.9L682.8 489.6L685.9 488.3L689.0 487.1L690.9 484.8L690.5 481.7L688.6 478.8L686.8 475.7L685.8 472.5L684.9 469.9L682.2 466.8L678.1 467.4L676.3 469.7L674.7 472.5L672.3 474.5L669.9 475.2L667.2 474.5L664.3 473.8L661.4 473.3L658.1 472.1L654.9 470.0L651.4 469.2L648.5 469.6L647.0 470.1L645.8 469.1L644.7 466.5L644.9 463.3L645.9 460.7L646.8 458.3L647.6 455.4L648.7 452.9L650.3 451.6L652.2 453.1L653.6 456.7L657.2 458.6L660.2 456.4L661.2 453.7L661.5 450.6L662.2 447.7ZM662.8 495.1L665.1 494.9L667.3 494.9L668.9 497.0L669.1 499.9L667.0 500.8L664.8 500.1L663.8 498.2L663.5 496.8L663.7 496.5ZM773.9 444.3L775.8 443.5L777.9 442.0L779.9 439.7L781.7 437.2L783.6 435.3L785.6 434.3L789.2 433.8L791.7 434.1L793.7 435.0L794.9 436.3L796.3 438.7L797.1 441.6L797.2 444.8L797.3 448.1L798.3 451.1L800.2 453.4L802.6 455.2L805.0 456.8L806.9 458.7L808.1 461.0L809.0 463.2L810.0 465.4L811.4 467.4L813.4 469.5L815.4 471.4L817.1 473.8L818.0 476.6L818.3 479.7L818.5 482.4L818.9 484.7L819.5 487.3L819.8 490.0L819.4 492.6L818.2 494.9L816.7 496.6L814.8 498.6L813.4 500.7L811.9 503.0L809.6 505.1L807.5 505.8L804.9 505.7L802.2 504.9L799.6 504.1L797.0 503.7L794.5 503.6L791.7 503.2L789.1 502.2L787.1 500.3L785.9 498.3L785.6 496.7L785.7 495.4L785.8 493.3L785.8 490.4L785.9 487.3L786.3 484.5L786.7 481.7L786.9 478.9L786.4 476.0L785.1 473.5L783.4 471.4L781.1 468.8L779.3 465.4L777.5 462.3L774.3 460.9L771.7 463.5L771.2 467.2L770.9 470.9L769.7 472.8L767.8 472.8L765.4 471.9L761.9 471.4L759.2 472.1L756.1 473.0L753.0 473.4L750.4 472.5L748.8 471.1L748.5 469.0L748.7 466.4L748.7 463.4L748.8 460.5L749.8 457.1L752.1 454.6L753.9 453.8L755.3 454.1L758.3 454.4L761.8 453.9L765.4 452.0L768.8 450.2L770.6 448.3L771.7 446.2ZM769.4 496.5L770.3 495.4L772.6 495.4L774.5 498.5L774.2 501.7L771.9 502.6L769.4 503.1L768.4 502.5L767.4 500.8L767.5 498.0ZM461.2 539.6L462.7 539.2L465.1 538.3L468.0 537.2L471.0 537.3L473.2 538.7L474.4 540.7L475.6 542.7L477.5 544.6L479.8 546.4L481.7 548.2L483.2 550.6L484.4 553.0L485.8 555.0L488.1 556.9L490.5 558.7L492.3 561.2L493.0 564.5L493.3 567.5L493.9 569.9L494.7 572.5L494.6 575.2L493.6 577.8L492.4 580.4L491.5 583.9L492.4 587.5L494.9 589.8L497.7 589.8L500.9 589.7L504.1 590.0L505.6 590.1L507.1 591.8L506.6 595.9L505.1 597.5L502.7 598.7L499.9 599.9L497.7 601.7L496.2 604.0L494.8 605.9L491.9 608.0L489.2 608.6L486.4 609.2L484.2 610.1L481.3 611.1L478.3 611.1L475.7 609.8L474.1 608.1L472.0 605.6L469.9 603.1L469.6 600.3L471.2 599.1L474.3 598.4L477.4 597.1L479.6 594.5L480.8 591.7L480.7 588.4L480.1 585.1L479.0 581.9L476.4 579.8L473.1 578.5L471.0 576.3L471.7 573.2L473.6 570.0L473.2 566.2L469.7 564.4L466.0 564.3L462.4 564.1L458.9 564.6L456.0 566.4L453.6 568.8L451.2 570.3L448.1 570.8L445.3 569.9L443.7 568.7L442.1 566.7L440.5 563.8L440.0 560.9L442.1 557.6L444.2 556.7L444.8 556.8L448.1 556.8L451.7 556.9L454.7 557.2L458.1 557.3L461.1 556.3L463.0 554.4L461.7 551.6L460.5 547.7L461.2 544.5L461.4 541.7ZM451.1 599.5L451.4 599.5L454.5 599.0L457.4 599.8L459.2 602.3L460.1 605.2L460.6 606.0L458.8 607.2L455.0 607.9L452.2 606.1L451.3 603.6L451.1 600.9ZM567.9 538.7L569.7 538.5L572.3 538.8L575.1 539.1L577.8 539.0L580.0 538.8L582.5 539.7L584.5 541.9L585.7 544.9L586.5 548.1L587.6 550.7L589.2 553.0L591.2 555.0L593.4 557.0L595.2 559.1L596.8 561.8L598.3 564.7L600.1 567.2L602.0 568.9L603.2 569.5L603.0 571.9L600.4 574.3L598.2 576.1L595.5 577.9L594.6 580.8L596.4 582.9L598.9 584.0L601.9 584.8L604.5 585.9L606.1 587.5L606.6 590.1L606.6 592.8L606.6 595.3L607.0 597.5L607.1 600.0L606.5 602.9L604.8 605.3L602.3 606.7L600.0 606.9L597.4 606.9L594.7 607.1L591.9 607.7L589.2 608.5L586.6 609.0L583.9 609.2L581.2 608.9L578.7 608.6L576.3 608.5L574.0 608.7L571.3 609.1L568.4 609.1L565.7 608.5L563.2 607.3L561.1 606.0L557.9 604.5L554.6 603.7L551.8 603.1L550.0 602.3L549.8 600.1L552.7 599.0L554.4 599.3L557.0 599.7L559.9 599.4L562.9 598.2L565.5 596.5L567.7 594.9L570.1 593.7L572.6 592.7L575.0 591.5L577.0 590.0L578.9 586.9L579.7 583.5L580.5 580.5L581.7 577.5L582.9 574.2L582.7 570.7L580.7 567.9L577.6 566.5L574.2 566.3L571.6 566.6L568.8 566.7L565.8 566.5L562.9 566.3L560.0 566.7L557.2 568.0L554.6 569.3L552.1 569.9L549.1 569.3L546.8 567.8L546.1 566.3L546.0 564.4L545.8 561.8L545.7 559.4L546.6 557.9L548.8 556.4L551.6 555.7L554.5 555.5L556.9 555.5L560.0 555.3L563.1 554.8L565.7 554.4L567.1 554.1L567.7 552.0L567.5 548.3L567.5 545.2L567.6 542.9L567.3 540.6ZM671.0 542.6L672.3 541.2L674.8 539.9L677.9 539.4L680.9 538.8L683.3 537.7L685.2 536.9L687.5 538.4L687.9 541.7L687.2 545.5L688.4 548.9L691.5 550.3L694.8 550.6L697.5 551.8L699.2 553.9L700.2 555.5L702.0 557.1L704.3 558.7L706.2 560.7L707.0 563.1L707.3 566.0L707.7 568.7L708.7 571.3L709.4 574.0L708.4 576.8L705.6 579.0L703.1 581.6L702.7 585.4L705.5 588.3L708.7 589.8L710.4 592.2L711.2 594.9L712.7 597.5L713.7 600.2L712.8 602.5L710.5 604.0L707.4 604.6L704.3 605.2L702.4 606.1L700.1 607.2L697.4 607.7L694.7 607.1L692.0 606.4L689.7 606.4L687.1 607.1L684.4 607.9L681.8 607.8L679.3 606.8L676.7 605.7L674.1 605.3L671.1 605.7L668.2 606.0L665.5 605.3L663.3 603.8L662.3 602.8L660.6 601.3L660.4 601.2L661.1 600.5L663.7 599.7L667.0 599.9L670.2 599.8L672.7 598.9L675.6 597.5L678.4 596.7L681.1 596.7L683.6 596.4L685.9 594.3L686.4 591.2L685.9 588.0L686.0 584.9L686.8 582.1L687.4 579.1L686.7 576.1L685.0 573.5L683.4 571.6L681.4 569.3L679.3 567.2L676.5 566.2L673.2 567.5L670.5 570.2L667.8 571.8L665.4 574.1L665.7 574.1L665.7 573.0L662.8 570.6L659.4 568.8L656.4 568.2L653.1 568.0L650.5 568.5L648.7 568.9L646.5 567.6L645.3 564.5L646.1 561.2L647.2 559.3L648.6 557.7L651.1 555.9L654.9 555.1L657.2 555.7L660.0 556.5L663.0 556.2L666.0 555.0L668.4 554.0L670.1 553.3L670.9 550.9L669.9 547.6L668.7 545.4L667.9 543.3ZM772.7 543.5L774.2 542.2L777.0 541.2L780.5 540.8L783.8 540.3L786.2 539.3L787.2 538.4L789.0 538.8L790.4 541.6L790.7 545.2L791.5 548.4L794.3 550.4L797.6 550.9L800.8 552.2L802.3 554.1L803.3 556.7L804.0 559.6L805.1 562.2L806.7 564.2L808.3 565.6L810.0 568.5L809.8 571.4L809.4 574.0L810.2 576.6L811.6 578.8L813.1 580.9L814.1 583.1L814.8 585.9L814.9 588.9L814.7 592.0L815.6 595.8L817.7 598.5L819.4 600.3L820.1 602.6L819.2 605.1L816.2 606.6L814.2 606.7L811.8 606.7L809.3 606.9L806.5 607.6L803.8 608.2L801.1 608.3L798.8 607.7L796.1 606.7L793.9 605.8L791.5 605.5L788.8 605.8L785.7 606.4L783.3 606.7L780.6 606.4L777.9 605.4L775.3 604.5L772.7 604.0L770.3 603.9L768.4 603.8L765.0 602.7L763.3 600.8L763.4 600.2L764.1 600.1L765.9 599.1L768.5 597.3L770.3 596.2L773.0 595.5L775.9 595.6L778.7 596.5L781.4 597.3L784.0 597.1L786.8 595.3L788.6 592.6L789.8 589.9L791.0 587.2L791.9 584.3L791.9 581.0L790.8 578.1L788.9 575.7L786.4 573.0L784.6 570.2L783.6 567.3L782.3 563.5L779.4 561.5L776.4 562.4L774.1 564.6L771.9 567.0L769.7 569.9L767.6 573.1L767.8 574.0L767.3 573.6L763.8 571.8L761.1 571.6L758.1 570.8L755.4 568.8L753.5 566.9L751.0 565.2L748.6 563.9L747.2 562.8L747.0 559.8L749.8 558.0L750.9 557.9L753.1 557.2L755.6 555.9L758.4 554.5L761.2 553.9L763.8 554.1L766.8 555.1L769.8 556.2L772.8 556.5L775.4 556.1L777.9 554.7L777.6 551.0L775.9 546.9L774.3 544.7ZM41.7 646.7L43.5 644.5L46.7 643.7L49.8 644.0L52.1 644.3L53.8 644.9L55.8 646.5L57.2 648.9L58.4 651.5L60.8 654.2L63.6 655.5L66.8 656.3L69.0 657.5L70.8 659.7L72.2 662.3L73.6 664.6L75.4 666.4L76.9 668.7L77.3 671.5L76.3 674.3L75.2 677.0L75.2 679.7L77.5 682.3L80.5 683.6L82.5 686.1L82.5 688.5L82.3 691.4L83.0 694.1L84.4 696.6L85.5 698.9L85.9 702.3L85.1 704.8L83.9 706.6L82.6 708.2L80.3 710.5L77.3 711.8L74.2 711.6L71.4 710.8L68.7 710.4L65.9 710.7L63.2 711.3L59.9 711.7L56.7 711.6L54.7 711.5L52.3 711.5L48.2 711.5L45.9 711.2L43.4 710.2L40.7 708.8L37.8 708.1L34.9 708.1L32.6 707.9L29.4 706.2L27.9 703.9L27.9 703.2L28.6 702.1L30.9 700.0L32.6 699.7L35.2 700.3L37.9 701.7L40.6 702.8L43.1 702.8L47.0 702.5L50.2 703.0L52.4 703.3L54.4 701.5L55.3 698.1L54.8 694.5L54.6 691.7L55.2 688.7L56.4 685.8L56.7 682.7L54.3 679.4L51.0 678.2L48.8 676.7L46.7 674.4L43.4 673.0L40.2 674.5L38.3 677.7L36.9 680.8L34.7 681.8L34.0 679.2L35.1 675.1L33.5 671.7L30.6 671.8L27.8 673.0L24.5 673.5L21.5 673.0L20.8 672.6L18.8 671.1L17.2 668.4L17.9 666.2L20.1 664.4L22.5 663.3L24.3 662.6L27.2 661.7L30.2 661.2L32.7 661.5L35.7 661.6L38.6 660.6L40.5 658.0L40.7 655.0L40.6 651.9L41.7 649.1ZM153.7 649.9L155.6 647.9L158.2 646.0L161.6 645.9L163.6 647.1L165.5 649.0L167.4 650.9L169.6 652.4L171.8 653.6L173.7 655.2L175.0 657.3L175.6 659.9L175.9 662.5L176.5 664.8L177.5 666.9L178.9 669.3L179.9 671.9L180.3 674.6L180.3 677.2L180.7 680.3L182.0 682.8L183.9 685.1L186.0 687.7L187.0 690.1L187.5 693.3L187.9 696.5L188.9 699.3L190.3 701.5L191.2 703.2L191.1 705.9L189.5 707.1L186.6 707.8L184.8 708.3L182.7 709.5L180.4 711.2L177.9 712.9L175.1 713.6L172.3 713.6L169.6 713.3L166.8 713.6L164.0 714.4L161.2 715.1L158.9 714.9L157.1 714.1L156.0 710.9L157.1 708.1L157.7 706.8L159.1 704.3L161.0 701.7L162.7 699.2L163.6 696.1L163.5 692.9L162.0 690.0L159.8 687.7L157.7 685.7L155.9 683.4L154.6 680.9L153.7 678.8L152.7 675.2L150.7 672.6L147.9 671.3L144.8 669.4L140.9 668.9L138.2 671.7L137.5 675.6L137.5 679.2L137.3 680.6L137.2 679.7L136.6 676.2L134.0 673.0L130.7 673.2L127.9 674.9L125.1 676.8L122.2 677.4L120.1 676.9L118.3 673.8L117.8 670.6L118.2 668.3L120.0 665.8L122.5 664.7L124.8 665.4L127.6 666.4L131.0 666.2L133.8 665.0L136.7 663.9L139.6 663.3L142.5 662.9L145.6 661.1L147.4 658.2L148.4 655.2L149.3 652.5L150.7 650.3ZM131.8 706.0L133.2 705.0L136.2 703.8L139.7 704.0L142.4 705.5L145.2 707.3L147.8 708.3L149.4 708.6L151.1 710.4L149.9 712.3L148.2 712.2L145.4 711.8L142.4 712.1L139.8 712.9L136.7 713.4L133.9 712.4L132.3 710.7L131.5 707.8ZM255.2 648.5L257.7 646.3L261.2 646.0L264.3 646.5L266.4 646.5L269.2 646.2L272.0 646.9L274.2 648.8L275.8 650.5L278.0 651.9L280.7 653.0L283.0 654.7L284.1 657.2L283.7 659.7L282.7 662.1L282.3 664.8L282.6 667.6L282.8 670.3L282.7 672.9L282.8 676.0L283.9 678.7L285.9 680.6L288.4 681.9L290.4 683.5L291.7 686.2L292.2 689.2L293.0 691.9L294.1 694.5L294.7 697.1L294.2 699.9L292.6 702.4L291.1 704.5L290.6 706.1L289.6 708.5L287.5 710.6L284.4 711.4L281.2 711.7L278.9 712.6L276.4 713.8L273.8 714.7L271.1 714.2L268.5 712.9L266.0 711.8L263.5 711.6L260.8 711.8L258.2 711.7L255.6 710.8L253.0 709.3L250.0 708.7L246.7 709.0L243.8 709.0L241.9 707.9L241.0 705.2L243.0 704.3L244.3 704.3L246.8 703.7L249.8 703.1L252.9 703.5L255.7 704.1L259.5 703.8L262.5 701.5L264.2 698.9L264.8 696.4L265.5 693.3L265.2 689.8L263.9 687.6L262.0 685.6L260.5 683.4L259.7 680.6L259.2 678.0L257.2 674.7L253.9 672.8L250.9 672.0L248.5 673.7L245.7 676.0L243.5 677.5L241.1 680.2L238.0 681.9L235.1 681.6L232.2 680.6L229.7 680.0L227.7 679.9L225.7 679.1L224.1 677.0L223.6 674.5L223.7 672.7L223.7 670.9L223.8 668.1L224.8 665.2L226.8 663.6L229.8 663.6L232.7 664.2L235.6 663.9L238.6 663.8L241.6 664.9L245.0 665.8L248.5 664.4L250.4 661.1L251.3 657.5L252.5 654.5L254.4 651.7ZM361.9 650.2L363.4 648.8L365.3 646.6L368.0 645.0L371.1 645.1L373.1 646.3L375.1 647.9L377.4 649.2L379.9 650.2L382.2 651.5L383.6 653.4L384.1 656.1L384.3 658.8L385.2 661.3L386.8 663.8L388.2 666.1L388.5 669.0L387.6 671.8L387.0 674.5L387.6 677.3L389.6 679.5L391.7 681.4L393.1 683.9L393.6 686.6L394.3 689.7L395.8 692.0L397.4 694.5L397.6 697.0L396.6 699.7L395.1 702.2L394.1 704.8L393.2 707.8L391.5 710.7L388.6 712.2L385.5 712.7L383.0 713.1L380.7 714.1L378.3 715.3L375.5 715.5L373.2 714.6L370.8 713.2L368.0 712.4L364.9 712.4L362.2 712.4L359.2 711.7L356.4 710.1L354.0 708.7L352.2 708.1L348.9 706.9L347.8 705.6L349.8 704.6L354.0 704.3L355.7 704.0L358.7 703.1L361.8 702.6L364.5 703.1L366.8 703.6L370.1 702.6L372.0 699.8L371.8 696.6L370.6 694.3L369.1 691.8L367.9 688.8L366.5 686.3L364.4 684.5L361.6 683.0L359.3 681.3L357.9 679.2L357.1 675.9L356.0 672.9L353.4 671.7L351.7 673.8L350.5 676.8L348.1 679.1L346.5 679.4L345.4 678.5L342.4 677.4L338.5 676.6L335.6 675.7L332.7 673.9L329.9 672.7L327.8 672.1L325.6 670.6L326.0 668.1L327.6 666.7L330.4 665.7L333.0 664.9L334.7 664.0L336.7 662.9L339.3 662.3L342.6 662.5L345.0 663.2L347.8 663.9L350.9 663.5L353.6 662.4L355.4 661.3L356.9 659.7L358.8 657.2L360.3 654.2L360.7 651.5ZM35.3 761.1L37.7 761.3L40.5 761.1L43.3 759.6L46.2 757.6L49.2 756.7L52.1 757.1L54.5 757.8L57.9 758.0L60.8 757.9L63.1 758.8L64.7 760.8L65.6 763.4L66.6 765.8L68.7 768.1L70.7 770.9L71.1 773.2L70.6 775.8L70.0 778.4L70.0 781.1L70.2 783.8L70.0 786.2L68.6 788.7L66.4 790.7L64.5 792.5L63.5 794.1L62.7 795.6L60.9 796.8L58.2 796.8L55.4 795.6L52.9 794.6L50.7 794.2L47.4 792.6L45.9 789.2L46.9 786.4L48.8 785.4L51.4 783.4L53.2 780.2L54.3 777.3L55.9 774.2L56.7 771.0L55.8 767.8L51.7 766.6L48.2 767.0L46.4 767.9L44.1 769.8L42.3 772.2L41.2 774.7L40.0 777.4L37.9 779.4L36.1 780.1L33.7 780.6L31.3 780.8L29.3 779.7L27.7 776.8L27.5 773.4L27.3 770.6L26.1 767.2L26.3 764.4L28.3 763.1L31.5 762.9ZM39.3 806.2L41.5 805.7L43.7 804.7L46.1 803.4L48.8 802.4L51.8 802.1L54.7 801.6L57.4 800.4L59.2 798.5L60.7 796.1L62.4 794.1L64.8 792.6L67.5 791.5L69.9 790.3L71.6 789.0L72.8 787.6L75.5 785.5L78.3 784.8L80.7 785.3L82.2 785.9L83.7 786.7L85.6 788.1L87.4 790.5L87.9 793.0L87.2 795.8L85.4 798.4L83.8 800.7L82.6 803.1L81.1 805.6L78.8 807.6L75.4 808.7L73.0 809.2L70.6 810.3L68.3 812.3L66.0 814.5L63.5 815.8L61.0 816.4L57.7 817.1L55.1 818.3L52.8 819.9L50.2 821.2L47.6 821.4L44.6 820.7L41.9 819.6L39.6 819.2L38.3 819.3L35.6 818.2L34.0 815.4L33.9 812.2L34.4 809.3L34.6 806.2L34.9 803.6L36.1 802.9ZM138.4 765.4L139.7 764.2L141.8 762.6L144.7 761.7L147.9 761.6L150.9 761.1L153.3 759.6L155.6 757.7L158.2 756.4L161.0 756.2L163.7 756.5L166.0 756.5L167.8 756.3L171.2 756.8L173.2 759.2L173.5 762.7L173.5 765.3L174.2 767.9L175.4 770.5L176.0 772.9L174.7 775.6L172.3 778.0L171.1 781.2L171.5 784.7L171.6 787.9L170.4 790.5L168.2 792.7L166.5 794.6L165.4 795.8L163.3 796.5L160.3 795.7L158.2 793.3L157.1 791.3L155.1 789.5L152.5 787.8L150.7 786.1L150.0 782.7L151.5 780.1L153.2 778.1L155.1 775.1L156.9 772.8L159.6 770.6L160.0 767.4L155.7 766.7L151.6 769.6L150.6 773.2L149.3 776.5L147.2 778.3L145.4 779.2L142.8 781.1L139.9 782.5L137.3 782.3L135.6 780.0L135.1 777.2L134.7 775.2L134.6 772.1L136.0 768.9L136.8 767.1ZM144.3 804.8L146.1 803.8L148.5 802.8L151.2 802.2L154.2 802.2L157.5 802.4L160.0 802.2L162.6 801.4L164.9 799.8L167.0 797.8L169.1 796.1L171.2 794.8L173.3 793.7L176.1 791.4L177.5 788.6L178.1 786.1L179.0 784.0L181.7 782.0L185.1 782.1L187.1 784.6L187.3 786.2L187.7 788.5L188.6 791.0L189.9 793.7L190.7 796.5L190.8 799.2L190.4 801.4L189.7 804.4L189.5 807.1L189.2 809.8L187.9 812.6L186.0 814.0L183.5 814.6L180.6 814.4L177.6 814.2L174.8 814.5L172.1 815.5L169.6 816.5L167.1 817.2L164.4 817.3L161.7 817.2L159.1 817.2L156.8 817.8L154.0 819.3L151.4 820.9L148.7 821.9L146.2 821.8L144.2 820.8L142.5 818.7L141.0 816.4L139.3 814.1L138.1 812.3L138.5 808.8L140.9 806.7L142.1 806.3ZM242.5 764.5L244.5 763.2L246.8 762.3L249.2 760.9L251.2 759.1L252.9 757.4L255.0 755.5L257.1 754.4L260.0 754.6L262.0 755.0L264.6 754.8L267.5 754.2L270.4 754.3L272.6 755.5L273.6 757.0L273.8 758.4L274.2 760.2L275.3 762.7L276.3 765.6L276.7 768.4L276.5 771.0L276.8 774.3L277.9 776.8L279.3 779.0L279.8 781.9L278.8 784.3L276.5 786.5L273.6 788.4L271.4 790.6L269.8 792.8L268.3 794.3L265.8 794.4L263.6 792.5L261.5 790.2L258.9 788.7L256.0 787.7L253.3 785.9L251.4 783.3L249.5 780.7L245.9 779.1L242.3 779.2L239.6 777.7L239.1 775.3L240.0 772.5L241.5 769.8L242.5 767.2ZM257.6 808.1L259.1 807.0L261.1 806.1L263.7 805.6L266.5 805.0L269.1 803.7L271.3 801.7L273.1 799.6L274.8 797.7L276.9 795.8L279.1 793.8L280.9 791.4L281.8 788.7L282.2 785.9L282.6 783.5L283.5 781.6L287.1 779.1L290.2 778.5L292.0 778.6L293.5 779.7L295.3 782.6L295.9 786.4L295.8 788.9L295.7 791.6L296.3 794.2L297.5 796.6L298.6 799.2L299.0 802.1L298.3 805.0L296.8 807.6L295.3 809.7L293.9 811.4L292.5 812.6L290.3 813.4L287.7 813.4L284.8 812.7L281.8 811.9L278.9 812.0L276.2 813.2L273.8 815.1L271.5 816.9L268.9 817.9L266.3 818.1L263.9 818.0L260.9 818.0L258.3 818.5L255.8 818.8L253.2 818.5L250.4 817.2L247.6 815.3L245.4 814.0L244.1 813.5L242.7 811.9L242.0 808.5L243.0 805.4L244.6 804.0L246.6 805.0L249.7 807.2L252.9 808.4L254.9 809.1ZM348.1 765.1L349.4 763.7L350.9 761.7L352.8 759.7L355.3 758.4L358.2 758.0L360.9 757.9L363.5 757.3L366.1 755.8L369.0 754.4L372.1 754.1L374.8 754.9L377.0 755.8L379.2 756.7L381.8 757.7L384.4 759.3L386.1 761.7L386.8 764.5L387.1 767.1L387.5 769.6L388.3 772.4L388.9 775.3L389.1 778.0L389.9 780.7L393.5 782.2L396.8 781.5L398.6 781.0L399.8 781.7L401.4 783.8L402.0 786.7L401.7 789.8L401.5 792.7L401.8 795.2L402.4 797.9L402.5 800.8L401.6 803.4L400.1 805.6L398.6 807.1L397.2 808.9L396.3 810.3L394.9 812.0L392.5 813.8L390.5 814.3L388.1 814.5L385.5 814.7L382.9 815.6L380.4 817.1L377.9 818.7L375.5 819.4L372.7 819.5L369.9 819.2L367.2 819.3L364.8 820.0L362.5 820.7L360.1 820.8L357.4 819.7L355.0 817.5L352.7 815.6L350.2 814.5L348.0 813.7L345.9 811.7L345.2 808.7L345.6 805.9L346.0 804.4L347.3 802.8L350.2 801.0L353.7 800.8L355.6 802.7L356.7 805.7L358.7 808.6L362.1 809.6L364.8 808.8L367.4 807.7L370.5 807.0L373.9 806.5L376.8 805.1L378.9 802.8L380.2 799.2L381.6 795.5L383.9 792.5L385.3 789.9L384.8 787.4L382.5 787.8L380.8 789.8L378.7 792.4L375.7 794.1L372.4 794.8L370.7 794.8L368.3 794.7L365.5 794.1L362.9 792.2L362.2 789.7L362.0 786.4L360.8 783.2L358.4 781.1L355.2 781.5L352.0 782.5L349.3 781.6L348.1 778.9L346.8 775.9L345.3 773.0L345.0 770.2L346.2 767.6ZM462.9 653.1L464.4 651.4L467.1 650.2L470.0 649.5L472.3 648.5L473.9 647.3L476.2 646.3L478.9 646.7L481.3 648.4L483.5 650.3L486.1 651.5L489.4 652.4L492.1 654.3L493.2 657.4L492.9 659.6L492.4 662.1L492.4 664.8L492.8 667.6L492.9 670.3L492.6 672.8L492.7 675.9L493.5 678.7L495.2 680.8L497.3 682.3L498.9 683.9L500.0 686.5L500.2 689.2L500.1 691.7L500.4 694.2L500.7 696.9L500.3 700.1L498.5 702.8L496.1 705.0L494.4 706.9L492.9 710.0L491.4 712.3L488.8 712.9L486.6 711.5L484.4 709.2L481.6 707.5L478.8 706.5L476.7 705.1L475.4 703.0L474.9 700.6L474.6 698.5L474.0 696.3L473.2 693.3L473.0 690.3L473.4 687.9L474.2 683.8L472.1 680.6L469.6 680.0L466.7 680.1L463.7 679.6L460.9 678.2L458.1 677.2L454.4 677.7L451.9 679.5L449.6 680.5L447.0 679.4L444.7 677.1L442.0 675.3L438.6 674.4L435.4 673.0L434.2 670.5L435.4 667.7L437.2 664.9L438.8 662.0L440.8 660.4L443.7 659.9L446.8 660.8L449.4 661.7L452.0 662.1L455.2 662.2L458.2 662.7L461.1 662.7L463.3 660.0L463.9 656.6ZM454.0 703.3L456.2 702.0L459.3 702.0L462.2 703.6L463.8 705.2L466.1 706.8L468.9 708.0L471.5 709.1L472.9 710.0L473.3 712.2L471.0 713.1L469.2 712.8L466.5 712.6L463.4 712.8L460.4 713.2L456.8 712.8L453.8 711.1L452.6 709.4L453.5 706.9ZM550.2 660.7L552.3 661.2L555.1 661.8L558.2 661.2L560.9 659.6L562.8 657.4L565.4 655.4L568.3 653.5L570.3 651.8L572.4 649.8L574.9 648.8L578.3 649.5L580.4 650.7L583.0 651.8L585.9 652.1L588.8 651.8L591.4 652.3L593.0 653.6L593.5 655.6L593.6 657.9L594.1 660.6L595.3 663.5L596.4 666.0L596.9 668.9L597.0 672.0L597.5 674.9L599.1 677.6L600.9 679.5L602.6 681.6L603.6 684.1L604.0 686.7L604.2 688.7L605.0 691.0L606.2 693.5L606.8 696.2L606.2 698.7L604.6 700.7L602.8 702.5L601.3 704.9L600.1 707.6L598.6 710.1L596.0 711.9L593.2 712.6L591.4 712.5L589.8 712.0L587.4 711.1L585.0 709.4L583.7 706.9L583.3 704.3L582.8 701.7L581.3 699.0L578.9 696.4L577.4 693.9L576.7 690.8L576.0 687.6L574.2 685.0L571.9 683.5L569.2 682.8L566.6 682.0L563.8 680.8L561.1 679.6L558.3 679.1L555.3 679.4L552.6 679.3L550.5 678.2L548.6 675.7L546.8 673.6L544.8 672.1L543.0 669.7L542.6 666.6L543.8 664.1L545.6 662.8L547.7 661.5ZM559.1 701.5L561.2 702.2L564.0 702.9L567.0 702.7L570.3 702.8L573.3 704.5L574.6 706.5L575.5 708.3L576.7 710.8L576.4 713.3L574.0 714.3L570.8 713.3L567.8 711.7L565.2 711.1L562.0 710.5L559.6 708.7L559.0 706.9L559.6 704.4ZM655.0 656.1L657.0 655.2L659.6 654.8L662.4 654.8L665.3 654.7L668.0 654.2L670.5 653.0L673.0 651.7L675.6 650.9L678.3 651.0L680.8 651.9L683.3 653.3L685.8 654.4L688.6 654.9L691.4 655.0L693.7 655.6L696.3 657.9L697.3 661.2L697.3 663.8L696.2 665.5L694.3 667.8L693.7 670.5L695.1 672.7L697.0 675.6L699.0 678.8L701.4 681.4L705.2 682.6L708.8 682.3L711.6 683.5L712.5 685.6L712.5 688.4L711.7 691.3L710.8 693.9L710.2 696.1L709.1 698.6L707.1 700.9L704.3 702.7L701.5 704.2L698.9 706.6L697.6 708.8L695.8 711.1L694.1 712.2L691.8 712.9L689.2 712.8L686.5 712.0L683.7 710.9L680.8 710.2L677.8 710.3L674.6 711.2L671.4 712.0L668.3 712.1L665.6 711.7L664.1 711.3L661.0 710.0L659.4 707.6L659.2 704.3L661.1 700.9L663.8 699.6L665.8 700.5L668.4 701.9L671.2 702.7L673.7 703.6L676.1 705.1L678.7 706.0L682.2 705.7L686.0 704.3L688.3 701.4L687.9 698.3L686.4 695.3L685.3 692.3L684.1 689.2L682.4 686.2L680.8 684.1L679.2 682.4L677.1 680.2L674.5 678.8L672.1 678.6L669.3 678.4L666.3 678.2L663.4 678.0L660.5 678.5L657.7 679.4L655.0 679.7L652.7 678.8L651.2 676.8L650.2 674.2L649.2 671.9L648.2 670.0L647.1 667.8L646.4 664.8L646.8 661.8L648.1 659.5L650.2 658.0L652.4 657.3ZM757.7 655.7L758.8 655.9L761.1 657.3L763.8 659.6L767.0 661.4L770.5 661.5L773.1 659.9L774.9 657.6L776.5 655.3L778.7 653.7L781.3 653.2L784.1 653.3L786.8 653.4L789.4 653.2L791.9 652.9L794.1 652.9L796.5 653.8L798.5 655.6L799.9 658.0L801.4 660.5L802.6 662.3L804.2 664.7L805.7 667.5L806.5 670.3L806.6 672.9L807.0 675.4L809.9 678.0L813.3 678.3L815.1 678.4L816.2 679.6L817.3 682.1L817.6 685.0L817.1 687.8L816.4 690.5L815.9 693.4L815.4 696.4L814.3 699.1L811.8 700.7L808.5 700.9L805.0 700.6L801.7 701.3L799.3 703.9L798.6 706.5L797.9 709.0L796.5 711.2L794.5 713.3L792.0 714.6L789.8 715.1L787.7 714.9L784.9 714.5L781.9 713.8L779.1 713.2L776.2 712.6L773.0 711.8L770.4 711.1L769.7 710.9L768.5 709.9L766.9 707.7L766.3 705.6L768.2 703.8L772.6 703.8L774.6 704.2L777.2 704.7L780.1 704.8L783.0 704.7L785.7 704.6L787.9 704.7L791.8 704.2L795.2 702.4L797.0 699.2L796.0 695.6L793.2 693.5L790.1 692.1L787.3 691.0L784.4 689.4L781.7 687.2L779.9 685.4L777.8 683.8L775.4 682.4L772.9 680.9L770.7 679.5L768.5 677.7L766.5 675.8L764.7 674.3L763.4 673.5L761.5 671.8L760.0 669.2L758.9 666.2L758.3 663.3L758.2 659.6L758.3 656.8ZM458.1 755.4L461.3 754.3L464.4 753.7L467.2 753.4L469.2 753.1L472.0 753.0L474.8 753.8L477.2 755.4L478.8 757.2L480.3 758.8L482.0 760.2L484.0 761.8L485.9 763.9L487.1 766.4L487.4 768.8L487.3 771.6L487.4 774.3L487.9 776.9L488.6 779.4L488.8 781.8L488.0 784.3L486.2 786.4L484.0 788.0L482.2 789.4L480.9 790.7L479.2 792.5L476.9 794.0L474.2 794.5L471.6 793.8L469.8 792.7L467.8 791.4L465.3 790.4L462.6 789.6L460.2 788.8L457.7 787.2L455.7 785.0L454.2 782.7L453.0 780.9L451.6 778.7L450.4 776.1L450.1 773.0L450.9 770.5L452.2 767.8L453.3 765.4L453.7 763.2L454.4 760.3L456.0 757.7ZM451.4 809.1L452.6 807.1L453.5 804.2L454.4 801.0L456.1 798.8L458.3 798.0L460.2 798.9L461.6 800.9L463.7 803.0L466.6 804.3L469.2 805.1L471.7 806.7L474.2 808.8L477.1 810.3L480.3 810.3L483.0 808.9L485.2 806.9L487.3 805.1L489.6 803.6L491.8 801.8L493.0 799.6L493.1 796.7L492.6 793.8L492.4 790.9L493.2 788.4L494.5 786.7L497.1 784.3L498.5 782.3L499.9 780.9L501.8 780.7L504.3 782.0L506.1 784.3L507.2 786.6L507.7 788.3L508.4 790.8L508.7 793.7L507.9 796.5L506.2 799.0L504.6 801.0L503.3 804.2L502.8 806.8L501.3 809.5L499.4 810.8L496.7 811.6L493.8 812.5L491.2 814.3L488.8 816.6L486.6 818.2L484.0 818.9L481.2 818.9L478.4 818.8L475.9 819.1L473.5 819.9L471.0 820.4L468.4 820.1L465.9 819.0L463.5 817.8L461.1 817.1L458.8 817.1L455.1 817.6L451.6 817.3L449.1 815.7L448.0 814.2L448.4 812.0ZM556.0 763.0L556.8 760.7L558.1 758.5L560.4 756.9L563.1 756.0L565.8 755.2L567.9 754.2L570.7 752.7L573.8 751.7L577.1 752.1L580.0 753.3L582.5 754.4L584.0 754.9L586.8 756.2L588.1 758.9L587.9 762.2L587.0 764.4L585.8 766.9L585.5 770.1L586.3 773.2L588.6 776.0L590.5 778.9L590.7 781.8L589.5 784.5L588.3 787.6L586.9 790.3L583.9 791.7L580.4 790.9L578.2 790.0L575.7 789.5L572.4 789.4L569.9 788.8L567.5 787.3L565.5 784.9L563.6 782.6L561.5 780.9L558.7 779.8L556.2 778.9L554.2 777.4L553.5 775.1L554.0 772.8L554.8 770.3L555.2 767.7L555.1 765.1ZM560.1 809.7L560.6 809.8L562.6 809.4L565.1 808.7L567.9 808.1L570.9 807.8L573.9 807.7L576.7 807.3L579.3 806.2L581.5 804.4L583.4 802.2L585.2 799.9L587.2 797.9L589.5 796.5L591.9 795.3L594.6 793.6L596.7 791.2L597.9 788.4L598.7 785.8L599.5 783.7L600.5 782.5L603.2 781.9L605.3 782.9L607.5 785.2L608.7 786.4L610.6 788.3L612.6 790.6L614.1 793.4L614.6 796.4L614.4 799.3L614.0 801.5L613.3 804.5L612.8 807.0L612.0 809.5L610.5 811.7L608.7 812.8L606.5 813.3L603.8 813.5L600.8 814.0L597.6 815.4L595.5 816.8L593.0 818.3L590.2 819.3L587.1 819.5L583.9 819.2L580.9 818.9L578.3 819.0L576.2 819.4L573.0 819.7L570.1 819.1L567.7 817.8L565.7 816.3L564.1 815.0L561.4 813.2L559.7 811.7L557.6 810.0ZM552.0 802.6L553.0 801.4L556.1 799.4L558.3 799.4L559.1 800.8L559.3 801.6L558.2 803.3L555.1 805.8L552.1 805.9L550.7 803.6ZM662.7 763.6L664.0 763.0L666.4 761.5L669.4 760.4L672.6 760.3L675.8 759.6L678.1 756.5L678.1 753.4L678.8 751.4L681.1 750.7L684.1 751.5L686.8 752.9L689.0 754.0L690.8 755.4L692.3 757.7L692.5 760.8L691.8 764.0L691.8 767.0L692.9 769.6L694.4 772.1L695.1 774.7L694.8 777.2L694.0 779.2L693.5 781.4L693.4 784.0L693.1 786.9L691.7 789.2L689.5 790.4L687.1 790.7L684.5 791.1L681.7 792.1L679.0 792.8L676.5 792.6L673.2 791.2L671.1 790.0L669.3 789.0L667.9 788.0L666.5 785.6L666.2 782.5L666.2 779.4L665.2 776.7L662.1 773.9L659.6 771.5L659.0 768.7L660.1 765.5ZM703.5 778.0L705.9 776.9L708.7 776.2L711.2 775.5L713.7 775.4L716.9 776.2L719.0 778.7L719.4 782.0L718.9 783.9L718.5 786.1L718.5 788.7L718.5 791.5L718.1 794.3L717.1 796.7L716.2 799.0L715.7 802.3L716.3 805.2L716.9 807.8L716.3 810.5L714.6 812.2L712.0 813.2L709.2 813.6L706.7 814.2L704.5 815.1L702.1 816.2L699.2 816.8L696.4 816.5L694.2 815.6L693.1 815.0L691.9 814.0L690.2 811.8L689.0 808.8L689.2 805.7L690.6 803.1L692.6 800.8L694.2 798.2L695.1 795.5L696.2 793.0L698.2 791.0L700.5 789.3L702.5 787.0L703.1 783.4L702.2 780.1ZM658.8 801.1L661.4 799.4L665.0 799.0L667.5 799.5L668.6 800.2L670.5 801.9L672.2 804.2L673.9 806.6L676.5 808.6L679.7 809.6L682.5 809.1L684.8 808.8L687.3 810.2L688.4 812.7L688.3 814.2L687.5 815.4L685.7 817.5L683.2 819.3L680.6 819.4L678.0 818.1L675.5 816.2L672.9 815.0L670.5 814.4L667.9 813.6L665.7 811.9L664.1 809.9L662.7 808.2L659.6 806.5L657.7 805.6L657.2 803.5ZM766.5 760.4L768.5 759.2L771.2 758.2L774.0 756.9L776.6 755.1L779.1 753.3L781.8 752.2L784.8 752.0L787.7 752.8L790.0 753.9L791.1 754.7L791.9 755.9L792.7 758.4L793.2 761.5L793.5 764.6L794.3 768.2L795.3 771.2L796.6 773.7L797.9 775.9L799.1 778.6L799.5 781.5L798.8 784.0L796.7 786.3L794.4 788.1L791.9 789.7L789.9 790.6L787.2 791.3L784.3 791.0L781.7 790.0L779.5 788.7L776.7 787.2L774.1 786.2L771.2 785.2L768.9 783.8L767.1 781.6L766.0 779.1L765.3 776.9L764.7 774.4L764.1 771.7L763.6 768.7L763.4 765.6L764.3 762.7ZM775.4 811.8L776.3 812.6L778.5 813.2L781.6 813.2L784.8 812.9L787.7 813.0L790.3 813.1L793.5 812.0L795.9 809.6L797.2 806.3L798.4 803.4L800.0 801.0L802.0 798.7L804.0 796.3L805.3 793.6L805.8 790.7L806.2 787.4L807.5 784.5L809.3 782.3L810.7 780.8L813.0 778.5L815.9 776.7L818.7 776.9L820.0 779.3L819.4 782.6L818.4 785.9L818.0 787.9L817.6 790.7L816.9 793.8L815.6 796.5L814.7 799.4L815.7 803.3L818.6 805.6L820.9 807.9L821.2 811.2L819.7 814.1L817.3 815.6L815.8 815.8L813.6 816.3L810.7 817.3L807.4 818.0L805.1 818.1L802.6 817.9L799.9 818.0L797.3 818.9L794.8 820.3L792.4 821.4L790.0 821.7L787.0 820.8L784.2 819.4L781.7 818.4L779.4 818.0L777.5 817.8L774.4 816.2L773.8 814.2L774.2 812.8ZM759.9 804.1L761.8 801.8L765.1 800.1L768.2 799.8L771.8 800.8L774.0 801.8L774.4 804.6L772.4 807.8L769.7 808.3L766.4 807.8L764.3 807.6L761.5 807.1L759.3 806.2L758.7 805.5Z"/><path id="st" d="M52.9 37.3Q60.0 34.1 63.2 41.3M39.8 46.4Q44.8 43.3 50.6 42.6M54.5 42.8Q57.0 36.7 63.2 34.1M43.6 48.7Q38.5 45.9 34.1 42.3M79.9 53.7Q79.1 62.0 70.8 61.7M64.3 68.0Q64.9 72.1 63.6 76.0M65.7 69.4Q68.1 63.5 61.9 61.9M54.1 79.3Q51.6 85.6 58.4 86.2M66.5 77.0Q61.0 79.3 62.0 85.2M71.9 65.1Q78.6 67.0 81.6 60.8M149.7 51.6Q143.4 49.1 138.1 44.9M160.8 55.8Q166.5 52.7 171.4 57.1M172.9 57.9Q169.7 62.6 167.8 67.8M162.6 38.2Q161.4 44.4 160.5 50.7M162.7 71.0Q167.9 69.3 171.7 65.4M159.2 55.1Q157.6 50.0 155.4 45.1M171.2 78.5Q175.9 77.4 180.2 75.0M169.4 72.5Q174.5 71.9 176.5 67.1M152.5 53.5Q158.7 49.0 165.4 52.6M162.2 50.5Q167.0 52.6 172.1 51.6M143.8 31.8Q149.9 31.2 153.7 26.3M271.0 72.9Q279.3 71.7 282.4 79.5M284.4 51.5Q277.1 53.6 278.4 61.1M263.2 34.6Q263.3 39.6 258.5 41.2M266.2 35.3Q260.2 41.0 252.7 37.5M281.8 50.2Q275.4 51.7 268.8 50.6M282.6 67.1Q277.8 64.4 275.8 59.2M248.9 33.7Q252.2 40.8 260.1 40.3M273.2 41.0Q273.9 45.8 273.6 50.7M252.0 45.6Q257.2 45.3 262.3 45.6M367.1 55.0Q373.7 51.5 373.6 44.0M377.5 67.0Q382.4 70.5 378.6 75.1M365.2 47.3Q358.7 44.9 353.2 48.9M378.1 65.9Q377.2 71.4 375.3 76.6M362.3 40.1Q367.3 45.8 365.7 53.3M352.6 31.9Q346.4 33.8 347.1 40.2M357.2 47.9Q362.9 46.2 368.7 47.8M360.9 40.5Q363.8 45.6 369.1 43.0M386.0 63.1Q392.1 60.0 397.6 56.0M382.1 63.9Q376.2 66.8 380.2 72.0M355.3 41.9Q352.0 35.2 354.3 28.1M57.7 166.4Q62.8 171.5 68.0 166.4M60.0 171.9Q66.4 171.3 71.5 167.4M71.7 158.8Q68.9 154.3 63.9 156.2M65.5 172.9Q68.5 175.8 71.9 178.3M62.9 154.7Q69.7 159.5 64.9 166.2M70.5 161.5Q74.6 167.6 74.3 174.8M66.9 154.2Q66.2 160.5 59.9 161.3M147.9 138.1Q141.5 141.8 145.8 147.8M163.0 181.2Q157.7 185.3 152.0 188.6M168.7 170.3Q173.1 169.3 175.9 165.7M160.6 162.1Q163.4 166.1 166.5 169.8M170.9 164.9Q166.7 162.0 164.0 157.8M170.1 157.3Q166.6 153.3 164.3 148.4M178.2 178.8Q173.9 180.2 169.4 181.1M163.8 162.4Q170.8 159.1 175.2 165.4M272.0 150.7Q277.4 147.8 280.9 152.8M273.0 170.0Q268.3 174.7 264.6 180.2M277.2 155.3Q284.2 152.4 280.0 146.1M275.0 153.2Q271.6 147.6 275.9 142.6M275.3 171.6Q279.0 177.5 272.3 179.0M268.9 162.5Q270.4 157.2 275.9 157.1M267.7 147.4Q273.6 148.6 279.5 148.3M355.3 137.8Q352.3 142.3 356.0 146.2M375.2 169.0Q374.8 164.0 378.6 160.7M384.0 180.9Q383.5 176.1 381.7 171.6M383.9 170.4Q389.8 173.7 394.6 169.0M384.1 181.6Q378.1 183.2 372.7 186.4M381.1 172.3Q381.8 168.0 380.4 163.9M381.1 179.8Q374.3 179.4 374.5 172.6M385.0 153.1Q382.0 159.3 379.0 165.5M476.9 51.7Q478.1 46.1 473.0 43.8M479.9 50.5Q471.6 50.7 470.3 58.9M488.2 59.2Q481.7 61.7 486.1 67.2M490.8 61.2Q484.5 64.4 487.0 71.0M477.6 73.7Q483.3 74.0 483.8 68.3M482.5 53.3Q480.9 58.7 485.0 62.4M474.1 53.9Q468.2 54.6 466.3 49.1M478.1 46.2Q473.4 51.3 470.1 45.3M453.8 69.8Q449.5 69.7 445.6 68.2M577.2 41.0Q572.6 46.3 566.2 43.3M594.5 61.8Q587.5 62.5 583.7 56.8M587.6 52.7Q581.9 51.4 576.4 49.3M582.6 76.4Q587.6 72.7 587.4 66.4M596.2 61.7Q592.7 65.7 588.4 69.0M588.3 42.5Q584.8 47.1 579.5 49.7M595.0 55.1Q591.5 58.9 586.4 58.2M594.6 60.4Q592.3 56.4 590.1 52.4M701.6 64.4Q697.6 58.4 704.5 56.5M695.6 48.1Q702.1 50.0 700.3 56.5M669.3 36.8Q662.1 36.8 663.6 43.9M692.8 47.3Q700.2 49.7 699.6 57.5M689.6 39.2Q692.8 36.2 695.7 32.9M686.0 42.9Q688.6 38.0 687.4 32.7M687.4 45.4Q686.6 51.1 680.8 50.8M692.7 48.0Q686.4 49.0 682.5 54.2M687.5 70.9Q685.2 76.1 687.2 81.5M662.3 70.2Q662.7 76.8 669.2 76.2M800.9 68.9Q801.5 64.3 804.8 61.1M803.9 68.8Q802.2 75.4 795.4 75.6M780.0 47.8Q785.8 46.0 791.4 48.2M773.5 42.6Q768.8 41.8 764.0 42.6M793.6 65.9Q787.8 67.3 787.3 73.3M775.2 35.8Q780.6 35.7 784.2 39.8M798.8 60.5Q805.4 63.2 808.1 56.6M773.7 41.6Q778.6 39.5 782.6 42.9M800.1 66.8Q796.2 71.8 790.1 73.6M483.3 157.5Q490.0 159.5 493.1 153.2M495.2 160.3Q490.2 156.1 489.6 149.6M461.3 135.1Q463.5 143.1 471.8 142.2M466.2 143.4Q462.3 140.4 457.6 138.6M479.5 147.1Q476.0 152.3 472.3 157.3M483.6 163.0Q488.8 163.0 491.1 167.6M475.2 144.4Q478.4 139.7 474.7 135.3M482.5 151.1Q481.1 158.1 474.0 159.5M499.4 159.1Q498.2 165.3 504.5 166.0M476.2 139.1Q470.5 139.4 465.4 136.7M600.3 157.8Q606.2 157.1 607.2 163.0M587.5 153.3Q593.8 157.1 600.4 154.0M594.6 156.9Q602.4 154.6 605.8 162.0M592.6 173.2Q590.7 179.3 593.4 185.0M601.4 168.4Q596.3 164.6 601.0 160.2M600.7 158.0Q607.4 159.6 609.3 166.3M595.9 181.2Q597.1 176.8 600.9 174.2M596.1 178.1Q603.0 176.9 607.2 171.3M598.6 183.6Q595.5 176.9 601.6 172.8M697.4 162.8Q704.1 165.4 707.0 158.8M699.8 172.7Q696.6 166.5 699.4 160.2M696.9 166.2Q695.6 160.1 690.5 156.6M678.4 136.9Q678.9 144.8 686.8 144.1M707.4 171.4Q710.4 176.0 706.0 179.3M698.0 165.9Q691.9 164.4 693.1 158.2M692.1 142.2Q694.1 147.7 699.5 145.4M679.9 151.5Q679.9 144.5 673.1 143.1M691.6 184.4Q696.9 178.3 704.4 181.3M670.4 138.8Q669.7 132.0 676.5 131.8M675.6 141.1Q669.0 139.1 670.3 132.4M793.6 180.3Q799.4 177.4 805.2 180.3M796.5 138.8Q799.7 133.4 805.1 136.5M807.1 165.8Q808.1 160.7 813.3 160.4M804.4 155.7Q811.8 155.1 813.6 148.0M819.3 179.1Q812.3 177.2 812.9 170.0M809.5 178.7Q812.8 171.7 820.5 170.5M71.0 283.8Q76.3 286.3 81.8 284.5M73.3 274.4Q73.2 282.1 79.2 286.8M70.5 281.8Q76.2 282.7 76.9 288.5M65.0 256.3Q59.8 252.3 62.0 246.1M77.0 286.0Q75.2 279.9 69.5 276.8M66.5 286.9Q68.0 280.3 74.7 278.7M58.8 250.3Q64.2 247.9 66.8 253.2M73.2 284.1Q69.7 278.3 75.6 275.0M77.3 285.5Q79.2 278.0 74.3 272.1M48.2 253.8Q48.7 249.5 46.6 245.6M165.1 256.1Q167.1 249.9 162.7 245.1M180.1 281.1Q176.7 283.9 172.2 284.4M158.8 254.5Q158.2 261.9 165.6 261.2M179.4 288.5Q187.0 290.0 188.4 282.4M172.6 288.3Q177.8 283.7 172.9 278.8M178.6 280.1Q182.2 276.4 182.3 271.3M184.7 282.2Q179.5 284.1 178.9 289.5M159.3 257.2Q154.2 251.5 155.9 244.0M170.4 249.7Q169.4 254.9 168.7 260.1M177.9 279.7Q178.1 284.5 178.7 289.2M183.1 275.4Q185.2 280.6 189.9 283.8M259.1 244.1Q263.5 247.6 260.8 252.5M269.6 246.4Q263.7 247.3 262.2 241.5M293.3 279.5Q285.7 281.1 286.1 288.8M281.6 279.9Q285.3 277.0 290.0 277.1M293.4 283.4Q287.3 281.8 283.2 277.0M265.3 245.4Q267.9 252.5 275.3 254.3M284.5 273.4Q290.4 273.3 291.3 279.2M278.3 276.0Q284.4 280.7 288.2 274.0M255.9 248.5Q263.2 249.8 269.7 246.3M275.8 279.5Q267.0 278.6 264.2 287.0M378.8 285.9Q383.5 280.7 379.4 275.1M383.0 257.6Q388.6 264.0 383.0 270.5M388.1 280.7Q387.5 288.4 380.6 292.0M393.6 277.6Q393.0 272.9 393.3 268.2M385.9 269.2Q384.7 275.3 378.5 274.3M377.7 282.8Q376.4 276.5 370.1 278.0M397.2 276.8Q395.4 282.8 389.8 285.7M385.0 277.7Q392.2 276.5 397.5 271.5M380.0 286.9Q384.9 283.4 389.1 287.6M382.1 275.7Q384.8 281.3 388.6 286.2M358.8 242.2Q360.3 246.5 363.6 249.6M73.2 361.5Q79.2 362.8 77.4 368.7M54.6 347.0Q56.7 355.2 65.0 353.3M50.8 351.2Q47.5 347.7 46.3 343.1M72.2 361.7Q74.1 365.4 76.9 368.6M60.1 346.7Q60.7 340.1 54.8 337.1M72.7 371.0Q77.2 372.9 80.9 369.7M65.8 380.2Q63.6 386.1 58.8 390.1M74.4 389.1Q74.9 382.8 68.6 382.4M73.4 386.2Q67.6 390.3 61.1 387.6M76.2 380.8Q74.1 386.3 78.7 389.9M31.3 370.6Q28.1 375.7 30.0 381.4M169.4 355.5Q173.8 358.3 179.1 357.8M172.6 385.4Q174.5 379.9 178.7 375.9M165.1 353.4Q169.0 346.3 161.8 342.8M168.7 353.0Q175.4 355.1 180.5 360.0M176.2 378.7Q170.9 382.4 165.4 378.9M165.2 355.0Q161.0 353.8 156.9 352.2M182.4 371.9Q179.5 377.8 184.3 382.3M168.9 383.8Q161.1 384.1 161.9 391.8M185.1 377.2Q193.2 376.4 194.3 384.4M160.8 388.8Q162.7 382.0 156.6 378.5M180.2 391.8Q178.8 396.6 174.5 399.1M288.2 368.4Q280.8 368.5 278.7 361.4M290.0 383.7Q286.5 378.3 284.4 372.2M269.2 387.1Q276.3 384.2 282.7 388.5M277.6 356.6Q273.2 355.4 269.3 357.6M271.9 380.3Q274.5 387.7 282.4 388.0M285.7 379.6Q293.1 378.2 292.8 385.7M280.4 383.4Q284.9 377.7 289.7 383.1M265.3 382.6Q264.6 376.0 270.6 373.1M281.3 379.9Q281.2 386.2 284.7 391.3M265.6 353.5Q258.9 354.3 257.4 347.8M364.8 345.0Q361.1 349.1 356.1 351.7M376.2 360.3Q380.3 366.3 386.6 362.6M391.5 360.3Q387.4 365.0 391.4 369.8M360.7 351.1Q360.9 345.6 355.4 344.5M372.3 348.2Q376.4 351.8 380.6 355.5M385.5 357.6Q381.2 363.4 374.1 364.6M386.7 375.5Q382.0 378.6 377.4 382.1M386.9 379.7Q394.6 381.4 398.9 374.8M392.9 376.7Q394.3 381.0 397.2 384.6M356.6 349.7Q360.4 352.9 365.1 351.0M339.9 363.6Q341.3 369.6 344.3 375.0M491.0 290.3Q494.1 293.4 497.1 296.6M501.3 282.9Q496.1 282.5 493.2 278.0M488.6 264.9Q480.7 267.5 483.5 275.4M494.0 284.2Q491.1 280.7 486.9 279.2M472.2 246.6Q471.8 240.9 469.0 235.9M469.0 242.0Q470.4 247.3 475.5 249.3M487.9 286.3Q493.2 289.8 497.8 285.4M491.0 276.6Q492.1 270.4 497.6 267.3M491.8 275.9Q494.2 282.6 501.0 284.7M497.5 278.6Q501.0 273.6 499.9 267.7M464.6 238.6Q458.2 242.6 451.9 238.4M592.0 280.0Q596.2 275.2 602.6 274.4M584.6 249.9Q577.8 247.0 574.4 253.5M605.0 285.3Q602.9 292.3 595.9 294.5M599.1 261.9Q593.3 261.3 591.4 266.8M589.2 266.9Q586.0 271.0 580.7 271.1M593.9 276.6Q586.4 278.4 584.1 285.8M586.9 274.3Q587.7 278.3 588.2 282.4M591.3 249.3Q588.2 254.4 582.5 252.5M593.1 256.9Q591.0 249.9 584.6 253.4M594.2 266.2Q589.9 264.2 588.7 259.6M588.1 285.0Q593.8 290.3 598.3 284.1M707.8 267.9Q702.4 262.2 708.1 256.9M706.5 273.5Q700.0 273.8 694.9 277.8M696.1 279.5Q699.5 283.6 699.3 288.9M704.4 269.6Q711.3 273.0 710.1 280.6M691.0 249.5Q694.3 243.0 701.1 240.4M705.6 277.4Q703.2 270.6 696.8 273.8M708.2 268.6Q704.0 273.7 698.4 270.1M691.8 243.2Q694.4 239.5 694.2 235.0M711.8 282.5Q707.0 276.7 711.7 270.9M707.7 279.2Q706.2 285.1 702.8 290.2M696.0 285.2Q690.3 288.4 694.7 293.2M660.3 269.3Q659.2 264.6 661.7 260.4M807.2 280.2Q803.6 275.0 799.6 270.0M802.7 274.1Q799.7 268.5 793.4 268.3M799.3 254.3Q795.1 258.7 799.8 262.4M791.7 251.4Q796.5 257.6 804.1 256.2M805.7 283.7Q801.2 287.8 795.6 285.6M806.7 260.6Q807.1 265.6 811.8 267.2M801.2 272.8Q802.7 278.7 796.7 279.7M795.3 275.8Q794.7 282.3 788.2 282.4M805.7 260.7Q800.5 263.8 796.6 259.2M789.5 245.8Q795.5 243.2 802.0 244.4M781.6 236.2Q778.1 244.1 785.6 248.4M471.2 345.4Q466.1 350.8 458.7 350.7M488.8 366.3Q495.9 370.2 494.5 378.2M480.6 364.0Q476.3 357.5 468.9 360.0M490.5 384.5Q485.7 385.4 483.0 389.4M495.0 367.9Q491.9 361.3 497.7 356.8M491.6 384.6Q491.4 377.7 495.4 371.9M490.9 357.3Q485.1 358.8 486.0 364.7M494.7 369.1Q488.1 369.8 488.5 376.5M497.6 367.4Q492.0 366.6 487.0 363.7M487.9 385.4Q480.5 380.9 483.1 372.7M456.5 371.2Q454.1 366.1 448.5 365.6M582.3 374.4Q580.7 382.2 587.5 386.5M583.5 345.0Q577.0 350.4 581.9 357.3M576.1 356.6Q574.9 350.7 569.0 351.6M574.7 353.7Q576.9 360.3 580.9 366.0M586.6 382.2Q592.8 376.7 600.1 380.8M587.5 357.3Q584.0 349.4 575.5 351.0M595.1 356.5Q593.0 363.6 600.3 363.2M586.0 351.6Q579.4 348.1 572.2 350.0M593.6 389.5Q586.5 389.1 584.1 395.7M589.2 361.9Q593.5 364.5 597.8 362.1M671.6 342.1Q665.9 342.2 660.2 341.3M699.6 368.0Q692.3 372.1 694.9 380.1M701.5 360.6Q707.7 362.5 709.8 356.4M691.5 362.1Q686.4 366.7 685.4 373.5M702.2 363.8Q707.8 359.0 713.8 363.4M710.0 369.6Q707.7 366.0 703.8 364.5M693.5 383.0Q688.8 385.9 684.8 382.1M704.2 368.5Q699.1 373.3 695.6 379.3M687.3 353.6Q681.8 350.1 676.8 346.0M694.4 351.9Q693.8 357.4 694.0 363.0M658.3 366.7Q655.0 363.3 654.7 358.5M793.4 364.2Q796.8 357.0 804.6 358.6M798.2 375.7Q794.1 376.3 790.0 375.7M811.5 372.4Q814.3 378.3 819.9 374.8M800.9 385.8Q803.6 391.8 810.1 391.5M797.1 345.0Q795.3 349.1 792.7 352.8M801.0 392.2Q805.9 388.5 801.9 383.8M804.5 363.2Q801.1 368.0 802.8 373.6M782.1 338.8Q775.2 336.0 768.9 339.9M799.6 364.6Q793.5 361.8 793.9 355.1M796.6 366.5Q793.9 361.6 793.9 355.9"/><path id="sn" d="M51.7 459.8Q56.8 454.0 50.8 448.9M57.6 472.1Q62.9 474.8 62.4 480.8M64.3 463.5Q58.8 467.0 53.2 463.6M75.4 483.6Q74.1 478.2 71.2 473.4M34.8 468.1Q37.2 473.7 43.3 472.5M71.7 475.7Q65.7 472.7 68.0 466.4M57.5 445.5Q63.6 450.6 58.1 456.3M60.9 462.6Q66.5 467.3 70.3 461.1M67.6 470.7Q71.1 467.9 72.6 463.7M71.6 489.0Q69.4 485.4 67.7 481.6M55.9 476.2Q57.9 471.1 63.3 470.1M164.7 483.0Q168.8 485.4 169.6 490.2M174.3 482.3Q178.4 487.3 175.6 493.1M167.1 495.7Q166.3 491.1 165.3 486.6M170.2 476.1Q164.3 475.3 159.5 478.8M165.6 456.9Q171.8 455.2 178.0 456.7M173.7 474.0Q178.6 474.6 182.9 477.1M180.4 473.7Q176.7 467.3 183.4 464.1M166.4 488.5Q171.2 492.0 169.5 497.7M173.5 471.8Q168.6 465.7 174.8 460.9M135.4 468.5Q140.3 469.7 141.4 474.5M271.3 498.5Q275.8 494.3 281.0 491.1M269.5 475.4Q271.7 481.3 273.6 487.4M274.3 484.5Q270.0 483.6 265.9 481.8M254.7 451.4Q245.8 450.1 245.8 441.1M278.8 476.7Q274.1 482.9 268.4 477.5M283.6 491.4Q277.9 487.5 272.6 492.0M280.7 472.3Q288.8 475.3 287.3 483.8M279.8 476.2Q287.0 476.2 286.5 483.3M256.0 449.6Q252.1 445.3 247.9 441.3M236.8 467.2Q233.9 464.2 230.3 462.2M380.3 487.0Q374.5 485.3 372.7 491.1M391.1 484.8Q392.0 490.2 393.3 495.5M383.9 461.1Q380.9 455.4 374.6 454.5M380.9 492.5Q378.7 497.5 374.0 500.5M365.5 449.7Q363.7 456.3 365.4 462.9M381.8 459.6Q380.0 453.5 381.1 447.2M378.1 472.7Q384.5 475.2 384.8 468.3M373.4 462.9Q379.6 460.2 384.5 455.5M342.5 463.0Q347.1 462.8 350.5 466.0M382.7 478.9Q378.8 474.5 373.1 473.4M365.3 462.2Q366.9 457.4 370.4 453.8M358.9 449.1Q358.0 456.5 351.1 459.2M364.0 454.3Q356.3 455.4 352.8 448.3M65.1 573.9Q69.8 569.0 68.9 562.2M50.9 562.9Q54.3 568.4 60.9 568.2M64.7 570.7Q71.6 567.2 67.4 560.6M66.1 596.0Q65.5 601.5 65.9 607.0M73.8 569.2Q76.8 575.1 81.0 580.2M68.7 590.3Q60.1 589.4 59.0 580.9M61.1 552.6Q66.2 549.6 69.8 554.2M54.2 569.7Q50.2 570.3 46.4 571.5M69.8 571.7Q74.9 570.9 76.7 566.1M46.6 544.4Q39.3 544.5 40.1 551.7M72.1 579.8Q71.6 586.4 69.4 592.5M67.8 584.1Q73.3 588.1 79.8 585.9M68.2 567.7Q69.2 573.1 72.5 577.4M63.2 586.5Q62.3 579.1 55.5 576.2M141.6 572.2Q134.7 574.4 127.9 572.0M146.1 565.2Q151.7 560.7 151.9 553.5M153.5 547.7Q148.8 545.7 145.0 549.0M166.0 551.8Q163.0 546.8 158.1 543.7M178.9 581.7Q174.5 586.8 179.3 591.7M157.3 568.3Q161.5 572.4 165.9 568.4M153.4 558.4Q150.9 564.4 145.4 560.9M178.4 591.7Q184.8 594.8 181.6 601.1M145.4 563.9Q147.2 557.4 144.4 551.2M169.2 570.5Q161.9 574.1 156.4 568.2M163.0 560.2Q162.1 554.0 163.4 547.9M169.8 577.8Q166.6 571.0 169.4 564.1M150.2 564.8Q145.4 568.8 140.0 571.7M277.5 574.0Q282.0 576.6 287.0 577.5M264.7 564.2Q272.2 568.1 270.2 576.2M286.4 580.7Q284.4 575.4 286.6 570.3M273.6 578.5Q276.4 574.5 281.2 573.8M273.7 602.3Q268.4 608.2 261.2 605.0M270.2 561.7Q264.9 558.4 266.7 552.5M275.1 602.7Q269.6 601.7 267.9 607.1M258.3 558.9Q259.9 564.9 264.0 569.5M245.8 564.2Q239.4 569.4 232.4 565.0M279.5 572.3Q282.5 577.9 288.7 576.5M256.2 566.0Q254.9 561.7 250.9 559.7M253.3 562.7Q261.4 565.3 264.1 557.2M265.2 562.5Q259.5 558.2 252.3 558.3M372.6 553.1Q373.6 544.9 365.4 543.8M384.3 597.2Q386.4 593.6 386.6 589.4M374.7 568.3Q375.6 562.4 379.6 558.2M370.0 561.2Q376.5 557.9 382.1 562.5M381.2 588.6Q375.9 592.9 369.7 596.0M363.6 551.5Q364.8 545.0 361.6 539.2M381.5 586.2Q377.3 582.4 374.0 578.0M385.4 603.3Q390.3 598.7 396.0 602.3M377.7 561.5Q377.0 555.0 370.5 553.9M384.1 573.4Q382.0 566.2 374.9 568.3M383.4 582.3Q376.9 584.3 374.6 590.8M367.0 547.3Q373.2 553.0 368.0 559.7M375.3 567.0Q373.8 562.4 372.9 557.7M343.3 567.2Q350.6 565.4 352.4 558.1M487.6 465.6Q484.5 471.0 478.8 468.2M483.1 461.0Q477.3 461.6 473.7 457.1M464.9 445.8Q465.7 440.3 471.1 439.4M492.5 464.5Q489.6 468.8 484.6 467.8M473.0 449.9Q476.6 456.0 472.4 461.7M489.3 495.8Q485.1 497.2 481.6 500.0M484.0 474.0Q480.7 478.4 482.8 483.4M475.5 450.5Q470.4 454.1 464.3 453.0M476.8 472.8Q481.3 473.0 485.2 475.2M496.2 477.4Q501.2 473.7 497.4 468.8M492.2 473.4Q488.2 475.4 484.0 477.0M484.3 490.4Q492.0 491.1 493.0 483.5M474.1 444.6Q467.4 447.1 461.6 443.0M587.2 476.8Q588.7 469.8 595.3 472.5M588.3 459.6Q593.9 462.1 596.9 467.4M597.1 496.0Q601.5 497.7 605.1 500.8M579.8 455.0Q584.1 459.0 588.5 455.1M579.8 455.9Q582.8 462.1 582.7 468.9M577.9 463.1Q575.7 458.0 580.0 454.3M590.9 482.4Q590.9 476.6 586.2 473.2M564.6 450.0Q571.5 450.1 573.8 456.7M559.8 454.7Q552.0 454.6 552.5 462.3M596.8 471.0Q591.4 474.4 586.7 470.2M578.3 452.3Q574.9 447.3 578.1 442.1M587.4 489.8Q591.5 484.1 597.2 488.2M581.0 462.1Q586.2 460.9 588.5 465.7M674.5 457.9Q674.4 450.5 667.0 450.3M690.5 468.3Q684.5 467.4 678.6 468.9M700.8 473.4Q700.2 478.0 697.8 481.9M675.3 452.3Q677.0 458.9 683.4 461.1M697.8 462.4Q698.0 454.7 705.6 455.6M664.3 462.0Q659.7 457.5 656.2 463.0M681.2 452.6Q685.8 458.9 692.4 454.9M694.2 495.1Q694.6 487.1 702.6 486.6M673.3 449.3Q678.5 453.8 685.3 454.7M665.2 467.4Q669.4 465.3 671.3 461.0M666.7 458.9Q675.1 462.5 680.0 454.9M664.1 459.5Q659.8 456.4 660.8 451.1M701.2 469.8Q700.4 463.8 700.9 457.7M801.8 481.5Q796.3 483.0 791.0 485.2M801.9 489.2Q794.5 488.1 790.3 494.2M798.2 491.7Q803.3 496.0 806.2 490.0M794.5 454.7Q797.8 449.9 793.9 445.6M789.0 453.7Q783.2 458.4 784.6 465.7M784.5 461.7Q787.9 454.5 781.2 450.3M803.1 481.0Q800.4 476.6 795.3 475.6M785.2 458.8Q789.1 453.9 795.0 452.2M798.1 455.7Q802.5 458.4 806.3 462.0M800.3 466.3Q799.1 472.5 792.9 471.9M796.3 489.9Q794.9 497.0 787.8 495.7M796.8 456.9Q792.8 461.6 788.6 466.1M799.0 471.2Q793.0 472.2 786.9 471.3M798.5 460.8Q796.2 466.3 790.4 466.8M487.7 565.7Q483.6 570.0 478.1 568.0M493.4 599.0Q499.0 603.3 503.4 597.8M492.7 599.7Q498.1 599.4 503.3 597.9M473.4 560.1Q471.2 566.0 465.8 562.7M478.1 601.7Q484.1 600.6 487.5 605.7M480.3 566.4Q483.0 561.7 488.5 561.9M479.1 555.5Q473.2 552.3 475.1 545.8M486.1 564.7Q480.5 570.0 485.6 575.8M469.0 550.0Q474.5 551.9 477.9 556.6M473.8 545.2Q474.3 552.6 467.0 553.9M475.8 550.4Q470.3 553.8 474.2 558.9M479.3 561.9Q477.2 554.2 484.3 550.8M489.9 596.9Q491.0 602.2 495.9 604.3M601.8 592.2Q594.8 592.9 596.3 586.1M590.6 599.7Q587.5 603.3 583.6 605.8M598.7 592.9Q604.4 593.9 605.0 599.6M599.8 590.7Q595.8 586.1 589.7 586.2M589.3 599.2Q582.8 597.4 581.8 590.7M592.3 565.1Q592.5 572.1 596.4 577.8M578.4 550.8Q579.5 558.1 586.5 555.7M595.3 594.7Q589.4 596.8 592.4 602.4M596.6 593.5Q596.7 600.6 600.0 606.8M584.6 555.9Q582.9 551.2 583.0 546.3M591.0 598.3Q596.5 599.6 596.7 605.3M593.9 586.9Q589.4 581.2 591.2 574.3M587.1 566.6Q590.6 569.6 595.3 569.2M698.7 597.2Q691.8 597.4 689.5 590.9M694.2 602.1Q698.7 603.5 703.3 604.3M679.8 555.7Q681.2 562.0 687.6 562.8M700.9 577.9Q694.3 581.5 693.2 589.0M700.1 569.5Q696.0 564.2 690.8 568.2M696.3 599.4Q701.7 598.4 707.2 599.2M702.0 567.4Q705.8 571.9 705.2 577.8M698.9 592.6Q693.5 588.1 695.6 581.4M699.1 579.3Q692.2 579.7 693.0 572.7M682.1 557.2Q675.1 557.5 671.0 551.9M663.4 563.9Q669.0 566.9 673.8 562.6M666.3 565.3Q666.4 558.5 659.8 557.1M694.9 574.4Q696.0 567.0 691.5 561.1M808.2 600.9Q801.2 598.0 798.6 605.0M797.5 564.7Q800.7 569.5 806.0 567.5M795.4 558.3Q794.0 566.0 801.5 568.4M785.8 551.8Q783.7 559.5 790.9 563.0M791.9 551.2Q785.8 550.9 779.8 550.5M801.3 593.0Q798.6 599.7 792.5 596.0M797.7 563.3Q800.3 568.4 795.5 571.6M809.2 597.7Q804.6 602.4 809.3 607.0M805.9 601.5Q802.8 605.0 799.9 608.6M799.2 576.4Q797.8 581.5 800.5 586.0M790.8 560.0Q794.5 567.8 787.0 572.0M794.6 585.5Q788.3 590.2 791.7 597.2M797.1 599.7Q797.6 592.2 791.9 587.2M754.7 561.4Q758.5 557.6 763.9 558.2M42.5 667.2Q46.0 673.9 52.7 670.3M55.1 654.8Q50.2 660.0 48.4 666.9M63.3 686.1Q59.7 693.6 66.9 697.6M62.3 703.5Q64.6 707.5 66.9 711.5M46.4 657.4Q44.6 665.1 52.2 667.4M65.4 704.1Q69.5 699.3 75.2 702.0M72.4 691.8Q68.9 697.2 62.7 695.6M57.6 671.8Q51.7 673.0 46.9 669.4M49.6 664.6Q54.9 664.5 59.0 667.9M73.4 696.8Q67.1 702.7 59.9 697.9M66.0 683.8Q64.5 676.6 57.5 678.8M59.7 705.6Q66.5 706.4 67.6 699.7M63.0 670.6Q68.0 672.4 71.5 668.5M164.6 683.5Q168.8 689.0 174.2 693.2M163.3 664.4Q170.7 665.3 169.0 672.6M160.2 664.6Q161.4 670.1 162.9 675.6M170.8 673.5Q166.5 671.2 161.6 671.9M173.6 701.3Q180.6 703.2 187.2 700.2M151.9 664.6Q148.4 660.1 148.9 654.5M170.3 699.0Q171.6 703.7 175.6 706.6M165.7 687.5Q172.1 685.8 176.3 680.6M158.8 661.6Q164.3 665.4 167.9 659.8M160.2 668.4Q165.9 663.4 171.9 667.9M167.9 664.1Q167.1 659.0 171.8 656.9M169.5 700.6Q162.4 702.7 159.6 709.5M154.2 665.6Q156.1 669.4 158.8 672.7M156.3 659.2Q151.7 660.8 148.0 657.6M267.0 653.2Q260.3 653.5 253.8 655.2M268.3 676.4Q268.4 681.7 263.2 682.7M274.7 699.4Q280.5 697.0 286.6 698.1M264.6 678.3Q269.1 680.3 273.8 681.5M266.3 657.5Q262.0 650.5 253.9 652.0M266.7 680.7Q269.1 675.3 266.6 670.0M275.3 685.2Q270.1 683.5 267.0 679.0M269.5 675.4Q265.6 679.7 259.9 679.2M272.2 682.2Q276.4 676.9 280.9 682.0M265.1 660.1Q265.7 667.1 267.1 673.9M263.6 669.5Q268.0 674.5 262.9 678.8M273.1 652.9Q273.4 659.7 266.6 659.2M260.7 665.2Q267.8 663.9 272.0 658.1M275.4 704.3Q277.1 709.4 272.5 712.2M378.5 682.2Q370.8 681.3 365.6 687.1M365.6 668.1Q366.5 675.3 373.6 676.3M376.1 690.3Q378.4 695.3 379.0 700.7M375.7 666.1Q378.5 671.5 384.2 669.1M380.0 696.6Q381.0 703.5 386.5 707.9M381.2 699.8Q384.4 693.2 377.7 690.2M379.1 704.6Q379.9 699.6 378.7 694.7M380.1 702.7Q374.5 698.8 370.0 693.5M382.5 668.2Q375.6 663.9 379.8 657.0M370.3 668.6Q368.6 674.5 370.1 680.5M379.5 685.7Q374.9 679.4 368.5 683.6M385.1 693.1Q379.7 688.9 376.4 694.9M363.3 675.9Q359.3 670.4 363.3 664.8M379.8 670.6Q377.5 664.6 381.0 659.2M56.7 780.6Q55.4 788.8 47.1 789.1M36.4 772.3Q29.2 773.7 27.9 766.5M62.2 778.2Q63.3 771.5 60.5 765.3M65.4 776.1Q61.7 782.1 54.7 781.4M53.8 787.5Q60.2 783.6 66.9 787.1M62.4 806.5Q69.4 804.9 68.7 797.8M53.5 811.3Q59.6 811.1 65.6 812.2M57.5 810.7Q49.4 812.8 47.4 804.7M73.9 799.7Q70.1 795.7 70.5 790.3M72.7 796.9Q75.0 789.8 81.7 793.2M166.6 782.1Q161.9 785.6 165.8 790.1M158.3 781.9Q156.9 786.5 160.2 789.9M164.3 763.0Q170.4 761.9 175.5 765.4M163.7 785.5Q157.3 783.0 151.2 779.9M146.3 767.9Q143.3 774.5 136.3 772.7M177.6 795.8Q183.1 797.6 188.5 795.2M180.8 797.1Q179.7 801.6 178.5 806.0M172.1 799.8Q168.6 807.2 175.1 812.1M148.6 814.7Q154.4 816.6 158.0 811.7M176.3 800.9Q170.1 802.4 167.6 796.4M254.9 779.5Q254.8 772.7 249.8 767.8M267.6 759.3Q268.9 764.4 273.2 767.5M250.8 776.2Q246.2 770.1 248.0 762.8M257.7 765.1Q259.1 757.6 266.3 754.9M285.7 791.7Q282.1 796.4 277.2 793.0M263.1 813.2Q260.5 817.7 255.5 816.7M290.0 797.0Q293.6 789.6 287.9 783.5M278.8 803.3Q278.4 810.7 271.3 812.8M292.1 796.3Q298.8 791.1 294.1 784.1M282.2 802.3Q285.7 807.0 283.0 812.3M368.0 771.3Q365.1 765.1 365.3 758.2M368.2 778.2Q368.4 784.1 372.4 788.6M369.1 761.5Q363.2 762.5 360.4 757.1M383.4 774.1Q390.1 775.7 391.3 782.4M388.4 793.8Q384.1 801.1 390.8 806.3M371.3 777.4Q378.9 779.5 381.0 771.9M365.0 776.3Q360.0 778.8 361.8 784.1M376.1 764.9Q381.0 763.9 385.8 762.5M359.6 814.7Q364.7 811.7 369.4 815.2M390.7 801.1Q395.5 803.9 396.4 809.3M477.8 675.6Q483.7 672.3 486.8 666.2M475.8 679.5Q479.6 681.5 482.9 684.1M476.7 672.8Q470.4 671.5 465.0 674.9M482.3 673.4Q490.3 676.6 488.5 685.1M489.4 680.2Q496.6 679.6 497.4 686.8M451.3 666.3Q457.9 664.4 464.8 665.2M486.5 704.2Q479.0 705.4 473.4 700.3M447.6 671.3Q441.7 667.9 438.8 674.1M485.2 664.8Q487.2 669.4 486.6 674.4M478.7 697.9Q481.6 693.1 486.7 695.2M477.8 683.5Q478.3 678.5 483.0 676.8M491.9 692.2Q488.6 696.9 483.6 699.6M595.8 686.1Q594.1 693.0 601.1 693.9M583.7 675.2Q576.7 673.5 570.7 677.7M595.2 700.5Q599.9 703.3 604.6 700.6M579.6 677.3Q577.0 672.3 578.8 667.0M592.1 694.2Q590.3 700.7 584.1 703.6M575.1 660.9Q576.3 668.0 569.3 669.7M600.1 698.4Q598.4 691.8 599.1 685.0M577.5 678.5Q579.2 671.4 586.5 672.5M557.9 671.3Q554.0 675.7 548.1 675.3M587.2 662.2Q591.6 663.3 593.3 667.4M594.4 683.2Q594.5 688.7 595.5 694.0M692.0 678.5Q697.7 682.6 696.5 689.5M676.6 660.3Q670.1 662.8 664.8 667.4M664.8 664.1Q662.2 656.4 654.2 655.7M678.4 669.2Q674.8 667.1 671.3 664.9M673.8 662.0Q679.5 664.8 685.2 667.4M681.3 666.5Q685.2 662.7 690.5 663.0M655.7 668.8Q660.3 673.9 666.5 670.8M693.8 682.2Q698.4 679.4 703.6 680.9M676.9 658.6Q669.8 654.4 663.1 659.3M692.2 663.4Q686.3 662.4 683.0 657.3M679.0 661.9Q675.8 658.9 673.5 655.2M793.2 665.9Q796.0 670.4 792.4 674.4M782.4 680.6Q779.0 675.6 773.0 674.3M794.6 682.0Q795.2 676.8 800.0 675.0M802.0 683.7Q796.4 689.0 797.8 696.7M784.8 667.9Q788.6 670.3 791.8 673.5M782.5 669.5Q781.3 674.5 782.4 679.4M800.9 679.3Q803.3 672.9 798.4 668.2M795.9 685.0Q797.3 676.7 789.2 674.1M795.1 679.1Q789.9 675.2 785.0 679.4M805.0 695.2Q802.0 701.3 798.8 707.3M771.7 671.1Q767.4 672.0 763.1 671.1M461.7 774.0Q457.5 767.3 451.4 772.2M469.6 766.6Q468.6 757.7 477.2 755.4M473.2 784.3Q468.1 781.5 462.8 783.9M455.7 772.1Q454.5 779.4 459.8 784.6M468.9 811.9Q467.2 806.6 462.2 804.1M461.0 811.5Q464.2 816.1 468.6 819.4M467.6 812.7Q467.2 805.2 459.8 804.5M468.4 813.0Q472.1 819.4 478.5 815.9M565.2 774.3Q567.8 768.3 561.8 765.8M568.5 769.2Q561.8 772.4 556.0 767.7M559.7 772.0Q565.4 768.1 570.2 773.1M560.3 767.1Q563.3 761.4 569.5 760.0M583.2 813.8Q576.8 813.1 572.8 818.1M607.8 804.3Q603.3 805.0 599.3 802.8M606.6 796.0Q603.6 800.8 599.1 804.3M580.1 814.0Q580.9 808.6 583.7 803.9M600.6 805.9Q598.7 810.0 594.2 810.8M585.3 811.8Q581.0 814.2 580.2 819.0M671.6 783.9Q666.6 779.5 667.5 772.9M686.4 781.2Q693.8 777.2 692.2 768.9M671.2 767.6Q677.8 766.0 681.1 760.1M688.6 768.6Q682.0 770.8 682.3 777.7M702.3 794.3Q704.5 798.9 702.3 803.5M708.5 797.2Q703.9 800.2 698.6 798.7M708.3 799.5Q704.2 804.2 698.1 802.8M772.7 769.1Q773.2 777.1 781.1 776.0M788.8 770.2Q787.7 774.8 785.1 778.7M773.7 771.3Q769.5 768.0 764.3 766.8M809.6 802.3Q811.5 809.6 818.1 813.3M805.4 804.5Q811.2 797.9 805.2 791.6M811.1 812.1Q808.4 818.5 801.5 819.4M810.7 806.2Q805.6 803.9 804.8 798.4M805.0 809.1Q809.3 804.3 813.8 799.5"/></defs><use href="#bt" fill="#adadad" stroke="#111" stroke-width="3.0" stroke-linejoin="round"/><use href="#st" fill="none" stroke="#1c1c1c" stroke-width="1.5" stroke-linecap="round"/><use href="#bn" fill="#adadad" stroke="#262626" stroke-width="2.0" stroke-linejoin="round"/><use href="#sn" fill="none" stroke="#2a2a2a" stroke-width="1.3" stroke-linecap="round"/></svg>
</body></html>
